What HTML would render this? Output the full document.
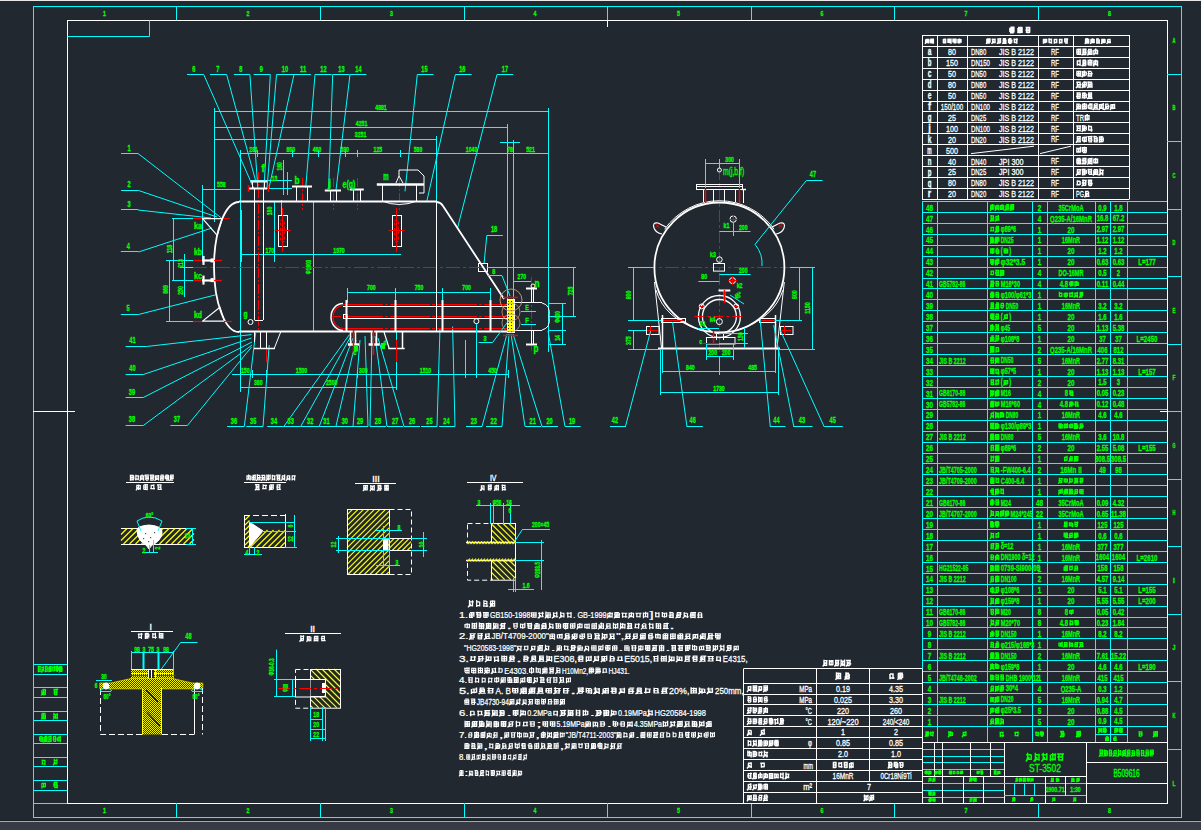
<!DOCTYPE html>
<html><head><meta charset="utf-8"><style>
html,body{margin:0;padding:0;background:#212830;overflow:hidden;width:1201px;height:830px}
svg{display:block;font-family:"Liberation Sans",sans-serif}
</style></head><body>
<svg width="1201" height="830" viewBox="0 0 1201 830">
<defs><pattern id="dz" width="2" height="2" patternUnits="userSpaceOnUse"><rect width="2" height="2" fill="#212830"/><rect width="1" height="1" fill="#ffff00"/><rect x="1" y="1" width="1" height="1" fill="#ffff00"/></pattern><pattern id="dt" width="3" height="3" patternUnits="userSpaceOnUse"><rect width="3" height="3" fill="#ffff00"/><rect x="1" y="1" width="1" height="1" fill="#303020"/></pattern></defs>
<rect width="1201" height="830" fill="#212830"/>
<rect x="0" y="0" width="1201" height="1" fill="#e8e8e8"/>
<rect x="0" y="820" width="1201" height="1" fill="#1a1e24"/>
<rect x="0" y="821" width="1201" height="1.2" fill="#a3a9b1"/>
<rect x="0" y="822.2" width="1201" height="8" fill="#363b45"/>
<rect x="33.5" y="6.5" width="1148" height="811" stroke="#00ffff" stroke-width="1" fill="none"/>
<rect x="67.5" y="20.5" width="1100" height="783" stroke="#ffffff" stroke-width="1" fill="none"/>
<line x1="176.5" y1="6" x2="176.5" y2="20" stroke="#00ffff" stroke-width="1"/>
<line x1="176.5" y1="803" x2="176.5" y2="817" stroke="#00ffff" stroke-width="1"/>
<line x1="320.5" y1="6" x2="320.5" y2="20" stroke="#00ffff" stroke-width="1"/>
<line x1="320.5" y1="803" x2="320.5" y2="817" stroke="#00ffff" stroke-width="1"/>
<line x1="464.5" y1="6" x2="464.5" y2="20" stroke="#00ffff" stroke-width="1"/>
<line x1="464.5" y1="803" x2="464.5" y2="817" stroke="#00ffff" stroke-width="1"/>
<line x1="607.5" y1="6" x2="607.5" y2="20" stroke="#00ffff" stroke-width="1"/>
<line x1="607.5" y1="803" x2="607.5" y2="817" stroke="#00ffff" stroke-width="1"/>
<line x1="751.5" y1="6" x2="751.5" y2="20" stroke="#00ffff" stroke-width="1"/>
<line x1="751.5" y1="803" x2="751.5" y2="817" stroke="#00ffff" stroke-width="1"/>
<line x1="894.5" y1="6" x2="894.5" y2="20" stroke="#00ffff" stroke-width="1"/>
<line x1="894.5" y1="803" x2="894.5" y2="817" stroke="#00ffff" stroke-width="1"/>
<line x1="1038.5" y1="6" x2="1038.5" y2="20" stroke="#00ffff" stroke-width="1"/>
<line x1="1038.5" y1="803" x2="1038.5" y2="817" stroke="#00ffff" stroke-width="1"/>
<text transform="translate(104.5,13.5)" y="2.88" font-size="8" fill="#00ff00" stroke="#00ff00" stroke-width="0.3" text-anchor="middle" textLength="2.96" lengthAdjust="spacingAndGlyphs" font-weight="bold">1</text>
<text transform="translate(104.5,810.5)" y="2.88" font-size="8" fill="#00ff00" stroke="#00ff00" stroke-width="0.3" text-anchor="middle" textLength="2.96" lengthAdjust="spacingAndGlyphs" font-weight="bold">1</text>
<text transform="translate(248,13.5)" y="2.88" font-size="8" fill="#00ff00" stroke="#00ff00" stroke-width="0.3" text-anchor="middle" textLength="2.96" lengthAdjust="spacingAndGlyphs" font-weight="bold">2</text>
<text transform="translate(248,810.5)" y="2.88" font-size="8" fill="#00ff00" stroke="#00ff00" stroke-width="0.3" text-anchor="middle" textLength="2.96" lengthAdjust="spacingAndGlyphs" font-weight="bold">2</text>
<text transform="translate(391.5,13.5)" y="2.88" font-size="8" fill="#00ff00" stroke="#00ff00" stroke-width="0.3" text-anchor="middle" textLength="2.96" lengthAdjust="spacingAndGlyphs" font-weight="bold">3</text>
<text transform="translate(391.5,810.5)" y="2.88" font-size="8" fill="#00ff00" stroke="#00ff00" stroke-width="0.3" text-anchor="middle" textLength="2.96" lengthAdjust="spacingAndGlyphs" font-weight="bold">3</text>
<text transform="translate(535,13.5)" y="2.88" font-size="8" fill="#00ff00" stroke="#00ff00" stroke-width="0.3" text-anchor="middle" textLength="2.96" lengthAdjust="spacingAndGlyphs" font-weight="bold">4</text>
<text transform="translate(535,810.5)" y="2.88" font-size="8" fill="#00ff00" stroke="#00ff00" stroke-width="0.3" text-anchor="middle" textLength="2.96" lengthAdjust="spacingAndGlyphs" font-weight="bold">4</text>
<text transform="translate(678.5,13.5)" y="2.88" font-size="8" fill="#00ff00" stroke="#00ff00" stroke-width="0.3" text-anchor="middle" textLength="2.96" lengthAdjust="spacingAndGlyphs" font-weight="bold">5</text>
<text transform="translate(678.5,810.5)" y="2.88" font-size="8" fill="#00ff00" stroke="#00ff00" stroke-width="0.3" text-anchor="middle" textLength="2.96" lengthAdjust="spacingAndGlyphs" font-weight="bold">5</text>
<text transform="translate(822,13.5)" y="2.88" font-size="8" fill="#00ff00" stroke="#00ff00" stroke-width="0.3" text-anchor="middle" textLength="2.96" lengthAdjust="spacingAndGlyphs" font-weight="bold">6</text>
<text transform="translate(822,810.5)" y="2.88" font-size="8" fill="#00ff00" stroke="#00ff00" stroke-width="0.3" text-anchor="middle" textLength="2.96" lengthAdjust="spacingAndGlyphs" font-weight="bold">6</text>
<text transform="translate(966,13.5)" y="2.88" font-size="8" fill="#00ff00" stroke="#00ff00" stroke-width="0.3" text-anchor="middle" textLength="2.96" lengthAdjust="spacingAndGlyphs" font-weight="bold">7</text>
<text transform="translate(966,810.5)" y="2.88" font-size="8" fill="#00ff00" stroke="#00ff00" stroke-width="0.3" text-anchor="middle" textLength="2.96" lengthAdjust="spacingAndGlyphs" font-weight="bold">7</text>
<text transform="translate(1109.5,13.5)" y="2.88" font-size="8" fill="#00ff00" stroke="#00ff00" stroke-width="0.3" text-anchor="middle" textLength="2.96" lengthAdjust="spacingAndGlyphs" font-weight="bold">8</text>
<text transform="translate(1109.5,810.5)" y="2.88" font-size="8" fill="#00ff00" stroke="#00ff00" stroke-width="0.3" text-anchor="middle" textLength="2.96" lengthAdjust="spacingAndGlyphs" font-weight="bold">8</text>
<line x1="1167" y1="74.5" x2="1181" y2="74.5" stroke="#00ffff" stroke-width="1"/>
<line x1="1167" y1="141.5" x2="1181" y2="141.5" stroke="#00ffff" stroke-width="1"/>
<line x1="1167" y1="209.5" x2="1181" y2="209.5" stroke="#00ffff" stroke-width="1"/>
<line x1="1167" y1="276.5" x2="1181" y2="276.5" stroke="#00ffff" stroke-width="1"/>
<line x1="1167" y1="344.5" x2="1181" y2="344.5" stroke="#00ffff" stroke-width="1"/>
<line x1="1167" y1="411.5" x2="1181" y2="411.5" stroke="#00ffff" stroke-width="1"/>
<line x1="1167" y1="479.5" x2="1181" y2="479.5" stroke="#00ffff" stroke-width="1"/>
<line x1="1167" y1="546.5" x2="1181" y2="546.5" stroke="#00ffff" stroke-width="1"/>
<line x1="1167" y1="614.5" x2="1181" y2="614.5" stroke="#00ffff" stroke-width="1"/>
<line x1="1167" y1="681.5" x2="1181" y2="681.5" stroke="#00ffff" stroke-width="1"/>
<line x1="1167" y1="749.5" x2="1181" y2="749.5" stroke="#00ffff" stroke-width="1"/>
<text transform="translate(1174,40)" y="2.88" font-size="8" fill="#00ff00" stroke="#00ff00" stroke-width="0.3" text-anchor="middle" textLength="2.96" lengthAdjust="spacingAndGlyphs" font-weight="bold">A</text>
<text transform="translate(1174,107.5)" y="2.88" font-size="8" fill="#00ff00" stroke="#00ff00" stroke-width="0.3" text-anchor="middle" textLength="2.96" lengthAdjust="spacingAndGlyphs" font-weight="bold">B</text>
<text transform="translate(1174,175)" y="2.88" font-size="8" fill="#00ff00" stroke="#00ff00" stroke-width="0.3" text-anchor="middle" textLength="2.96" lengthAdjust="spacingAndGlyphs" font-weight="bold">C</text>
<text transform="translate(1174,242.5)" y="2.88" font-size="8" fill="#00ff00" stroke="#00ff00" stroke-width="0.3" text-anchor="middle" textLength="2.96" lengthAdjust="spacingAndGlyphs" font-weight="bold">D</text>
<text transform="translate(1174,310)" y="2.88" font-size="8" fill="#00ff00" stroke="#00ff00" stroke-width="0.3" text-anchor="middle" textLength="2.96" lengthAdjust="spacingAndGlyphs" font-weight="bold">E</text>
<text transform="translate(1174,377.5)" y="2.88" font-size="8" fill="#00ff00" stroke="#00ff00" stroke-width="0.3" text-anchor="middle" textLength="2.96" lengthAdjust="spacingAndGlyphs" font-weight="bold">F</text>
<text transform="translate(1174,445)" y="2.88" font-size="8" fill="#00ff00" stroke="#00ff00" stroke-width="0.3" text-anchor="middle" textLength="2.96" lengthAdjust="spacingAndGlyphs" font-weight="bold">G</text>
<text transform="translate(1174,512.5)" y="2.88" font-size="8" fill="#00ff00" stroke="#00ff00" stroke-width="0.3" text-anchor="middle" textLength="2.96" lengthAdjust="spacingAndGlyphs" font-weight="bold">H</text>
<text transform="translate(1174,580)" y="2.88" font-size="8" fill="#00ff00" stroke="#00ff00" stroke-width="0.3" text-anchor="middle" textLength="1.78" lengthAdjust="spacingAndGlyphs" font-weight="bold">I</text>
<text transform="translate(1174,647.5)" y="2.88" font-size="8" fill="#00ff00" stroke="#00ff00" stroke-width="0.3" text-anchor="middle" textLength="2.96" lengthAdjust="spacingAndGlyphs" font-weight="bold">J</text>
<text transform="translate(1174,715)" y="2.88" font-size="8" fill="#00ff00" stroke="#00ff00" stroke-width="0.3" text-anchor="middle" textLength="2.96" lengthAdjust="spacingAndGlyphs" font-weight="bold">K</text>
<text transform="translate(1174,783)" y="2.88" font-size="8" fill="#00ff00" stroke="#00ff00" stroke-width="0.3" text-anchor="middle" textLength="2.96" lengthAdjust="spacingAndGlyphs" font-weight="bold">L</text>
<line x1="33" y1="411.5" x2="75" y2="411.5" stroke="#ffffff" stroke-width="1"/>
<line x1="1160" y1="411.5" x2="1167" y2="411.5" stroke="#ffffff" stroke-width="1"/>
<line x1="607.5" y1="20" x2="607.5" y2="27" stroke="#ffffff" stroke-width="1"/>
<polyline points="67.5,36.5 149.5,36.5 149.5,20.5" stroke="#00ffff" stroke-width="1" fill="none"/>
<line x1="33" y1="664.5" x2="67" y2="664.5" stroke="#00ffff" stroke-width="1"/>
<line x1="33" y1="674.5" x2="67" y2="674.5" stroke="#00ffff" stroke-width="1"/>
<line x1="33" y1="687.5" x2="67" y2="687.5" stroke="#00ffff" stroke-width="1"/>
<line x1="33" y1="697.5" x2="67" y2="697.5" stroke="#00ffff" stroke-width="1"/>
<line x1="33" y1="711.5" x2="67" y2="711.5" stroke="#00ffff" stroke-width="1"/>
<line x1="33" y1="720.5" x2="67" y2="720.5" stroke="#00ffff" stroke-width="1"/>
<line x1="33" y1="734.5" x2="67" y2="734.5" stroke="#00ffff" stroke-width="1"/>
<line x1="33" y1="743.5" x2="67" y2="743.5" stroke="#00ffff" stroke-width="1"/>
<line x1="33" y1="757.5" x2="67" y2="757.5" stroke="#00ffff" stroke-width="1"/>
<line x1="33" y1="766.5" x2="67" y2="766.5" stroke="#00ffff" stroke-width="1"/>
<line x1="33" y1="780.5" x2="67" y2="780.5" stroke="#00ffff" stroke-width="1"/>
<line x1="33" y1="790.5" x2="67" y2="790.5" stroke="#00ffff" stroke-width="1"/>
<line x1="33" y1="803.5" x2="67" y2="803.5" stroke="#00ffff" stroke-width="1"/>
<path d="M37.86 666.67H40.9M38.31 669H40.85M38.06 671.33H39.99M38.33 665.88V672.35M40.08 666.23V672.08M42.04 667.25H43.89M41.66 670.75H44.49M41.93 666.52V672.41M43.68 665.89V671.53M41.05 672.5L42.8 669M45.22 666.67H47.55M45.24 669H47.43M44.76 671.33H47.55M45.53 665.83V672.33M47.28 666.75V671.51M49.07 666.67H51.26M49.22 669H51.37M48.51 671.33H51.56M48.83 666.86V672.36M50 666.03V671.63M51.17 666.1V671.71M52.39 667.25H55.18M52.21 670.75H54.37M52.73 666.24V670.82M54.48 665.64V671.52M56.18 666.67H58.33M56.06 669H58.47M56.33 671.33H57.96M56.03 666.33V671.34M57.2 665.61V671.27M58.37 666.63V670.76M59.98 666.67H62.19M60.04 669H62.18M59.69 671.33H62.03M59.63 665.88V672M60.8 666.79V671.8M61.97 667.1V671.63M59.05 672.5L60.8 669" stroke="#00ff00" stroke-width="1.25" fill="none"/>
<path d="M42.39 689.67H44.96M42.36 692H45.81M41.65 694.33H45.68M41.88 690.05V693.82M43.62 688.76V695.19M45.38 688.91V695.09M41 695.5L43.62 692" stroke="#00ff00" stroke-width="1.25" fill="none"/>
<path d="M53.41 689.38H58.24M53.66 691.12H57.67M53.89 692.88H56.75M54.09 694.62H57.44M54.31 689.58V694.32M56.94 688.59V693.93" stroke="#00ff00" stroke-width="1.25" fill="none"/>
<path d="M41.63 713.38H45.63M41.76 715.12H45.62M41.3 716.88H44.7M41.69 718.62H46.08M41.88 713.55V719.32M43.62 713.49V718.56M45.38 714.16V718.43M41 719.5L43.62 716" stroke="#00ff00" stroke-width="1.25" fill="none"/>
<path d="M53.23 714.25H57.85M53.55 717.75H57.68M53.88 712.71V718.01M55.62 714.24V718.68M57.38 713.35V719.35M53 719.5L55.62 716" stroke="#00ff00" stroke-width="1.25" fill="none"/>
<path d="M39.57 736.67H42.39M39.62 739H43.02M40.19 741.33H42.82M39.67 736.71V740.9M41.12 736.83V741.98M42.57 736.63V742.34M44.57 736.38H47.27M43.68 738.12H47.02M44.04 739.88H46.9M44.19 741.62H46.7M44.11 736.83V742.16M45.56 735.92V741.8M47.01 736.91V742.15M43.39 742.5L45.56 739M49.12 736.38H51.14M48.44 738.12H51.92M48.62 739.88H51.72M48.88 741.62H51.23M48.91 736.11V740.79M51.09 735.64V742.32M47.83 742.5L50 739M52.9 736.67H55.33M53.06 739H56.61M53.45 741.33H56.16M53.36 736.63V741.04M55.53 735.71V741.82M57.87 737.25H60.49M57.54 740.75H60.94M57.43 737.16V741.24M58.88 736.31V741.2M60.33 735.65V742.22" stroke="#00ff00" stroke-width="1.25" fill="none"/>
<path d="M41.93 760.25H45.52M42.03 763.75H45.29M42.31 759.54V764.67M44.94 760.14V765.23" stroke="#00ff00" stroke-width="1.25" fill="none"/>
<path d="M54.26 760.25H57.11M53.16 763.75H57.07M54.31 758.74V763.77M56.94 758.84V763.97M53 765.5L55.62 762" stroke="#00ff00" stroke-width="1.25" fill="none"/>
<path d="M41.79 783.25H45.05M41.51 786.75H45.39M41.88 782.96V788.39M43.62 782.79V786.93M45.38 782.66V787.07" stroke="#00ff00" stroke-width="1.25" fill="none"/>
<path d="M53.84 782.38H57.43M53.03 784.12H57.56M53.29 785.88H58.24M54.26 787.62H57.98M54.31 782.33V787.23M56.94 782.47V787.93" stroke="#00ff00" stroke-width="1.25" fill="none"/>
<path d="M1010.42 27.38H1014.52M1010.04 29.12H1014.28M1009.57 30.88H1013.4M1009.95 32.62H1013.76M1010.03 27.83V31.9M1011.9 27.28V32.43M1013.77 27.38V32.6M1018.05 27.67H1022.38M1018.08 30H1021.33M1018.76 32.33H1021.25M1018.13 28.06V33.15M1020 27.28V32.77M1021.87 27.19V32.95M1025.66 27.67H1030.39M1025.51 30H1029.59M1026.88 32.33H1029.82M1026.7 27.14V33.06M1029.5 26.74V32.68" stroke="#ffffff" stroke-width="1.75" fill="none"/>
<line x1="922" y1="35.5" x2="1129" y2="35.5" stroke="#ffffff" stroke-width="1"/>
<line x1="922" y1="46.5" x2="1129" y2="46.5" stroke="#ffffff" stroke-width="1"/>
<line x1="922" y1="57.5" x2="1129" y2="57.5" stroke="#ffffff" stroke-width="1"/>
<line x1="922" y1="68.5" x2="1129" y2="68.5" stroke="#ffffff" stroke-width="1"/>
<line x1="922" y1="79.5" x2="1129" y2="79.5" stroke="#ffffff" stroke-width="1"/>
<line x1="922" y1="90.5" x2="1129" y2="90.5" stroke="#ffffff" stroke-width="1"/>
<line x1="922" y1="101.5" x2="1129" y2="101.5" stroke="#ffffff" stroke-width="1"/>
<line x1="922" y1="111.5" x2="1129" y2="111.5" stroke="#ffffff" stroke-width="1"/>
<line x1="922" y1="122.5" x2="1129" y2="122.5" stroke="#ffffff" stroke-width="1"/>
<line x1="922" y1="133.5" x2="1129" y2="133.5" stroke="#ffffff" stroke-width="1"/>
<line x1="922" y1="144.5" x2="1129" y2="144.5" stroke="#ffffff" stroke-width="1"/>
<line x1="922" y1="155.5" x2="1129" y2="155.5" stroke="#ffffff" stroke-width="1"/>
<line x1="922" y1="166.5" x2="1129" y2="166.5" stroke="#ffffff" stroke-width="1"/>
<line x1="922" y1="177.5" x2="1129" y2="177.5" stroke="#ffffff" stroke-width="1"/>
<line x1="922" y1="188.5" x2="1129" y2="188.5" stroke="#ffffff" stroke-width="1"/>
<line x1="922" y1="199.5" x2="1129" y2="199.5" stroke="#ffffff" stroke-width="1"/>
<line x1="922.5" y1="35" x2="922.5" y2="199.5" stroke="#ffffff" stroke-width="1"/>
<line x1="937.5" y1="35" x2="937.5" y2="199.5" stroke="#ffffff" stroke-width="1"/>
<line x1="967.5" y1="35" x2="967.5" y2="199.5" stroke="#ffffff" stroke-width="1"/>
<line x1="1038.5" y1="35" x2="1038.5" y2="199.5" stroke="#ffffff" stroke-width="1"/>
<line x1="1073.5" y1="35" x2="1073.5" y2="199.5" stroke="#ffffff" stroke-width="1"/>
<line x1="1129.5" y1="35" x2="1129.5" y2="199.5" stroke="#ffffff" stroke-width="1"/>
<path d="M926.12 39.59H929.14M925.83 42.34H929.05M925.68 39.18V42.34M927.15 38.77V43.13M928.62 38.7V43.58M924.95 43.71L927.15 40.96M930.23 39.13H934.03M930.09 40.96H933.23M930.33 42.79H933.97M930.38 39.56V42.63M931.85 39.55V43.57M933.32 38.58V43.66" stroke="#ffffff" stroke-width="1.5" fill="none"/>
<path d="M943.38 39.13H945.58M943.19 40.96H945.45M942.84 42.79H945.99M943.4 38.92V43.03M945.6 38.66V43.33M948.48 39.59H951.35M947.32 42.34H951.58M948.03 38.57V42.87M949.5 38.52V43.35M950.97 38.38V43.69M953.12 39.13H956.64M953.24 40.96H955.46M953.58 42.79H956.35M953.03 38.46V42.43M954.5 39.07V42.98M955.97 38.49V43.1M958.36 39.13H960.39M957.35 40.96H961.68M957.97 42.79H960.41M958.03 38.92V43.37M959.5 38.82V42.8M960.97 39.1V42.81" stroke="#ffffff" stroke-width="1.5" fill="none"/>
<path d="M987.04 39.03H989.35M986.56 40.96H989.56M987.06 42.89H989.83M986.85 38.65V43.36M988.4 38.14V43.67M989.95 38.16V42.79M986.08 43.86L988.4 40.96M991.64 39.51H994.99M992.73 42.41H995.23M992.68 38.47V43.51M995 38.48V43.19M991.52 43.86L993.84 40.96M997.33 39.03H1000.26M998.31 40.96H1000.84M997.3 42.89H1000.26M998.12 38.51V43.34M1000.44 38.06V43.31M996.96 43.86L999.28 40.96M1002.75 38.79H1005.96M1002.53 40.23H1005.9M1002.6 41.69H1006.22M1002.95 43.14H1006.62M1003.56 38.97V43.74M1005.88 39.45V42.62M1002.4 43.86L1004.72 40.96M1008.9 38.79H1011.48M1008.53 40.23H1012.08M1008.7 41.69H1012.28M1008.99 43.14H1011.48M1008.61 38.8V43.24M1010.16 39.08V43.13M1011.71 39.38V42.77M1013.4 39.51H1017.86M1014.17 42.41H1016.58M1014.44 38.61V43.21M1016.76 38.13V43.83" stroke="#ffffff" stroke-width="1.5" fill="none"/>
<path d="M1043.07 39.51H1046.7M1042.8 42.41H1046.04M1043.47 39.36V43.73M1045.02 38.82V42.78M1046.57 38.75V42.69M1048.26 39.51H1051.68M1048.58 42.41H1051.4M1049.1 38.17V42.54M1051.42 38.48V43.79M1054.01 39.51H1057.36M1054.09 42.41H1056.86M1054.34 38.96V43.67M1056.66 38.76V43.16M1059.36 39.51H1062.66M1059.14 42.41H1062.41M1059.58 38.74V43.69M1061.9 39.36V43.57M1064.06 39.03H1068.19M1064.37 40.96H1066.92M1065.04 42.89H1067.76M1064.82 39.39V42.51M1067.14 38.17V43.73" stroke="#ffffff" stroke-width="1.5" fill="none"/>
<path d="M1084.98 39.03H1088.3M1085.51 40.96H1088.21M1085.78 42.89H1089.12M1085.57 39.36V43.16M1087.12 38.1V43.85M1088.67 38.77V43.21M1084.8 43.86L1087.12 40.96M1090.72 39.51H1094.44M1091.41 42.41H1094.88M1091.01 39.15V42.64M1092.56 38.23V42.52M1094.11 39.09V42.55M1090.24 43.86L1092.56 40.96M1096.23 39.03H1098.93M1096.5 40.96H1099.82M1096.28 42.89H1099.94M1096.84 38.13V43.71M1099.16 39.27V43.45M1101.73 39.51H1105.32M1102.2 42.41H1104.67M1101.89 38.68V43.82M1103.44 39.16V43.28M1104.99 39.33V43.06M1101.12 43.86L1103.44 40.96M1107.86 39.51H1110.63M1107.42 42.41H1111.01M1107.72 39.32V43.16M1110.04 39.38V43.06M1106.56 43.86L1108.88 40.96" stroke="#ffffff" stroke-width="1.5" fill="none"/>
<text transform="translate(929.5,51.88)" y="3.6" font-size="10" fill="#ffffff" stroke="#ffffff" stroke-width="0.3" text-anchor="middle" textLength="3.7" lengthAdjust="spacingAndGlyphs" font-weight="bold">a</text>
<text transform="translate(952,51.88)" y="3.42" font-size="9.5" fill="#ffffff" stroke="#ffffff" stroke-width="0.3" text-anchor="middle" textLength="7.98" lengthAdjust="spacingAndGlyphs">80</text>
<text transform="translate(971,51.88)" y="3.42" font-size="9.5" fill="#ffffff" stroke="#ffffff" stroke-width="0.3" text-anchor="start" textLength="15.2" lengthAdjust="spacingAndGlyphs">DN80</text>
<text transform="translate(999,51.88)" y="3.42" font-size="9.5" fill="#ffffff" stroke="#ffffff" stroke-width="0.3" text-anchor="start" textLength="35.05" lengthAdjust="spacingAndGlyphs">JIS B 2122</text>
<text transform="translate(1055,51.88)" y="3.24" font-size="9" fill="#ffffff" stroke="#ffffff" stroke-width="0.3" text-anchor="middle" textLength="8.01" lengthAdjust="spacingAndGlyphs">RF</text>
<path d="M1076.46 49.55H1081.04M1077.21 51.88H1080.39M1076.67 54.21H1081.07M1076.91 49.23V54.21M1078.73 48.59V54.25M1080.55 48.51V54.5M1082.4 49.26H1086.57M1082.9 51.01H1086.42M1082.56 52.76H1086.72M1081.95 54.51H1086.21M1083.03 48.94V54.74M1085.76 49.8V55.03M1081.66 55.38L1084.39 51.88M1088 49.55H1091.92M1087.94 51.88H1092.23M1087.42 54.21H1092.33M1088.23 50.07V55.16M1090.05 49.26V54.28M1091.87 49.89V55M1087.32 55.38L1090.05 51.88M1093.63 50.13H1097.71M1094.54 53.63H1097.05M1093.89 49.91V55.34M1095.71 48.44V54.14M1097.53 49.95V54.55" stroke="#ffffff" stroke-width="1.44" fill="none"/>
<text transform="translate(929.5,62.8)" y="3.6" font-size="10" fill="#ffffff" stroke="#ffffff" stroke-width="0.3" text-anchor="middle" textLength="3.7" lengthAdjust="spacingAndGlyphs" font-weight="bold">b</text>
<text transform="translate(952,62.8)" y="3.42" font-size="9.5" fill="#ffffff" stroke="#ffffff" stroke-width="0.3" text-anchor="middle" textLength="11.97" lengthAdjust="spacingAndGlyphs">150</text>
<text transform="translate(971,62.8)" y="3.42" font-size="9.5" fill="#ffffff" stroke="#ffffff" stroke-width="0.3" text-anchor="start" textLength="19" lengthAdjust="spacingAndGlyphs">DN150</text>
<text transform="translate(999,62.8)" y="3.42" font-size="9.5" fill="#ffffff" stroke="#ffffff" stroke-width="0.3" text-anchor="start" textLength="35.05" lengthAdjust="spacingAndGlyphs">JIS B 2122</text>
<text transform="translate(1055,62.8)" y="3.24" font-size="9" fill="#ffffff" stroke="#ffffff" stroke-width="0.3" text-anchor="middle" textLength="8.01" lengthAdjust="spacingAndGlyphs">RF</text>
<path d="M1076.64 61.05H1079.94M1077.35 64.55H1080.06M1077.37 61V65.87M1080.1 59.49V66.03M1083.2 60.17H1085.94M1082.72 61.92H1085.87M1082.41 63.67H1086.22M1081.72 65.42H1085.84M1083.03 59.71V64.69M1085.76 60.43V65.77M1081.66 66.3L1084.39 62.8M1088.46 60.47H1092.6M1087.44 62.8H1091.92M1088.27 65.13H1092.14M1088.23 59.69V65.25M1090.05 59.32V65.77M1091.87 60.11V64.62M1093.84 61.05H1097.54M1093.03 64.55H1097.77M1093.89 60.44V66.2M1095.71 59.64V64.75M1097.53 60.43V66.16M1092.98 66.3L1095.71 62.8" stroke="#ffffff" stroke-width="1.44" fill="none"/>
<text transform="translate(929.5,73.72)" y="3.6" font-size="10" fill="#ffffff" stroke="#ffffff" stroke-width="0.3" text-anchor="middle" textLength="3.7" lengthAdjust="spacingAndGlyphs" font-weight="bold">c</text>
<text transform="translate(952,73.72)" y="3.42" font-size="9.5" fill="#ffffff" stroke="#ffffff" stroke-width="0.3" text-anchor="middle" textLength="7.98" lengthAdjust="spacingAndGlyphs">50</text>
<text transform="translate(971,73.72)" y="3.42" font-size="9.5" fill="#ffffff" stroke="#ffffff" stroke-width="0.3" text-anchor="start" textLength="15.2" lengthAdjust="spacingAndGlyphs">DN50</text>
<text transform="translate(999,73.72)" y="3.42" font-size="9.5" fill="#ffffff" stroke="#ffffff" stroke-width="0.3" text-anchor="start" textLength="35.05" lengthAdjust="spacingAndGlyphs">JIS B 2122</text>
<text transform="translate(1055,73.72)" y="3.24" font-size="9" fill="#ffffff" stroke="#ffffff" stroke-width="0.3" text-anchor="middle" textLength="8.01" lengthAdjust="spacingAndGlyphs">RF</text>
<path d="M1076.37 71.39H1081.4M1076.55 73.72H1080.77M1077.12 76.05H1081.14M1076.91 71.61V75.93M1078.73 71.1V76.86M1080.55 71.92V76.67M1082.02 71.97H1085.87M1082.14 75.47H1085.56M1082.57 71.09V76.89M1084.39 70.61V76.49M1086.21 71.38V75.56M1081.66 77.22L1084.39 73.72M1087.67 71.39H1091.18M1087.55 73.72H1092.7M1087.42 76.05H1092.14M1088.68 71.79V75.67M1091.41 71.5V75.47" stroke="#ffffff" stroke-width="1.44" fill="none"/>
<text transform="translate(929.5,84.64)" y="3.6" font-size="10" fill="#ffffff" stroke="#ffffff" stroke-width="0.3" text-anchor="middle" textLength="3.7" lengthAdjust="spacingAndGlyphs" font-weight="bold">d</text>
<text transform="translate(952,84.64)" y="3.42" font-size="9.5" fill="#ffffff" stroke="#ffffff" stroke-width="0.3" text-anchor="middle" textLength="7.98" lengthAdjust="spacingAndGlyphs">80</text>
<text transform="translate(971,84.64)" y="3.42" font-size="9.5" fill="#ffffff" stroke="#ffffff" stroke-width="0.3" text-anchor="start" textLength="15.2" lengthAdjust="spacingAndGlyphs">DN80</text>
<text transform="translate(999,84.64)" y="3.42" font-size="9.5" fill="#ffffff" stroke="#ffffff" stroke-width="0.3" text-anchor="start" textLength="35.05" lengthAdjust="spacingAndGlyphs">JIS B 2122</text>
<text transform="translate(1055,84.64)" y="3.24" font-size="9" fill="#ffffff" stroke="#ffffff" stroke-width="0.3" text-anchor="middle" textLength="8.01" lengthAdjust="spacingAndGlyphs">RF</text>
<path d="M1076.3 82.31H1079.93M1077.22 84.64H1081.41M1077.09 86.97H1080.84M1077.37 81.79V87.56M1080.1 81.44V88.13M1076 88.14L1078.73 84.64M1083.23 82.31H1086.92M1083.24 84.64H1086.78M1082.24 86.97H1085.77M1082.57 82.58V87.38M1084.39 81.23V87.31M1086.21 81.79V86.53M1081.66 88.14L1084.39 84.64M1087.37 82.31H1092.11M1088.65 84.64H1091.52M1087.39 86.97H1092.72M1088.23 81.25V86.53M1090.05 81.59V86.83M1091.87 82.71V87.55M1087.32 88.14L1090.05 84.64" stroke="#ffffff" stroke-width="1.44" fill="none"/>
<text transform="translate(929.5,95.56)" y="3.6" font-size="10" fill="#ffffff" stroke="#ffffff" stroke-width="0.3" text-anchor="middle" textLength="3.7" lengthAdjust="spacingAndGlyphs" font-weight="bold">e</text>
<text transform="translate(952,95.56)" y="3.42" font-size="9.5" fill="#ffffff" stroke="#ffffff" stroke-width="0.3" text-anchor="middle" textLength="7.98" lengthAdjust="spacingAndGlyphs">50</text>
<text transform="translate(971,95.56)" y="3.42" font-size="9.5" fill="#ffffff" stroke="#ffffff" stroke-width="0.3" text-anchor="start" textLength="15.2" lengthAdjust="spacingAndGlyphs">DN50</text>
<text transform="translate(999,95.56)" y="3.42" font-size="9.5" fill="#ffffff" stroke="#ffffff" stroke-width="0.3" text-anchor="start" textLength="35.05" lengthAdjust="spacingAndGlyphs">JIS B 2122</text>
<text transform="translate(1055,95.56)" y="3.24" font-size="9" fill="#ffffff" stroke="#ffffff" stroke-width="0.3" text-anchor="middle" textLength="8.01" lengthAdjust="spacingAndGlyphs">RF</text>
<path d="M1076.43 92.94H1080.29M1076.52 94.69H1081.01M1076.01 96.44H1080.22M1077.5 98.19H1080.42M1077.37 93.71V99.02M1080.1 92.47V98.23M1083.16 93.23H1085.79M1081.88 95.56H1086.31M1081.67 97.89H1085.59M1082.57 92.59V97.85M1084.39 92.32V98.65M1086.21 93.57V98.25M1088.16 92.94H1092.14M1087.58 94.69H1092.11M1088.38 96.44H1091.99M1088.21 98.19H1092.52M1088.68 92.81V98.88M1091.41 92.19V97.97M1087.32 99.06L1090.05 95.56" stroke="#ffffff" stroke-width="1.44" fill="none"/>
<text transform="translate(929.5,106.48)" y="3.6" font-size="10" fill="#ffffff" stroke="#ffffff" stroke-width="0.3" text-anchor="middle" textLength="2.96" lengthAdjust="spacingAndGlyphs" font-weight="bold">f</text>
<text transform="translate(952,106.48)" y="3.42" font-size="9.5" fill="#ffffff" stroke="#ffffff" stroke-width="0.3" text-anchor="middle" textLength="22.61" lengthAdjust="spacingAndGlyphs">150/100</text>
<text transform="translate(971,106.48)" y="3.42" font-size="9.5" fill="#ffffff" stroke="#ffffff" stroke-width="0.3" text-anchor="start" textLength="19" lengthAdjust="spacingAndGlyphs">DN100</text>
<text transform="translate(999,106.48)" y="3.42" font-size="9.5" fill="#ffffff" stroke="#ffffff" stroke-width="0.3" text-anchor="start" textLength="35.05" lengthAdjust="spacingAndGlyphs">JIS B 2122</text>
<text transform="translate(1055,106.48)" y="3.24" font-size="9" fill="#ffffff" stroke="#ffffff" stroke-width="0.3" text-anchor="middle" textLength="8.01" lengthAdjust="spacingAndGlyphs">RF</text>
<path d="M1077.62 104.15H1079.87M1076.28 106.48H1081.24M1076.75 108.81H1080M1076.91 103.39V109.04M1078.73 104.33V108.65M1080.55 104.34V109.47M1076 109.98L1078.73 106.48M1082.08 104.15H1086.69M1082.38 106.48H1086.82M1082.05 108.81H1086.66M1082.57 104.57V109.65M1084.39 103.09V109.54M1086.21 103.41V109.06M1088.94 104.73H1092.61M1088.1 108.23H1091.44M1088.23 104.45V108.38M1090.05 103.05V109.47M1091.87 103.19V109.65M1094.5 103.85H1097.83M1094.4 105.6H1097.7M1093.41 107.35H1097.17M1094.53 109.1H1098.27M1094.35 104.02V108.9M1097.08 103.36V109.33M1092.98 109.98L1095.71 106.48M1098.7 104.73H1102.9M1100.14 108.23H1102.77M1099.55 104.41V109.26M1101.37 103.63V108.89M1103.19 103.12V109.92M1098.64 109.98L1101.37 106.48M1104.97 104.15H1108.46M1105.39 106.48H1109.51M1105.17 108.81H1108.69M1105.66 103.68V109.51M1108.39 104.71V108.81M1104.3 109.98L1107.03 106.48M1111.18 104.73H1113.97M1110.64 108.23H1115.39M1110.87 104.32V108.58M1112.69 104.11V109.3M1114.51 103.69V108.33M1109.96 109.98L1112.69 106.48" stroke="#ffffff" stroke-width="1.44" fill="none"/>
<text transform="translate(929.5,117.4)" y="3.6" font-size="10" fill="#ffffff" stroke="#ffffff" stroke-width="0.3" text-anchor="middle" textLength="3.7" lengthAdjust="spacingAndGlyphs" font-weight="bold">g</text>
<text transform="translate(952,117.4)" y="3.42" font-size="9.5" fill="#ffffff" stroke="#ffffff" stroke-width="0.3" text-anchor="middle" textLength="7.98" lengthAdjust="spacingAndGlyphs">25</text>
<text transform="translate(971,117.4)" y="3.42" font-size="9.5" fill="#ffffff" stroke="#ffffff" stroke-width="0.3" text-anchor="start" textLength="15.2" lengthAdjust="spacingAndGlyphs">DN25</text>
<text transform="translate(999,117.4)" y="3.42" font-size="9.5" fill="#ffffff" stroke="#ffffff" stroke-width="0.3" text-anchor="start" textLength="35.05" lengthAdjust="spacingAndGlyphs">JIS B 2122</text>
<text transform="translate(1055,117.4)" y="3.24" font-size="9" fill="#ffffff" stroke="#ffffff" stroke-width="0.3" text-anchor="middle" textLength="8.01" lengthAdjust="spacingAndGlyphs">RF</text>
<text transform="translate(1076,117.4)" y="3.42" font-size="9.5" fill="#ffffff" stroke="#ffffff" stroke-width="0.3" text-anchor="start" textLength="7.98" lengthAdjust="spacingAndGlyphs">TR</text>
<path d="M1084.59 115.65H1089.71M1085.35 119.15H1089.26M1085.31 115.25V120.67M1087.13 113.99V120.65M1088.95 115.31V120.21" stroke="#ffffff" stroke-width="1.44" fill="none"/>
<text transform="translate(929.5,128.32)" y="3.6" font-size="10" fill="#ffffff" stroke="#ffffff" stroke-width="0.3" text-anchor="middle" textLength="2.59" lengthAdjust="spacingAndGlyphs" font-weight="bold">j</text>
<text transform="translate(952,128.32)" y="3.42" font-size="9.5" fill="#ffffff" stroke="#ffffff" stroke-width="0.3" text-anchor="middle" textLength="11.97" lengthAdjust="spacingAndGlyphs">100</text>
<text transform="translate(971,128.32)" y="3.42" font-size="9.5" fill="#ffffff" stroke="#ffffff" stroke-width="0.3" text-anchor="start" textLength="19" lengthAdjust="spacingAndGlyphs">DN100</text>
<text transform="translate(999,128.32)" y="3.42" font-size="9.5" fill="#ffffff" stroke="#ffffff" stroke-width="0.3" text-anchor="start" textLength="35.05" lengthAdjust="spacingAndGlyphs">JIS B 2122</text>
<text transform="translate(1055,128.32)" y="3.24" font-size="9" fill="#ffffff" stroke="#ffffff" stroke-width="0.3" text-anchor="middle" textLength="8.01" lengthAdjust="spacingAndGlyphs">RF</text>
<path d="M1076.24 125.99H1081M1076.85 128.32H1079.94M1076.18 130.65H1080.66M1077.37 126.23V130.13M1080.1 125.17V131.6M1081.75 125.99H1085.6M1082.3 128.32H1085.64M1082.68 130.65H1085.77M1082.57 125.1V130.44M1084.39 125.21V131.11M1086.21 126.3V130.37M1081.66 131.82L1084.39 128.32M1087.97 126.57H1091.93M1087.95 130.07H1092.58M1088.68 125.25V130.55M1091.41 126.39V131.75" stroke="#ffffff" stroke-width="1.44" fill="none"/>
<text transform="translate(929.5,139.24)" y="3.6" font-size="10" fill="#ffffff" stroke="#ffffff" stroke-width="0.3" text-anchor="middle" textLength="3.7" lengthAdjust="spacingAndGlyphs" font-weight="bold">k</text>
<text transform="translate(952,139.24)" y="3.42" font-size="9.5" fill="#ffffff" stroke="#ffffff" stroke-width="0.3" text-anchor="middle" textLength="7.98" lengthAdjust="spacingAndGlyphs">20</text>
<text transform="translate(971,139.24)" y="3.42" font-size="9.5" fill="#ffffff" stroke="#ffffff" stroke-width="0.3" text-anchor="start" textLength="15.2" lengthAdjust="spacingAndGlyphs">DN20</text>
<text transform="translate(999,139.24)" y="3.42" font-size="9.5" fill="#ffffff" stroke="#ffffff" stroke-width="0.3" text-anchor="start" textLength="35.05" lengthAdjust="spacingAndGlyphs">JIS B 2122</text>
<text transform="translate(1055,139.24)" y="3.24" font-size="9" fill="#ffffff" stroke="#ffffff" stroke-width="0.3" text-anchor="middle" textLength="8.01" lengthAdjust="spacingAndGlyphs">RF</text>
<path d="M1077.09 136.62H1080.93M1076.64 138.37H1080.71M1077.39 140.12H1080.19M1077.06 141.87H1080.96M1077.37 136.18V142.06M1080.1 136.38V141.86M1076 142.74L1078.73 139.24M1082.42 137.49H1086.39M1082.67 140.99H1085.78M1082.57 137.2V141.32M1084.39 136.44V142.62M1086.21 136.37V142.1M1087.39 136.62H1092.57M1088.83 138.37H1092.27M1088.5 140.12H1092.65M1088.55 141.87H1091.31M1088.68 136.88V141.37M1091.41 135.79V142.62M1093.3 136.62H1096.83M1093.79 138.37H1096.87M1094.48 140.12H1098.17M1094.27 141.87H1096.92M1094.35 135.85V142.13M1097.08 137.06V142.46M1098.88 136.91H1103.28M1100.15 139.24H1103.76M1099.07 141.57H1103.27M1099.55 136.3V142.68M1101.37 136.06V142.46M1103.19 137.38V141.55" stroke="#ffffff" stroke-width="1.44" fill="none"/>
<text transform="translate(929.5,150.16)" y="3.6" font-size="10" fill="#ffffff" stroke="#ffffff" stroke-width="0.3" text-anchor="middle" textLength="4.44" lengthAdjust="spacingAndGlyphs" font-weight="bold">m</text>
<text transform="translate(952,150.16)" y="3.42" font-size="9.5" fill="#ffffff" stroke="#ffffff" stroke-width="0.3" text-anchor="middle" textLength="11.97" lengthAdjust="spacingAndGlyphs">500</text>
<line x1="971" y1="153.62" x2="1034" y2="146.2" stroke="#ffffff" stroke-width="1"/>
<line x1="1040" y1="153.62" x2="1071" y2="146.2" stroke="#ffffff" stroke-width="1"/>
<path d="M1076.19 148.41H1080.59M1077.04 151.91H1080.87M1076.91 148.19V152.69M1078.73 147.68V152.12M1080.55 146.84V151.92M1082.09 147.83H1085.5M1082.61 150.16H1086.53M1082.91 152.49H1086.4M1082.57 146.97V152.36M1084.39 146.74V152.23M1086.21 147.1V152.54" stroke="#ffffff" stroke-width="1.44" fill="none"/>
<text transform="translate(929.5,161.08)" y="3.6" font-size="10" fill="#ffffff" stroke="#ffffff" stroke-width="0.3" text-anchor="middle" textLength="3.7" lengthAdjust="spacingAndGlyphs" font-weight="bold">n</text>
<text transform="translate(952,161.08)" y="3.42" font-size="9.5" fill="#ffffff" stroke="#ffffff" stroke-width="0.3" text-anchor="middle" textLength="7.98" lengthAdjust="spacingAndGlyphs">40</text>
<text transform="translate(971,161.08)" y="3.42" font-size="9.5" fill="#ffffff" stroke="#ffffff" stroke-width="0.3" text-anchor="start" textLength="15.2" lengthAdjust="spacingAndGlyphs">DN40</text>
<text transform="translate(999,161.08)" y="3.42" font-size="9.5" fill="#ffffff" stroke="#ffffff" stroke-width="0.3" text-anchor="start" textLength="24.54" lengthAdjust="spacingAndGlyphs">JPI 300</text>
<text transform="translate(1055,161.08)" y="3.24" font-size="9" fill="#ffffff" stroke="#ffffff" stroke-width="0.3" text-anchor="middle" textLength="8.01" lengthAdjust="spacingAndGlyphs">RF</text>
<path d="M1077.2 158.45H1080.24M1076.36 160.2H1080.98M1077.02 161.95H1080.78M1076.6 163.7H1081.38M1076.91 158.43V163.51M1078.73 157.66V164.48M1080.55 158.57V164.05M1082.34 158.45H1086.63M1081.88 160.2H1086.52M1083.02 161.95H1086.86M1081.68 163.7H1085.81M1083.03 158.82V163.79M1085.76 157.69V164.33M1088.65 158.75H1091.2M1087.41 161.08H1091.44M1088.78 163.41H1091.81M1088.23 158.59V163.53M1090.05 158.49V163.72M1091.87 157.87V164.58M1087.32 164.58L1090.05 161.08M1093.28 159.33H1098.18M1094.47 162.83H1098.27M1093.89 158.65V163.43M1095.71 157.93V163.86M1097.53 158.49V163.46" stroke="#ffffff" stroke-width="1.44" fill="none"/>
<text transform="translate(929.5,172)" y="3.6" font-size="10" fill="#ffffff" stroke="#ffffff" stroke-width="0.3" text-anchor="middle" textLength="3.7" lengthAdjust="spacingAndGlyphs" font-weight="bold">p</text>
<text transform="translate(952,172)" y="3.42" font-size="9.5" fill="#ffffff" stroke="#ffffff" stroke-width="0.3" text-anchor="middle" textLength="7.98" lengthAdjust="spacingAndGlyphs">25</text>
<text transform="translate(971,172)" y="3.42" font-size="9.5" fill="#ffffff" stroke="#ffffff" stroke-width="0.3" text-anchor="start" textLength="15.2" lengthAdjust="spacingAndGlyphs">DN25</text>
<text transform="translate(999,172)" y="3.42" font-size="9.5" fill="#ffffff" stroke="#ffffff" stroke-width="0.3" text-anchor="start" textLength="24.54" lengthAdjust="spacingAndGlyphs">JPI 300</text>
<text transform="translate(1055,172)" y="3.24" font-size="9" fill="#ffffff" stroke="#ffffff" stroke-width="0.3" text-anchor="middle" textLength="8.01" lengthAdjust="spacingAndGlyphs">RF</text>
<path d="M1076.83 169.67H1081.36M1077.03 172H1079.83M1077.19 174.33H1080.68M1077.37 169.44V174.84M1080.1 169.26V173.9M1076 175.5L1078.73 172M1081.95 169.38H1085.49M1082.09 171.12H1086.07M1081.86 172.88H1085.66M1083.18 174.62H1085.58M1082.57 168.96V175.41M1084.39 169.61V174.31M1086.21 169.7V173.89M1087.46 169.67H1091.95M1087.6 172H1091.3M1088.7 174.33H1092.45M1088.68 168.78V173.9M1091.41 168.84V174.82M1093.75 169.67H1097.57M1092.99 172H1098.4M1094.55 174.33H1098.06M1093.89 170.05V174.12M1095.71 169.19V174.48M1097.53 169.49V175.2M1092.98 175.5L1095.71 172M1099.66 170.25H1103.83M1100.24 173.75H1102.95M1100.01 168.55V175.26M1102.74 169.63V175.43M1098.64 175.5L1101.37 172" stroke="#ffffff" stroke-width="1.44" fill="none"/>
<text transform="translate(929.5,182.92)" y="3.6" font-size="10" fill="#ffffff" stroke="#ffffff" stroke-width="0.3" text-anchor="middle" textLength="3.7" lengthAdjust="spacingAndGlyphs" font-weight="bold">q</text>
<text transform="translate(952,182.92)" y="3.42" font-size="9.5" fill="#ffffff" stroke="#ffffff" stroke-width="0.3" text-anchor="middle" textLength="7.98" lengthAdjust="spacingAndGlyphs">80</text>
<text transform="translate(971,182.92)" y="3.42" font-size="9.5" fill="#ffffff" stroke="#ffffff" stroke-width="0.3" text-anchor="start" textLength="15.2" lengthAdjust="spacingAndGlyphs">DN80</text>
<text transform="translate(999,182.92)" y="3.42" font-size="9.5" fill="#ffffff" stroke="#ffffff" stroke-width="0.3" text-anchor="start" textLength="35.05" lengthAdjust="spacingAndGlyphs">JIS B 2122</text>
<text transform="translate(1055,182.92)" y="3.24" font-size="9" fill="#ffffff" stroke="#ffffff" stroke-width="0.3" text-anchor="middle" textLength="8.01" lengthAdjust="spacingAndGlyphs">RF</text>
<path d="M1077.4 181.17H1080.21M1076.33 184.67H1079.9M1077.37 180.35V185.26M1080.1 180.96V185.1M1082.06 180.59H1086.79M1081.72 182.92H1085.57M1083.15 185.25H1085.89M1083.03 179.57V185.11M1085.76 180.53V185.59M1081.66 186.42L1084.39 182.92M1087.8 180.3H1092.23M1087.75 182.05H1092.21M1088.84 183.8H1092.7M1088.56 185.55H1091.29M1088.68 180.77V185.37M1091.41 180.25V185.92" stroke="#ffffff" stroke-width="1.44" fill="none"/>
<text transform="translate(929.5,193.84)" y="3.6" font-size="10" fill="#ffffff" stroke="#ffffff" stroke-width="0.3" text-anchor="middle" textLength="3.33" lengthAdjust="spacingAndGlyphs" font-weight="bold">r</text>
<text transform="translate(952,193.84)" y="3.42" font-size="9.5" fill="#ffffff" stroke="#ffffff" stroke-width="0.3" text-anchor="middle" textLength="7.98" lengthAdjust="spacingAndGlyphs">20</text>
<text transform="translate(971,193.84)" y="3.42" font-size="9.5" fill="#ffffff" stroke="#ffffff" stroke-width="0.3" text-anchor="start" textLength="15.2" lengthAdjust="spacingAndGlyphs">DN20</text>
<text transform="translate(999,193.84)" y="3.42" font-size="9.5" fill="#ffffff" stroke="#ffffff" stroke-width="0.3" text-anchor="start" textLength="35.05" lengthAdjust="spacingAndGlyphs">JIS B 2122</text>
<text transform="translate(1055,193.84)" y="3.24" font-size="9" fill="#ffffff" stroke="#ffffff" stroke-width="0.3" text-anchor="middle" textLength="8.01" lengthAdjust="spacingAndGlyphs">RF</text>
<text transform="translate(1076,193.84)" y="3.42" font-size="9.5" fill="#ffffff" stroke="#ffffff" stroke-width="0.3" text-anchor="start" textLength="7.98" lengthAdjust="spacingAndGlyphs">PG</text>
<path d="M1085.11 191.51H1088.59M1084.97 193.84H1088.71M1085.28 196.17H1089.51M1085.77 191.85V197.18M1088.5 191.77V197.04M1084.4 197.34L1087.13 193.84" stroke="#ffffff" stroke-width="1.44" fill="none"/>
<line x1="922" y1="201.5" x2="1167" y2="201.5" stroke="#00ffff" stroke-width="1"/>
<line x1="922" y1="212.5" x2="1167" y2="212.5" stroke="#00ffff" stroke-width="1"/>
<line x1="922" y1="223.5" x2="1167" y2="223.5" stroke="#00ffff" stroke-width="1"/>
<line x1="922" y1="234.5" x2="1167" y2="234.5" stroke="#00ffff" stroke-width="1"/>
<line x1="922" y1="245.5" x2="1167" y2="245.5" stroke="#00ffff" stroke-width="1"/>
<line x1="922" y1="256.5" x2="1167" y2="256.5" stroke="#00ffff" stroke-width="1"/>
<line x1="922" y1="267.5" x2="1167" y2="267.5" stroke="#00ffff" stroke-width="1"/>
<line x1="922" y1="278.5" x2="1167" y2="278.5" stroke="#00ffff" stroke-width="1"/>
<line x1="922" y1="288.5" x2="1167" y2="288.5" stroke="#00ffff" stroke-width="1"/>
<line x1="922" y1="299.5" x2="1167" y2="299.5" stroke="#00ffff" stroke-width="1"/>
<line x1="922" y1="310.5" x2="1167" y2="310.5" stroke="#00ffff" stroke-width="1"/>
<line x1="922" y1="321.5" x2="1167" y2="321.5" stroke="#00ffff" stroke-width="1"/>
<line x1="922" y1="332.5" x2="1167" y2="332.5" stroke="#00ffff" stroke-width="1"/>
<line x1="922" y1="343.5" x2="1167" y2="343.5" stroke="#00ffff" stroke-width="1"/>
<line x1="922" y1="354.5" x2="1167" y2="354.5" stroke="#00ffff" stroke-width="1"/>
<line x1="922" y1="365.5" x2="1167" y2="365.5" stroke="#00ffff" stroke-width="1"/>
<line x1="922" y1="376.5" x2="1167" y2="376.5" stroke="#00ffff" stroke-width="1"/>
<line x1="922" y1="387.5" x2="1167" y2="387.5" stroke="#00ffff" stroke-width="1"/>
<line x1="922" y1="398.5" x2="1167" y2="398.5" stroke="#00ffff" stroke-width="1"/>
<line x1="922" y1="409.5" x2="1167" y2="409.5" stroke="#00ffff" stroke-width="1"/>
<line x1="922" y1="420.5" x2="1167" y2="420.5" stroke="#00ffff" stroke-width="1"/>
<line x1="922" y1="431.5" x2="1167" y2="431.5" stroke="#00ffff" stroke-width="1"/>
<line x1="922" y1="442.5" x2="1167" y2="442.5" stroke="#00ffff" stroke-width="1"/>
<line x1="922" y1="453.5" x2="1167" y2="453.5" stroke="#00ffff" stroke-width="1"/>
<line x1="922" y1="463.5" x2="1167" y2="463.5" stroke="#00ffff" stroke-width="1"/>
<line x1="922" y1="474.5" x2="1167" y2="474.5" stroke="#00ffff" stroke-width="1"/>
<line x1="922" y1="485.5" x2="1167" y2="485.5" stroke="#00ffff" stroke-width="1"/>
<line x1="922" y1="496.5" x2="1167" y2="496.5" stroke="#00ffff" stroke-width="1"/>
<line x1="922" y1="507.5" x2="1167" y2="507.5" stroke="#00ffff" stroke-width="1"/>
<line x1="922" y1="518.5" x2="1167" y2="518.5" stroke="#00ffff" stroke-width="1"/>
<line x1="922" y1="529.5" x2="1167" y2="529.5" stroke="#00ffff" stroke-width="1"/>
<line x1="922" y1="540.5" x2="1167" y2="540.5" stroke="#00ffff" stroke-width="1"/>
<line x1="922" y1="551.5" x2="1167" y2="551.5" stroke="#00ffff" stroke-width="1"/>
<line x1="922" y1="562.5" x2="1167" y2="562.5" stroke="#00ffff" stroke-width="1"/>
<line x1="922" y1="573.5" x2="1167" y2="573.5" stroke="#00ffff" stroke-width="1"/>
<line x1="922" y1="584.5" x2="1167" y2="584.5" stroke="#00ffff" stroke-width="1"/>
<line x1="922" y1="595.5" x2="1167" y2="595.5" stroke="#00ffff" stroke-width="1"/>
<line x1="922" y1="606.5" x2="1167" y2="606.5" stroke="#00ffff" stroke-width="1"/>
<line x1="922" y1="617.5" x2="1167" y2="617.5" stroke="#00ffff" stroke-width="1"/>
<line x1="922" y1="627.5" x2="1167" y2="627.5" stroke="#00ffff" stroke-width="1"/>
<line x1="922" y1="638.5" x2="1167" y2="638.5" stroke="#00ffff" stroke-width="1"/>
<line x1="922" y1="649.5" x2="1167" y2="649.5" stroke="#00ffff" stroke-width="1"/>
<line x1="922" y1="660.5" x2="1167" y2="660.5" stroke="#00ffff" stroke-width="1"/>
<line x1="922" y1="671.5" x2="1167" y2="671.5" stroke="#00ffff" stroke-width="1"/>
<line x1="922" y1="682.5" x2="1167" y2="682.5" stroke="#00ffff" stroke-width="1"/>
<line x1="922" y1="693.5" x2="1167" y2="693.5" stroke="#00ffff" stroke-width="1"/>
<line x1="922" y1="704.5" x2="1167" y2="704.5" stroke="#00ffff" stroke-width="1"/>
<line x1="922" y1="715.5" x2="1167" y2="715.5" stroke="#00ffff" stroke-width="1"/>
<line x1="922" y1="726.5" x2="1167" y2="726.5" stroke="#00ffff" stroke-width="1"/>
<line x1="937.5" y1="201.5" x2="937.5" y2="742.5" stroke="#00ffff" stroke-width="1"/>
<line x1="987.5" y1="201.5" x2="987.5" y2="742.5" stroke="#00ffff" stroke-width="1"/>
<line x1="1032.5" y1="201.5" x2="1032.5" y2="742.5" stroke="#00ffff" stroke-width="1"/>
<line x1="1047.5" y1="201.5" x2="1047.5" y2="742.5" stroke="#00ffff" stroke-width="1"/>
<line x1="1095.5" y1="201.5" x2="1095.5" y2="742.5" stroke="#00ffff" stroke-width="1"/>
<line x1="1110.5" y1="201.5" x2="1110.5" y2="742.5" stroke="#00ffff" stroke-width="1"/>
<line x1="1127.5" y1="201.5" x2="1127.5" y2="742.5" stroke="#00ffff" stroke-width="1"/>
<line x1="922.5" y1="201.5" x2="922.5" y2="742.5" stroke="#00ffff" stroke-width="1"/>
<line x1="1167.5" y1="201.5" x2="1167.5" y2="803" stroke="#ffffff" stroke-width="1"/>
<text transform="translate(929.5,207.27)" y="3.42" font-size="9.5" fill="#00ff00" stroke="#00ff00" stroke-width="0.3" text-anchor="middle" textLength="7.03" lengthAdjust="spacingAndGlyphs" font-weight="bold">48</text>
<path d="M991.06 205.52H993.26M990.01 209.02H993.94M990.77 204.63V209.37M992.31 204.09V209.9M993.85 204.38V209.31M990 210.77L992.31 207.27M996.05 205.52H998.24M995.24 209.02H999.31M995.69 205.41V209.43M997.23 204.63V209.03M998.77 204.75V210.58M994.92 210.77L997.23 207.27M1001.13 205.52H1003.22M1000.87 209.02H1003.87M1000.61 204.9V210.12M1002.15 204.3V210.02M1003.69 204.72V210.47M1006.07 204.64H1009.2M1005.58 206.39H1008.42M1005.6 208.14H1009.33M1005.57 209.89H1008.66M1005.91 205.29V209.98M1008.23 204.74V210.2M1004.76 210.77L1007.07 207.27M1010.48 204.64H1014.13M1010.32 206.39H1013.07M1010.01 208.14H1014.03M1010.1 209.89H1013.33M1010.45 205.24V210.5M1011.99 204.04V210.33M1013.53 204.34V209.85M1009.68 210.77L1011.99 207.27" stroke="#00ff00" stroke-width="1.38" fill="none"/>
<text transform="translate(1039.5,207.27)" y="3.42" font-size="9.5" fill="#00ff00" stroke="#00ff00" stroke-width="0.3" text-anchor="middle" textLength="3.52" lengthAdjust="spacingAndGlyphs" font-weight="bold">2</text>
<text transform="translate(1071,207.27)" y="3.42" font-size="9.5" fill="#00ff00" stroke="#00ff00" stroke-width="0.3" text-anchor="middle" textLength="24.96" lengthAdjust="spacingAndGlyphs" font-weight="bold">35CrMoA</text>
<text transform="translate(1102.5,207.27)" y="3.24" font-size="9" fill="#00ff00" stroke="#00ff00" stroke-width="0.3" text-anchor="middle" textLength="8.32" lengthAdjust="spacingAndGlyphs" font-weight="bold">0.9</text>
<text transform="translate(1118.5,207.27)" y="3.24" font-size="9" fill="#00ff00" stroke="#00ff00" stroke-width="0.3" text-anchor="middle" textLength="8.32" lengthAdjust="spacingAndGlyphs" font-weight="bold">1.8</text>
<text transform="translate(929.5,218.2)" y="3.42" font-size="9.5" fill="#00ff00" stroke="#00ff00" stroke-width="0.3" text-anchor="middle" textLength="7.03" lengthAdjust="spacingAndGlyphs" font-weight="bold">47</text>
<path d="M990.36 215.87H993.3M991.38 218.2H994.39M990.91 220.54H994.35M991.15 214.97V221.44M993.47 215.23V221.18M990 221.7L992.31 218.2M995.31 216.45H998.31M995.56 219.95H999.52M996.07 216.2V220.94M998.38 215.09V219.99M994.92 221.7L997.23 218.2" stroke="#00ff00" stroke-width="1.38" fill="none"/>
<text transform="translate(1039.5,218.2)" y="3.42" font-size="9.5" fill="#00ff00" stroke="#00ff00" stroke-width="0.3" text-anchor="middle" textLength="3.52" lengthAdjust="spacingAndGlyphs" font-weight="bold">4</text>
<text transform="translate(1071,218.2)" y="3.42" font-size="9.5" fill="#00ff00" stroke="#00ff00" stroke-width="0.3" text-anchor="middle" textLength="41.83" lengthAdjust="spacingAndGlyphs" font-weight="bold">Q235-A/16MnR</text>
<text transform="translate(1102.5,218.2)" y="3.24" font-size="9" fill="#00ff00" stroke="#00ff00" stroke-width="0.3" text-anchor="middle" textLength="11.65" lengthAdjust="spacingAndGlyphs" font-weight="bold">16.8</text>
<text transform="translate(1118.5,218.2)" y="3.24" font-size="9" fill="#00ff00" stroke="#00ff00" stroke-width="0.3" text-anchor="middle" textLength="11.65" lengthAdjust="spacingAndGlyphs" font-weight="bold">67.2</text>
<text transform="translate(929.5,229.14)" y="3.42" font-size="9.5" fill="#00ff00" stroke="#00ff00" stroke-width="0.3" text-anchor="middle" textLength="7.03" lengthAdjust="spacingAndGlyphs" font-weight="bold">46</text>
<path d="M990.36 227.39H993.6M990.01 230.89H994.28M991.15 227.13V231.41M993.47 226.67V231.5M995.86 226.51H998.65M995.55 228.26H999.11M995.79 230.01H999.4M995.5 231.76H998.46M996.07 226.89V231.54M998.38 226.08V231.9M994.92 232.64L997.23 229.14" stroke="#00ff00" stroke-width="1.38" fill="none"/>
<text transform="translate(1000.8,229.14)" y="3.06" font-size="8.5" fill="#00ff00" stroke="#00ff00" stroke-width="0.3" text-anchor="start" textLength="15.41" lengthAdjust="spacingAndGlyphs" font-weight="bold">φ89*6</text>
<text transform="translate(1039.5,229.14)" y="3.42" font-size="9.5" fill="#00ff00" stroke="#00ff00" stroke-width="0.3" text-anchor="middle" textLength="3.52" lengthAdjust="spacingAndGlyphs" font-weight="bold">1</text>
<text transform="translate(1071,229.14)" y="3.42" font-size="9.5" fill="#00ff00" stroke="#00ff00" stroke-width="0.3" text-anchor="middle" textLength="7.03" lengthAdjust="spacingAndGlyphs" font-weight="bold">20</text>
<text transform="translate(1102.5,229.14)" y="3.24" font-size="9" fill="#00ff00" stroke="#00ff00" stroke-width="0.3" text-anchor="middle" textLength="11.65" lengthAdjust="spacingAndGlyphs" font-weight="bold">2.97</text>
<text transform="translate(1118.5,229.14)" y="3.24" font-size="9" fill="#00ff00" stroke="#00ff00" stroke-width="0.3" text-anchor="middle" textLength="11.65" lengthAdjust="spacingAndGlyphs" font-weight="bold">2.97</text>
<text transform="translate(929.5,240.07)" y="3.42" font-size="9.5" fill="#00ff00" stroke="#00ff00" stroke-width="0.3" text-anchor="middle" textLength="7.03" lengthAdjust="spacingAndGlyphs" font-weight="bold">45</text>
<path d="M990.72 237.45H993.7M991.21 239.2H993.38M990.45 240.95H994.61M991.15 242.7H993.36M990.77 236.76V243.13M992.31 236.95V242.32M993.85 238.24V243.22M990 243.57L992.31 240.07M995.67 237.45H998.55M995.63 239.2H998.65M996.07 240.95H998.82M995.49 242.7H998.23M995.69 236.94V242.37M997.23 237.26V242.24M998.77 236.79V241.85M994.92 243.57L997.23 240.07" stroke="#00ff00" stroke-width="1.38" fill="none"/>
<text transform="translate(1000.8,240.07)" y="3.06" font-size="8.5" fill="#00ff00" stroke="#00ff00" stroke-width="0.3" text-anchor="start" textLength="12.58" lengthAdjust="spacingAndGlyphs" font-weight="bold">DN25</text>
<text transform="translate(1039.5,240.07)" y="3.42" font-size="9.5" fill="#00ff00" stroke="#00ff00" stroke-width="0.3" text-anchor="middle" textLength="3.52" lengthAdjust="spacingAndGlyphs" font-weight="bold">1</text>
<text transform="translate(1071,240.07)" y="3.42" font-size="9.5" fill="#00ff00" stroke="#00ff00" stroke-width="0.3" text-anchor="middle" textLength="18.28" lengthAdjust="spacingAndGlyphs" font-weight="bold">16MnR</text>
<text transform="translate(1102.5,240.07)" y="3.24" font-size="9" fill="#00ff00" stroke="#00ff00" stroke-width="0.3" text-anchor="middle" textLength="11.65" lengthAdjust="spacingAndGlyphs" font-weight="bold">1.12</text>
<text transform="translate(1118.5,240.07)" y="3.24" font-size="9" fill="#00ff00" stroke="#00ff00" stroke-width="0.3" text-anchor="middle" textLength="11.65" lengthAdjust="spacingAndGlyphs" font-weight="bold">1.12</text>
<text transform="translate(929.5,251.01)" y="3.42" font-size="9.5" fill="#00ff00" stroke="#00ff00" stroke-width="0.3" text-anchor="middle" textLength="7.03" lengthAdjust="spacingAndGlyphs" font-weight="bold">44</text>
<path d="M990.38 249.26H994.07M990.02 252.76H994.04M990.77 248.24V253.29M992.31 248.12V254.04M993.85 247.9V253.21M996.3 248.38H998.21M995.56 250.13H999.31M996.21 251.88H999.44M996.03 253.63H999.27M996.07 248.63V253.25M998.38 248.93V254.25" stroke="#00ff00" stroke-width="1.38" fill="none"/>
<text transform="translate(1000.8,251.01)" y="3.06" font-size="8.5" fill="#00ff00" stroke="#00ff00" stroke-width="0.3" text-anchor="start" textLength="1.89" lengthAdjust="spacingAndGlyphs" font-weight="bold">(</text>
<path d="M1004.85 248.84H1007.31M1004.31 251.01H1007.28M1004.03 253.17H1007.28M1004.17 248.13V253.11M1005.9 248.87V252.66M1007.63 248.86V253.47" stroke="#00ff00" stroke-width="1.38" fill="none"/>
<text transform="translate(1009.3,251.01)" y="3.06" font-size="8.5" fill="#00ff00" stroke="#00ff00" stroke-width="0.3" text-anchor="start" textLength="1.89" lengthAdjust="spacingAndGlyphs" font-weight="bold">)</text>
<text transform="translate(1039.5,251.01)" y="3.42" font-size="9.5" fill="#00ff00" stroke="#00ff00" stroke-width="0.3" text-anchor="middle" textLength="3.52" lengthAdjust="spacingAndGlyphs" font-weight="bold">1</text>
<text transform="translate(1071,251.01)" y="3.42" font-size="9.5" fill="#00ff00" stroke="#00ff00" stroke-width="0.3" text-anchor="middle" textLength="7.03" lengthAdjust="spacingAndGlyphs" font-weight="bold">20</text>
<text transform="translate(1102.5,251.01)" y="3.24" font-size="9" fill="#00ff00" stroke="#00ff00" stroke-width="0.3" text-anchor="middle" textLength="8.32" lengthAdjust="spacingAndGlyphs" font-weight="bold">1.2</text>
<text transform="translate(1118.5,251.01)" y="3.24" font-size="9" fill="#00ff00" stroke="#00ff00" stroke-width="0.3" text-anchor="middle" textLength="8.32" lengthAdjust="spacingAndGlyphs" font-weight="bold">1.2</text>
<text transform="translate(929.5,261.94)" y="3.42" font-size="9.5" fill="#00ff00" stroke="#00ff00" stroke-width="0.3" text-anchor="middle" textLength="7.03" lengthAdjust="spacingAndGlyphs" font-weight="bold">43</text>
<path d="M990.34 259.61H994.2M990.66 261.94H994.03M990.88 264.28H993.71M990.77 259.08V263.82M992.31 259.94V265.34M993.85 259.89V263.86M995.8 260.19H999.52M994.94 263.69H998.22M995.69 259.59V265M997.23 258.62V265.19M998.77 258.85V264.08M994.92 265.44L997.23 261.94" stroke="#00ff00" stroke-width="1.38" fill="none"/>
<text transform="translate(1000.8,261.94)" y="3.06" font-size="8.5" fill="#00ff00" stroke="#00ff00" stroke-width="0.3" text-anchor="start" textLength="24.53" lengthAdjust="spacingAndGlyphs" font-weight="bold">  φ32*3.5</text>
<text transform="translate(1039.5,261.94)" y="3.42" font-size="9.5" fill="#00ff00" stroke="#00ff00" stroke-width="0.3" text-anchor="middle" textLength="3.52" lengthAdjust="spacingAndGlyphs" font-weight="bold">1</text>
<text transform="translate(1071,261.94)" y="3.42" font-size="9.5" fill="#00ff00" stroke="#00ff00" stroke-width="0.3" text-anchor="middle" textLength="7.03" lengthAdjust="spacingAndGlyphs" font-weight="bold">20</text>
<text transform="translate(1102.5,261.94)" y="3.24" font-size="9" fill="#00ff00" stroke="#00ff00" stroke-width="0.3" text-anchor="middle" textLength="11.65" lengthAdjust="spacingAndGlyphs" font-weight="bold">0.63</text>
<text transform="translate(1118.5,261.94)" y="3.24" font-size="9" fill="#00ff00" stroke="#00ff00" stroke-width="0.3" text-anchor="middle" textLength="11.65" lengthAdjust="spacingAndGlyphs" font-weight="bold">0.63</text>
<text transform="translate(1147,261.94)" y="3.42" font-size="9.5" fill="#00ff00" stroke="#00ff00" stroke-width="0.3" text-anchor="middle" textLength="17.57" lengthAdjust="spacingAndGlyphs" font-weight="bold">L=177</text>
<text transform="translate(929.5,272.88)" y="3.42" font-size="9.5" fill="#00ff00" stroke="#00ff00" stroke-width="0.3" text-anchor="middle" textLength="7.03" lengthAdjust="spacingAndGlyphs" font-weight="bold">42</text>
<path d="M991.25 271.13H993.52M990.23 274.63H993.38M991.15 270.44V275.01M993.47 270.55V274.81M995.61 270.54H999.24M995.03 272.88H998.38M995.85 275.21H999.38M996.07 269.58V275.64M998.38 270.82V275.55M1001.09 270.54H1003.49M1000.18 272.88H1004.23M1000.67 275.21H1003.44M1000.61 269.66V275.82M1002.15 270.6V275.51M1003.69 269.9V275.56M999.84 276.38L1002.15 272.88" stroke="#00ff00" stroke-width="1.38" fill="none"/>
<text transform="translate(1039.5,272.88)" y="3.42" font-size="9.5" fill="#00ff00" stroke="#00ff00" stroke-width="0.3" text-anchor="middle" textLength="3.52" lengthAdjust="spacingAndGlyphs" font-weight="bold">4</text>
<text transform="translate(1071,272.88)" y="3.42" font-size="9.5" fill="#00ff00" stroke="#00ff00" stroke-width="0.3" text-anchor="middle" textLength="24.96" lengthAdjust="spacingAndGlyphs" font-weight="bold">DO-16MR</text>
<text transform="translate(1102.5,272.88)" y="3.24" font-size="9" fill="#00ff00" stroke="#00ff00" stroke-width="0.3" text-anchor="middle" textLength="8.32" lengthAdjust="spacingAndGlyphs" font-weight="bold">0.5</text>
<text transform="translate(1118.5,272.88)" y="3.24" font-size="9" fill="#00ff00" stroke="#00ff00" stroke-width="0.3" text-anchor="middle" textLength="3.33" lengthAdjust="spacingAndGlyphs" font-weight="bold">2</text>
<text transform="translate(929.5,283.81)" y="3.42" font-size="9.5" fill="#00ff00" stroke="#00ff00" stroke-width="0.3" text-anchor="middle" textLength="7.03" lengthAdjust="spacingAndGlyphs" font-weight="bold">41</text>
<text transform="translate(939,283.81)" y="3.24" font-size="9" fill="#00ff00" stroke="#00ff00" stroke-width="0.3" text-anchor="start" textLength="26.43" lengthAdjust="spacingAndGlyphs" font-weight="bold">GB5782-86</text>
<path d="M990.25 281.19H994.12M990.9 282.94H994.59M990.06 284.69H993.6M991.38 286.44H993.5M991.15 280.48V286.47M993.47 281.64V287.06M990 287.31L992.31 283.81M995.39 281.48H998.35M995.43 283.81H998.88M995.65 286.15H998.47M996.07 280.68V286.55M998.38 281.05V286.34" stroke="#00ff00" stroke-width="1.38" fill="none"/>
<text transform="translate(1000.8,283.81)" y="3.06" font-size="8.5" fill="#00ff00" stroke="#00ff00" stroke-width="0.3" text-anchor="start" textLength="19.18" lengthAdjust="spacingAndGlyphs" font-weight="bold">M16*30</text>
<text transform="translate(1039.5,283.81)" y="3.42" font-size="9.5" fill="#00ff00" stroke="#00ff00" stroke-width="0.3" text-anchor="middle" textLength="3.52" lengthAdjust="spacingAndGlyphs" font-weight="bold">4</text>
<text transform="translate(1068,283.81)" y="3.24" font-size="9" fill="#00ff00" stroke="#00ff00" stroke-width="0.3" text-anchor="end" textLength="8.32" lengthAdjust="spacingAndGlyphs" font-weight="bold">4.8</text>
<path d="M1070.19 281.81H1073.22M1069.73 283.81H1073.41M1069.73 285.81H1072.4M1069.8 281.79V285.62M1071.4 281.31V286.34M1073 281.26V285.93M1075.24 282.31H1077.72M1074.99 285.31H1078.93M1075 281.26V286.8M1076.6 281.1V285.43M1078.2 281.73V285.83" stroke="#00ff00" stroke-width="1.38" fill="none"/>
<text transform="translate(1102.5,283.81)" y="3.24" font-size="9" fill="#00ff00" stroke="#00ff00" stroke-width="0.3" text-anchor="middle" textLength="11.65" lengthAdjust="spacingAndGlyphs" font-weight="bold">0.11</text>
<text transform="translate(1118.5,283.81)" y="3.24" font-size="9" fill="#00ff00" stroke="#00ff00" stroke-width="0.3" text-anchor="middle" textLength="11.65" lengthAdjust="spacingAndGlyphs" font-weight="bold">0.44</text>
<text transform="translate(929.5,294.75)" y="3.42" font-size="9.5" fill="#00ff00" stroke="#00ff00" stroke-width="0.3" text-anchor="middle" textLength="7.03" lengthAdjust="spacingAndGlyphs" font-weight="bold">40</text>
<path d="M990.85 292.12H993.75M990.97 293.87H993.79M990.94 295.62H994.33M990.92 297.37H993.99M990.77 292.58V298.07M992.31 291.56V298.18M993.85 292.6V296.65M996.01 292.41H998.76M995.28 294.75H999.12M995.5 297.08H999.1M996.07 292V297.12M998.38 292.88V298.15" stroke="#00ff00" stroke-width="1.38" fill="none"/>
<text transform="translate(1000.8,294.75)" y="3.06" font-size="8.5" fill="#00ff00" stroke="#00ff00" stroke-width="0.3" text-anchor="start" textLength="30.51" lengthAdjust="spacingAndGlyphs" font-weight="bold">φ100/φ61*3</text>
<text transform="translate(1039.5,294.75)" y="3.42" font-size="9.5" fill="#00ff00" stroke="#00ff00" stroke-width="0.3" text-anchor="middle" textLength="3.52" lengthAdjust="spacingAndGlyphs" font-weight="bold">1</text>
<path d="M1059.31 293.25H1062.39M1059.2 296.25H1062.42M1059.4 291.85V296.73M1061.8 292.64V296.26M1064.51 293.25H1067.41M1063.52 296.25H1067.52M1064.2 293.09V296.81M1065.8 292.39V297.73M1067.4 292.75V296.27M1068.79 293.25H1073.37M1069.64 296.25H1073.05M1069.8 292.85V297.47M1072.2 291.82V296.59M1074.22 293.25H1077.8M1074.52 296.25H1077.64M1075 293.08V296.38M1077.4 291.83V297.7M1073.8 297.75L1076.2 294.75M1079.56 292.5H1083.35M1079.86 294H1082.42M1080.2 295.5H1082.92M1079.46 297H1082.43M1080.2 292.84V297.04M1082.6 292V296.3M1079 297.75L1081.4 294.75" stroke="#00ff00" stroke-width="1.38" fill="none"/>
<text transform="translate(929.5,305.68)" y="3.42" font-size="9.5" fill="#00ff00" stroke="#00ff00" stroke-width="0.3" text-anchor="middle" textLength="7.03" lengthAdjust="spacingAndGlyphs" font-weight="bold">39</text>
<path d="M990.87 303.06H994.04M990.53 304.81H993.53M991.31 306.56H993.53M990.79 308.31H994.21M991.15 302.29V307.48M993.47 303.41V307.73M990 309.18L992.31 305.68M996.07 303.06H998.71M995.35 304.81H998.95M996.15 306.56H999.02M995.87 308.31H998.71M996.07 303.75V307.77M998.38 302.68V309.18M994.92 309.18L997.23 305.68M1000.65 303.35H1003.33M1001.07 305.68H1004.4M1000.99 308.02H1003.33M1001 303.7V308.18M1003.31 302.66V307.69" stroke="#00ff00" stroke-width="1.38" fill="none"/>
<text transform="translate(1005.7,305.68)" y="3.06" font-size="8.5" fill="#00ff00" stroke="#00ff00" stroke-width="0.3" text-anchor="start" textLength="12.58" lengthAdjust="spacingAndGlyphs" font-weight="bold">DN50</text>
<text transform="translate(1039.5,305.68)" y="3.42" font-size="9.5" fill="#00ff00" stroke="#00ff00" stroke-width="0.3" text-anchor="middle" textLength="3.52" lengthAdjust="spacingAndGlyphs" font-weight="bold">1</text>
<text transform="translate(1071,305.68)" y="3.42" font-size="9.5" fill="#00ff00" stroke="#00ff00" stroke-width="0.3" text-anchor="middle" textLength="18.28" lengthAdjust="spacingAndGlyphs" font-weight="bold">16MnR</text>
<text transform="translate(1102.5,305.68)" y="3.24" font-size="9" fill="#00ff00" stroke="#00ff00" stroke-width="0.3" text-anchor="middle" textLength="8.32" lengthAdjust="spacingAndGlyphs" font-weight="bold">3.2</text>
<text transform="translate(1118.5,305.68)" y="3.24" font-size="9" fill="#00ff00" stroke="#00ff00" stroke-width="0.3" text-anchor="middle" textLength="8.32" lengthAdjust="spacingAndGlyphs" font-weight="bold">3.2</text>
<text transform="translate(929.5,316.62)" y="3.42" font-size="9.5" fill="#00ff00" stroke="#00ff00" stroke-width="0.3" text-anchor="middle" textLength="7.03" lengthAdjust="spacingAndGlyphs" font-weight="bold">38</text>
<path d="M990.48 313.99H994.5M990.77 315.74H993.51M990.28 317.49H993.58M991.29 319.24H994.3M990.77 314.18V318.93M992.31 313.93V319.76M993.85 313.56V318.8M995.66 314.28H999.05M995.01 316.62H998.99M995.64 318.95H999.18M996.07 314.58V319.56M998.38 314V319.76M994.92 320.12L997.23 316.62" stroke="#00ff00" stroke-width="1.38" fill="none"/>
<text transform="translate(1000.8,316.62)" y="3.06" font-size="8.5" fill="#00ff00" stroke="#00ff00" stroke-width="0.3" text-anchor="start" textLength="1.89" lengthAdjust="spacingAndGlyphs" font-weight="bold">(</text>
<path d="M1004.56 314.99H1008.05M1004.2 318.24H1007.94M1004.6 314.63V318.47M1007.2 313.77V318.37M1003.3 319.87L1005.9 316.62" stroke="#00ff00" stroke-width="1.38" fill="none"/>
<text transform="translate(1009.3,316.62)" y="3.06" font-size="8.5" fill="#00ff00" stroke="#00ff00" stroke-width="0.3" text-anchor="start" textLength="1.89" lengthAdjust="spacingAndGlyphs" font-weight="bold">)</text>
<text transform="translate(1039.5,316.62)" y="3.42" font-size="9.5" fill="#00ff00" stroke="#00ff00" stroke-width="0.3" text-anchor="middle" textLength="3.52" lengthAdjust="spacingAndGlyphs" font-weight="bold">1</text>
<text transform="translate(1071,316.62)" y="3.42" font-size="9.5" fill="#00ff00" stroke="#00ff00" stroke-width="0.3" text-anchor="middle" textLength="7.03" lengthAdjust="spacingAndGlyphs" font-weight="bold">20</text>
<text transform="translate(1102.5,316.62)" y="3.24" font-size="9" fill="#00ff00" stroke="#00ff00" stroke-width="0.3" text-anchor="middle" textLength="8.32" lengthAdjust="spacingAndGlyphs" font-weight="bold">1.6</text>
<text transform="translate(1118.5,316.62)" y="3.24" font-size="9" fill="#00ff00" stroke="#00ff00" stroke-width="0.3" text-anchor="middle" textLength="8.32" lengthAdjust="spacingAndGlyphs" font-weight="bold">1.6</text>
<text transform="translate(929.5,327.55)" y="3.42" font-size="9.5" fill="#00ff00" stroke="#00ff00" stroke-width="0.3" text-anchor="middle" textLength="7.03" lengthAdjust="spacingAndGlyphs" font-weight="bold">37</text>
<path d="M990.88 325.8H993.53M990.22 329.3H993.79M990.77 324.66V330.14M992.31 324.09V330.99M993.85 325.79V329.54M990 331.05L992.31 327.55M995.28 324.93H998.46M995.51 326.68H998.23M995.98 328.43H998.41M996.26 330.18H999.19M996.07 324.12V330.7M998.38 324.37V330.91M994.92 331.05L997.23 327.55" stroke="#00ff00" stroke-width="1.38" fill="none"/>
<text transform="translate(1000.8,327.55)" y="3.06" font-size="8.5" fill="#00ff00" stroke="#00ff00" stroke-width="0.3" text-anchor="start" textLength="9.44" lengthAdjust="spacingAndGlyphs" font-weight="bold">φ45</text>
<text transform="translate(1039.5,327.55)" y="3.42" font-size="9.5" fill="#00ff00" stroke="#00ff00" stroke-width="0.3" text-anchor="middle" textLength="3.52" lengthAdjust="spacingAndGlyphs" font-weight="bold">5</text>
<text transform="translate(1071,327.55)" y="3.42" font-size="9.5" fill="#00ff00" stroke="#00ff00" stroke-width="0.3" text-anchor="middle" textLength="7.03" lengthAdjust="spacingAndGlyphs" font-weight="bold">20</text>
<text transform="translate(1102.5,327.55)" y="3.24" font-size="9" fill="#00ff00" stroke="#00ff00" stroke-width="0.3" text-anchor="middle" textLength="11.65" lengthAdjust="spacingAndGlyphs" font-weight="bold">1.13</text>
<text transform="translate(1118.5,327.55)" y="3.24" font-size="9" fill="#00ff00" stroke="#00ff00" stroke-width="0.3" text-anchor="middle" textLength="11.65" lengthAdjust="spacingAndGlyphs" font-weight="bold">5.38</text>
<text transform="translate(929.5,338.49)" y="3.42" font-size="9.5" fill="#00ff00" stroke="#00ff00" stroke-width="0.3" text-anchor="middle" textLength="7.03" lengthAdjust="spacingAndGlyphs" font-weight="bold">36</text>
<path d="M991.21 335.86H993.98M991.31 337.61H993.36M990.09 339.36H993.79M990.55 341.11H994.45M990.77 336.67V341.54M992.31 335.98V340.87M993.85 336.66V340.82M990 341.99L992.31 338.49M995.43 336.15H999.21M995.92 338.49H999.3M996.23 340.82H998.24M996.07 335.09V341.02M998.38 335.04V340.38M994.92 341.99L997.23 338.49" stroke="#00ff00" stroke-width="1.38" fill="none"/>
<text transform="translate(1000.8,338.49)" y="3.06" font-size="8.5" fill="#00ff00" stroke="#00ff00" stroke-width="0.3" text-anchor="start" textLength="18.56" lengthAdjust="spacingAndGlyphs" font-weight="bold">φ108*8</text>
<text transform="translate(1039.5,338.49)" y="3.42" font-size="9.5" fill="#00ff00" stroke="#00ff00" stroke-width="0.3" text-anchor="middle" textLength="3.52" lengthAdjust="spacingAndGlyphs" font-weight="bold">1</text>
<text transform="translate(1071,338.49)" y="3.42" font-size="9.5" fill="#00ff00" stroke="#00ff00" stroke-width="0.3" text-anchor="middle" textLength="7.03" lengthAdjust="spacingAndGlyphs" font-weight="bold">20</text>
<text transform="translate(1102.5,338.49)" y="3.24" font-size="9" fill="#00ff00" stroke="#00ff00" stroke-width="0.3" text-anchor="middle" textLength="6.66" lengthAdjust="spacingAndGlyphs" font-weight="bold">37</text>
<text transform="translate(1118.5,338.49)" y="3.24" font-size="9" fill="#00ff00" stroke="#00ff00" stroke-width="0.3" text-anchor="middle" textLength="6.66" lengthAdjust="spacingAndGlyphs" font-weight="bold">37</text>
<text transform="translate(1147,338.49)" y="3.42" font-size="9.5" fill="#00ff00" stroke="#00ff00" stroke-width="0.3" text-anchor="middle" textLength="21.09" lengthAdjust="spacingAndGlyphs" font-weight="bold">L=2450</text>
<text transform="translate(929.5,349.42)" y="3.42" font-size="9.5" fill="#00ff00" stroke="#00ff00" stroke-width="0.3" text-anchor="middle" textLength="7.03" lengthAdjust="spacingAndGlyphs" font-weight="bold">35</text>
<path d="M990.08 346.8H994.42M991.05 348.55H993.32M990.94 350.3H994.21M990.82 352.05H993.57M990.77 346.11V352.36M992.31 346.37V352.71M993.85 346.76V352.63M990 352.92L992.31 349.42M995.57 347.67H998.28M996.03 351.17H999.32M996.07 347.38V352.79M998.38 347.01V352.27" stroke="#00ff00" stroke-width="1.38" fill="none"/>
<text transform="translate(1039.5,349.42)" y="3.42" font-size="9.5" fill="#00ff00" stroke="#00ff00" stroke-width="0.3" text-anchor="middle" textLength="3.52" lengthAdjust="spacingAndGlyphs" font-weight="bold">2</text>
<text transform="translate(1071,349.42)" y="3.42" font-size="9.5" fill="#00ff00" stroke="#00ff00" stroke-width="0.3" text-anchor="middle" textLength="41.83" lengthAdjust="spacingAndGlyphs" font-weight="bold">Q235-A/16MnR</text>
<text transform="translate(1102.5,349.42)" y="3.24" font-size="9" fill="#00ff00" stroke="#00ff00" stroke-width="0.3" text-anchor="middle" textLength="9.99" lengthAdjust="spacingAndGlyphs" font-weight="bold">406</text>
<text transform="translate(1118.5,349.42)" y="3.24" font-size="9" fill="#00ff00" stroke="#00ff00" stroke-width="0.3" text-anchor="middle" textLength="9.99" lengthAdjust="spacingAndGlyphs" font-weight="bold">812</text>
<text transform="translate(929.5,360.36)" y="3.42" font-size="9.5" fill="#00ff00" stroke="#00ff00" stroke-width="0.3" text-anchor="middle" textLength="7.03" lengthAdjust="spacingAndGlyphs" font-weight="bold">34</text>
<text transform="translate(939,360.36)" y="3.24" font-size="9" fill="#00ff00" stroke="#00ff00" stroke-width="0.3" text-anchor="start" textLength="26.73" lengthAdjust="spacingAndGlyphs" font-weight="bold">JIS B 2212</text>
<path d="M991.28 358.02H994.09M990.03 360.36H994.52M991.35 362.69H994.17M991.15 357.27V363.66M993.47 357.5V363.28M995.69 358.61H999.34M996.13 362.11H999.17M995.69 357.58V363.59M997.23 357.33V362.39M998.77 357.44V363.56M994.92 363.86L997.23 360.36" stroke="#00ff00" stroke-width="1.38" fill="none"/>
<text transform="translate(1000.8,360.36)" y="3.06" font-size="8.5" fill="#00ff00" stroke="#00ff00" stroke-width="0.3" text-anchor="start" textLength="12.58" lengthAdjust="spacingAndGlyphs" font-weight="bold">DN50</text>
<text transform="translate(1039.5,360.36)" y="3.42" font-size="9.5" fill="#00ff00" stroke="#00ff00" stroke-width="0.3" text-anchor="middle" textLength="3.52" lengthAdjust="spacingAndGlyphs" font-weight="bold">5</text>
<text transform="translate(1071,360.36)" y="3.42" font-size="9.5" fill="#00ff00" stroke="#00ff00" stroke-width="0.3" text-anchor="middle" textLength="18.28" lengthAdjust="spacingAndGlyphs" font-weight="bold">16MnR</text>
<text transform="translate(1102.5,360.36)" y="3.24" font-size="9" fill="#00ff00" stroke="#00ff00" stroke-width="0.3" text-anchor="middle" textLength="11.65" lengthAdjust="spacingAndGlyphs" font-weight="bold">2.77</text>
<text transform="translate(1118.5,360.36)" y="3.24" font-size="9" fill="#00ff00" stroke="#00ff00" stroke-width="0.3" text-anchor="middle" textLength="11.65" lengthAdjust="spacingAndGlyphs" font-weight="bold">8.31</text>
<text transform="translate(929.5,371.29)" y="3.42" font-size="9.5" fill="#00ff00" stroke="#00ff00" stroke-width="0.3" text-anchor="middle" textLength="7.03" lengthAdjust="spacingAndGlyphs" font-weight="bold">33</text>
<path d="M991.25 368.96H994.46M991.36 371.29H994.54M991.24 373.63H993.69M990.77 368.16V373.96M992.31 368.29V374.34M993.85 368.15V374.16M995.06 369.54H999.14M996.16 373.04H999.46M996.07 369.06V374.28M998.38 369.51V374.76" stroke="#00ff00" stroke-width="1.38" fill="none"/>
<text transform="translate(1000.8,371.29)" y="3.06" font-size="8.5" fill="#00ff00" stroke="#00ff00" stroke-width="0.3" text-anchor="start" textLength="15.41" lengthAdjust="spacingAndGlyphs" font-weight="bold">φ57*5</text>
<text transform="translate(1039.5,371.29)" y="3.42" font-size="9.5" fill="#00ff00" stroke="#00ff00" stroke-width="0.3" text-anchor="middle" textLength="3.52" lengthAdjust="spacingAndGlyphs" font-weight="bold">1</text>
<text transform="translate(1071,371.29)" y="3.42" font-size="9.5" fill="#00ff00" stroke="#00ff00" stroke-width="0.3" text-anchor="middle" textLength="7.03" lengthAdjust="spacingAndGlyphs" font-weight="bold">20</text>
<text transform="translate(1102.5,371.29)" y="3.24" font-size="9" fill="#00ff00" stroke="#00ff00" stroke-width="0.3" text-anchor="middle" textLength="11.65" lengthAdjust="spacingAndGlyphs" font-weight="bold">1.13</text>
<text transform="translate(1118.5,371.29)" y="3.24" font-size="9" fill="#00ff00" stroke="#00ff00" stroke-width="0.3" text-anchor="middle" textLength="11.65" lengthAdjust="spacingAndGlyphs" font-weight="bold">1.13</text>
<text transform="translate(1147,371.29)" y="3.42" font-size="9.5" fill="#00ff00" stroke="#00ff00" stroke-width="0.3" text-anchor="middle" textLength="17.57" lengthAdjust="spacingAndGlyphs" font-weight="bold">L=157</text>
<text transform="translate(929.5,382.23)" y="3.42" font-size="9.5" fill="#00ff00" stroke="#00ff00" stroke-width="0.3" text-anchor="middle" textLength="7.03" lengthAdjust="spacingAndGlyphs" font-weight="bold">32</text>
<path d="M990.61 379.89H993.53M991.31 382.23H994.22M990.5 384.56H994.56M991.15 379.44V385.24M993.47 379.04V384.25M995.19 380.48H999.43M995.04 383.98H998.7M996.07 379.59V385.25M998.38 379.09V384.66" stroke="#00ff00" stroke-width="1.38" fill="none"/>
<text transform="translate(1000.8,382.23)" y="3.06" font-size="8.5" fill="#00ff00" stroke="#00ff00" stroke-width="0.3" text-anchor="start" textLength="1.89" lengthAdjust="spacingAndGlyphs" font-weight="bold">(</text>
<path d="M1003.62 380.6H1008.4M1004.44 383.85H1007.86M1004.17 380.15V385.39M1005.9 380.29V384.93M1007.63 380.35V384.07M1003.3 385.48L1005.9 382.23" stroke="#00ff00" stroke-width="1.38" fill="none"/>
<text transform="translate(1009.3,382.23)" y="3.06" font-size="8.5" fill="#00ff00" stroke="#00ff00" stroke-width="0.3" text-anchor="start" textLength="1.89" lengthAdjust="spacingAndGlyphs" font-weight="bold">)</text>
<text transform="translate(1039.5,382.23)" y="3.42" font-size="9.5" fill="#00ff00" stroke="#00ff00" stroke-width="0.3" text-anchor="middle" textLength="3.52" lengthAdjust="spacingAndGlyphs" font-weight="bold">2</text>
<text transform="translate(1071,382.23)" y="3.42" font-size="9.5" fill="#00ff00" stroke="#00ff00" stroke-width="0.3" text-anchor="middle" textLength="7.03" lengthAdjust="spacingAndGlyphs" font-weight="bold">20</text>
<text transform="translate(1102.5,382.23)" y="3.24" font-size="9" fill="#00ff00" stroke="#00ff00" stroke-width="0.3" text-anchor="middle" textLength="8.32" lengthAdjust="spacingAndGlyphs" font-weight="bold">1.5</text>
<text transform="translate(1118.5,382.23)" y="3.24" font-size="9" fill="#00ff00" stroke="#00ff00" stroke-width="0.3" text-anchor="middle" textLength="3.33" lengthAdjust="spacingAndGlyphs" font-weight="bold">3</text>
<text transform="translate(929.5,393.16)" y="3.42" font-size="9.5" fill="#00ff00" stroke="#00ff00" stroke-width="0.3" text-anchor="middle" textLength="7.03" lengthAdjust="spacingAndGlyphs" font-weight="bold">31</text>
<text transform="translate(939,393.16)" y="3.24" font-size="9" fill="#00ff00" stroke="#00ff00" stroke-width="0.3" text-anchor="start" textLength="26.43" lengthAdjust="spacingAndGlyphs" font-weight="bold">GB6170-86</text>
<path d="M991.26 391.41H993.96M991.21 394.91H994.25M990.77 389.99V395.21M992.31 390.3V396.38M993.85 390.31V395.62M990 396.66L992.31 393.16M996.26 390.54H999.44M995.41 392.29H999.2M996.07 394.04H998.28M996 395.79H998.34M995.69 390.67V395.09M997.23 390.17V396.47M998.77 390.94V395.88M994.92 396.66L997.23 393.16" stroke="#00ff00" stroke-width="1.38" fill="none"/>
<text transform="translate(1000.8,393.16)" y="3.06" font-size="8.5" fill="#00ff00" stroke="#00ff00" stroke-width="0.3" text-anchor="start" textLength="10.06" lengthAdjust="spacingAndGlyphs" font-weight="bold">M16</text>
<text transform="translate(1039.5,393.16)" y="3.42" font-size="9.5" fill="#00ff00" stroke="#00ff00" stroke-width="0.3" text-anchor="middle" textLength="3.52" lengthAdjust="spacingAndGlyphs" font-weight="bold">4</text>
<text transform="translate(1068,393.16)" y="3.24" font-size="9" fill="#00ff00" stroke="#00ff00" stroke-width="0.3" text-anchor="end" textLength="3.33" lengthAdjust="spacingAndGlyphs" font-weight="bold">8</text>
<path d="M1069.03 390.91H1072.41M1069.32 392.41H1073.54M1069.15 393.91H1073.44M1070.18 395.41H1073.76M1070.2 390.31V395.11M1072.6 390.46V396.14" stroke="#00ff00" stroke-width="1.38" fill="none"/>
<text transform="translate(1102.5,393.16)" y="3.24" font-size="9" fill="#00ff00" stroke="#00ff00" stroke-width="0.3" text-anchor="middle" textLength="11.65" lengthAdjust="spacingAndGlyphs" font-weight="bold">0.05</text>
<text transform="translate(1118.5,393.16)" y="3.24" font-size="9" fill="#00ff00" stroke="#00ff00" stroke-width="0.3" text-anchor="middle" textLength="11.65" lengthAdjust="spacingAndGlyphs" font-weight="bold">0.23</text>
<text transform="translate(929.5,404.1)" y="3.42" font-size="9.5" fill="#00ff00" stroke="#00ff00" stroke-width="0.3" text-anchor="middle" textLength="7.03" lengthAdjust="spacingAndGlyphs" font-weight="bold">30</text>
<text transform="translate(939,404.1)" y="3.24" font-size="9" fill="#00ff00" stroke="#00ff00" stroke-width="0.3" text-anchor="start" textLength="26.43" lengthAdjust="spacingAndGlyphs" font-weight="bold">GB5782-86</text>
<path d="M990.72 401.47H993.65M990.14 403.22H993.41M990.99 404.97H994.56M990.17 406.72H993.94M990.77 401.47V407.11M992.31 400.81V406.89M993.85 400.84V406.56M995.95 402.35H999.31M996.06 405.85H998.24M995.69 401.28V406.86M997.23 402.07V406.68M998.77 401.29V405.95" stroke="#00ff00" stroke-width="1.38" fill="none"/>
<text transform="translate(1000.8,404.1)" y="3.06" font-size="8.5" fill="#00ff00" stroke="#00ff00" stroke-width="0.3" text-anchor="start" textLength="19.18" lengthAdjust="spacingAndGlyphs" font-weight="bold">M16*60</text>
<text transform="translate(1039.5,404.1)" y="3.42" font-size="9.5" fill="#00ff00" stroke="#00ff00" stroke-width="0.3" text-anchor="middle" textLength="3.52" lengthAdjust="spacingAndGlyphs" font-weight="bold">4</text>
<text transform="translate(1068,404.1)" y="3.24" font-size="9" fill="#00ff00" stroke="#00ff00" stroke-width="0.3" text-anchor="end" textLength="8.32" lengthAdjust="spacingAndGlyphs" font-weight="bold">4.8</text>
<path d="M1069.35 402.1H1073.32M1069.63 404.1H1072.39M1070.16 406.1H1072.49M1069.8 402.32V405.83M1071.4 401.18V406.32M1073 402.53V405.7M1069 407.1L1071.4 404.1M1074.72 402.1H1078.24M1074.3 404.1H1078.38M1074.93 406.1H1078.97M1075.4 401.31V405.64M1077.8 402.26V405.69" stroke="#00ff00" stroke-width="1.38" fill="none"/>
<text transform="translate(1102.5,404.1)" y="3.24" font-size="9" fill="#00ff00" stroke="#00ff00" stroke-width="0.3" text-anchor="middle" textLength="11.65" lengthAdjust="spacingAndGlyphs" font-weight="bold">0.12</text>
<text transform="translate(1118.5,404.1)" y="3.24" font-size="9" fill="#00ff00" stroke="#00ff00" stroke-width="0.3" text-anchor="middle" textLength="11.65" lengthAdjust="spacingAndGlyphs" font-weight="bold">0.48</text>
<text transform="translate(929.5,415.03)" y="3.42" font-size="9.5" fill="#00ff00" stroke="#00ff00" stroke-width="0.3" text-anchor="middle" textLength="7.03" lengthAdjust="spacingAndGlyphs" font-weight="bold">29</text>
<path d="M991.2 413.28H993.76M991.27 416.78H993.76M991.15 412.63V417.12M993.47 411.6V418.36M990 418.53L992.31 415.03M995.25 413.28H999.49M995.08 416.78H999.06M995.69 411.82V418.43M997.23 413.21V416.92M998.77 413.11V418.38M1000.01 413.28H1004.28M1000.25 416.78H1003.9M1000.61 412.04V418.11M1002.15 411.69V417.58M1003.69 413V417.47" stroke="#00ff00" stroke-width="1.38" fill="none"/>
<text transform="translate(1005.7,415.03)" y="3.06" font-size="8.5" fill="#00ff00" stroke="#00ff00" stroke-width="0.3" text-anchor="start" textLength="12.58" lengthAdjust="spacingAndGlyphs" font-weight="bold">DN80</text>
<text transform="translate(1039.5,415.03)" y="3.42" font-size="9.5" fill="#00ff00" stroke="#00ff00" stroke-width="0.3" text-anchor="middle" textLength="3.52" lengthAdjust="spacingAndGlyphs" font-weight="bold">1</text>
<text transform="translate(1071,415.03)" y="3.42" font-size="9.5" fill="#00ff00" stroke="#00ff00" stroke-width="0.3" text-anchor="middle" textLength="18.28" lengthAdjust="spacingAndGlyphs" font-weight="bold">16MnR</text>
<text transform="translate(1102.5,415.03)" y="3.24" font-size="9" fill="#00ff00" stroke="#00ff00" stroke-width="0.3" text-anchor="middle" textLength="8.32" lengthAdjust="spacingAndGlyphs" font-weight="bold">4.6</text>
<text transform="translate(1118.5,415.03)" y="3.24" font-size="9" fill="#00ff00" stroke="#00ff00" stroke-width="0.3" text-anchor="middle" textLength="8.32" lengthAdjust="spacingAndGlyphs" font-weight="bold">4.6</text>
<text transform="translate(929.5,425.97)" y="3.42" font-size="9.5" fill="#00ff00" stroke="#00ff00" stroke-width="0.3" text-anchor="middle" textLength="7.03" lengthAdjust="spacingAndGlyphs" font-weight="bold">28</text>
<path d="M990.28 423.34H993.64M990.64 425.09H993.86M990.85 426.84H993.97M990.43 428.59H994.28M990.77 422.86V428.57M992.31 423.14V428.44M993.85 422.49V428.85M995.69 424.22H998.86M995.31 427.72H998.17M995.69 422.98V428.12M997.23 422.74V429.35M998.77 423.99V428.7M994.92 429.47L997.23 425.97" stroke="#00ff00" stroke-width="1.38" fill="none"/>
<text transform="translate(1000.8,425.97)" y="3.06" font-size="8.5" fill="#00ff00" stroke="#00ff00" stroke-width="0.3" text-anchor="start" textLength="30.51" lengthAdjust="spacingAndGlyphs" font-weight="bold">φ130/φ89*3</text>
<text transform="translate(1039.5,425.97)" y="3.42" font-size="9.5" fill="#00ff00" stroke="#00ff00" stroke-width="0.3" text-anchor="middle" textLength="3.52" lengthAdjust="spacingAndGlyphs" font-weight="bold">1</text>
<path d="M1058.71 423.97H1061.9M1058.95 425.97H1061.58M1059.18 427.97H1061.66M1059 423.59V427.97M1060.6 423.18V428.66M1062.2 423.88V428.55M1063.79 424.47H1067.29M1064.31 427.47H1067.19M1064.2 423.59V428.81M1065.8 423.58V428.14M1067.4 423.14V428.37M1069.82 424.47H1073M1069.49 427.47H1073.24M1069.4 424.25V427.93M1071 423.4V428.44M1072.6 423.5V428.18M1073.81 423.72H1077.53M1075.23 425.22H1078.05M1074.23 426.72H1077.83M1074.96 428.22H1077.97M1074.6 423.53V428.62M1076.2 424.2V428.47M1077.8 424.42V428.06M1073.8 428.97L1076.2 425.97M1080.4 423.97H1082.52M1080.38 425.97H1083.76M1079.37 427.97H1082.51M1080.2 423.42V428.16M1082.6 423.44V428.04M1079 428.97L1081.4 425.97" stroke="#00ff00" stroke-width="1.38" fill="none"/>
<text transform="translate(929.5,436.9)" y="3.42" font-size="9.5" fill="#00ff00" stroke="#00ff00" stroke-width="0.3" text-anchor="middle" textLength="7.03" lengthAdjust="spacingAndGlyphs" font-weight="bold">27</text>
<text transform="translate(939,436.9)" y="3.24" font-size="9" fill="#00ff00" stroke="#00ff00" stroke-width="0.3" text-anchor="start" textLength="26.73" lengthAdjust="spacingAndGlyphs" font-weight="bold">JIS B 2212</text>
<path d="M990.54 434.28H994.12M990.82 436.03H994.13M991.31 437.78H993.68M990.73 439.53H994.48M990.77 434.06V439.7M992.31 434.38V439.4M993.85 434.94V438.71M990 440.4L992.31 436.9M995.88 434.57H998.51M995.05 436.9H999.04M995.43 439.24H999.44M995.69 433.95V440.1M997.23 434.55V439.89M998.77 434V438.77" stroke="#00ff00" stroke-width="1.38" fill="none"/>
<text transform="translate(1000.8,436.9)" y="3.06" font-size="8.5" fill="#00ff00" stroke="#00ff00" stroke-width="0.3" text-anchor="start" textLength="12.58" lengthAdjust="spacingAndGlyphs" font-weight="bold">DN80</text>
<text transform="translate(1039.5,436.9)" y="3.42" font-size="9.5" fill="#00ff00" stroke="#00ff00" stroke-width="0.3" text-anchor="middle" textLength="3.52" lengthAdjust="spacingAndGlyphs" font-weight="bold">5</text>
<text transform="translate(1071,436.9)" y="3.42" font-size="9.5" fill="#00ff00" stroke="#00ff00" stroke-width="0.3" text-anchor="middle" textLength="18.28" lengthAdjust="spacingAndGlyphs" font-weight="bold">16MnR</text>
<text transform="translate(1102.5,436.9)" y="3.24" font-size="9" fill="#00ff00" stroke="#00ff00" stroke-width="0.3" text-anchor="middle" textLength="8.32" lengthAdjust="spacingAndGlyphs" font-weight="bold">3.6</text>
<text transform="translate(1118.5,436.9)" y="3.24" font-size="9" fill="#00ff00" stroke="#00ff00" stroke-width="0.3" text-anchor="middle" textLength="11.65" lengthAdjust="spacingAndGlyphs" font-weight="bold">10.8</text>
<text transform="translate(929.5,447.84)" y="3.42" font-size="9.5" fill="#00ff00" stroke="#00ff00" stroke-width="0.3" text-anchor="middle" textLength="7.03" lengthAdjust="spacingAndGlyphs" font-weight="bold">26</text>
<path d="M990.73 445.5H993.49M990.29 447.84H993.38M990.57 450.17H994.54M991.15 445.33V451.15M993.47 445.33V450.23M994.93 445.21H999.54M995.9 446.96H998.77M996.19 448.71H998.99M995.06 450.46H999.52M995.69 444.39V451.03M997.23 445.68V450.35M998.77 445.86V449.77" stroke="#00ff00" stroke-width="1.38" fill="none"/>
<text transform="translate(1000.8,447.84)" y="3.06" font-size="8.5" fill="#00ff00" stroke="#00ff00" stroke-width="0.3" text-anchor="start" textLength="15.41" lengthAdjust="spacingAndGlyphs" font-weight="bold">φ89*6</text>
<text transform="translate(1039.5,447.84)" y="3.42" font-size="9.5" fill="#00ff00" stroke="#00ff00" stroke-width="0.3" text-anchor="middle" textLength="3.52" lengthAdjust="spacingAndGlyphs" font-weight="bold">2</text>
<text transform="translate(1071,447.84)" y="3.42" font-size="9.5" fill="#00ff00" stroke="#00ff00" stroke-width="0.3" text-anchor="middle" textLength="7.03" lengthAdjust="spacingAndGlyphs" font-weight="bold">20</text>
<text transform="translate(1102.5,447.84)" y="3.24" font-size="9" fill="#00ff00" stroke="#00ff00" stroke-width="0.3" text-anchor="middle" textLength="11.65" lengthAdjust="spacingAndGlyphs" font-weight="bold">2.55</text>
<text transform="translate(1118.5,447.84)" y="3.24" font-size="9" fill="#00ff00" stroke="#00ff00" stroke-width="0.3" text-anchor="middle" textLength="11.65" lengthAdjust="spacingAndGlyphs" font-weight="bold">5.08</text>
<text transform="translate(1147,447.84)" y="3.42" font-size="9.5" fill="#00ff00" stroke="#00ff00" stroke-width="0.3" text-anchor="middle" textLength="17.57" lengthAdjust="spacingAndGlyphs" font-weight="bold">L=155</text>
<text transform="translate(929.5,458.77)" y="3.42" font-size="9.5" fill="#00ff00" stroke="#00ff00" stroke-width="0.3" text-anchor="middle" textLength="7.03" lengthAdjust="spacingAndGlyphs" font-weight="bold">25</text>
<path d="M990.57 457.02H994.45M990.22 460.52H993.57M991.15 455.46V462.1M993.47 455.57V461.36M996.04 456.15H999.45M994.94 457.9H998.47M995.37 459.65H998.55M995.41 461.4H999.31M995.69 455.74V462.1M997.23 456.85V461.25M998.77 455.88V461.49M994.92 462.27L997.23 458.77" stroke="#00ff00" stroke-width="1.38" fill="none"/>
<text transform="translate(1039.5,458.77)" y="3.42" font-size="9.5" fill="#00ff00" stroke="#00ff00" stroke-width="0.3" text-anchor="middle" textLength="3.52" lengthAdjust="spacingAndGlyphs" font-weight="bold">1</text>
<path d="M1064.68 457.27H1067.36M1064.78 460.27H1067.57M1064.6 456.7V461.4M1067 455.84V460.38M1069.89 456.77H1072.23M1069.04 458.77H1072.53M1069.98 460.77H1072.69M1069.8 457.2V461.41M1072.2 456.36V460.69M1068.6 461.77L1071 458.77M1075.06 456.77H1077.9M1074.94 458.77H1078.25M1074.05 460.77H1078.08M1074.6 456.05V460.32M1076.2 456.21V460.93M1077.8 455.94V460.97M1073.8 461.77L1076.2 458.77" stroke="#00ff00" stroke-width="1.38" fill="none"/>
<text transform="translate(1102.5,458.77)" y="3.24" font-size="9" fill="#00ff00" stroke="#00ff00" stroke-width="0.3" text-anchor="middle" textLength="14.98" lengthAdjust="spacingAndGlyphs" font-weight="bold">308.5</text>
<text transform="translate(1118.5,458.77)" y="3.24" font-size="9" fill="#00ff00" stroke="#00ff00" stroke-width="0.3" text-anchor="middle" textLength="14.98" lengthAdjust="spacingAndGlyphs" font-weight="bold">308.5</text>
<text transform="translate(929.5,469.71)" y="3.42" font-size="9.5" fill="#00ff00" stroke="#00ff00" stroke-width="0.3" text-anchor="middle" textLength="7.03" lengthAdjust="spacingAndGlyphs" font-weight="bold">24</text>
<text transform="translate(939,469.71)" y="3.24" font-size="9" fill="#00ff00" stroke="#00ff00" stroke-width="0.3" text-anchor="start" textLength="37.72" lengthAdjust="spacingAndGlyphs" font-weight="bold">JB/T4705-2000</text>
<path d="M991.33 467.37H994.03M991.27 469.71H993.85M990.54 472.04H993.97M991.15 466.81V472.45M993.47 466.7V473.16M995.05 467.96H999.17M996.08 471.46H999.36M996.07 466.98V471.74M998.38 467.62V472.93M994.92 473.21L997.23 469.71" stroke="#00ff00" stroke-width="1.38" fill="none"/>
<text transform="translate(1000.8,469.71)" y="3.06" font-size="8.5" fill="#00ff00" stroke="#00ff00" stroke-width="0.3" text-anchor="start" textLength="29.88" lengthAdjust="spacingAndGlyphs" font-weight="bold">-FW400-6.4</text>
<text transform="translate(1039.5,469.71)" y="3.42" font-size="9.5" fill="#00ff00" stroke="#00ff00" stroke-width="0.3" text-anchor="middle" textLength="3.52" lengthAdjust="spacingAndGlyphs" font-weight="bold">2</text>
<text transform="translate(1071,469.71)" y="3.42" font-size="9.5" fill="#00ff00" stroke="#00ff00" stroke-width="0.3" text-anchor="middle" textLength="21.44" lengthAdjust="spacingAndGlyphs" font-weight="bold">16Mn II</text>
<text transform="translate(1102.5,469.71)" y="3.24" font-size="9" fill="#00ff00" stroke="#00ff00" stroke-width="0.3" text-anchor="middle" textLength="6.66" lengthAdjust="spacingAndGlyphs" font-weight="bold">49</text>
<text transform="translate(1118.5,469.71)" y="3.24" font-size="9" fill="#00ff00" stroke="#00ff00" stroke-width="0.3" text-anchor="middle" textLength="6.66" lengthAdjust="spacingAndGlyphs" font-weight="bold">98</text>
<text transform="translate(929.5,480.64)" y="3.42" font-size="9.5" fill="#00ff00" stroke="#00ff00" stroke-width="0.3" text-anchor="middle" textLength="7.03" lengthAdjust="spacingAndGlyphs" font-weight="bold">23</text>
<text transform="translate(939,480.64)" y="3.24" font-size="9" fill="#00ff00" stroke="#00ff00" stroke-width="0.3" text-anchor="start" textLength="37.72" lengthAdjust="spacingAndGlyphs" font-weight="bold">JB/T4709-2000</text>
<path d="M990.52 478.02H993.29M990.29 479.77H993.3M990.7 481.52H994.3M990.63 483.27H994.44M990.77 478.38V483.69M992.31 478.72V483.11M993.85 477.79V483.71M996.13 478.89H999.37M995.63 482.39H998.79M996.07 477.62V482.79M998.38 477.82V482.99" stroke="#00ff00" stroke-width="1.38" fill="none"/>
<text transform="translate(1000.8,480.64)" y="3.06" font-size="8.5" fill="#00ff00" stroke="#00ff00" stroke-width="0.3" text-anchor="start" textLength="23.27" lengthAdjust="spacingAndGlyphs" font-weight="bold">C400-6.4</text>
<text transform="translate(1039.5,480.64)" y="3.42" font-size="9.5" fill="#00ff00" stroke="#00ff00" stroke-width="0.3" text-anchor="middle" textLength="3.52" lengthAdjust="spacingAndGlyphs" font-weight="bold">1</text>
<path d="M1058.76 478.64H1062.88M1058.45 480.64H1061.77M1058.66 482.64H1062.05M1059.4 477.81V482.8M1061.8 478.18V482.89M1058.2 483.64L1060.6 480.64M1063.53 479.14H1067.78M1064.58 482.14H1067.63M1064.2 478.18V482.38M1065.8 478.34V482.7M1067.4 478.59V482.35M1069.13 479.14H1072.25M1069.59 482.14H1072.11M1069.8 477.68V482.59M1072.2 478.34V482.14M1068.6 483.64L1071 480.64M1074.06 478.39H1078.43M1075.11 479.89H1077.54M1074.83 481.39H1078.54M1073.86 482.89H1078.37M1075 477.94V483.19M1077.4 478.21V483.58M1073.8 483.64L1076.2 480.64M1079.81 478.39H1083.47M1079.72 479.89H1083.05M1080.33 481.39H1082.84M1079.83 482.89H1082.45M1080.2 477.81V482.5M1082.6 478.63V482.29" stroke="#00ff00" stroke-width="1.38" fill="none"/>
<text transform="translate(929.5,491.58)" y="3.42" font-size="9.5" fill="#00ff00" stroke="#00ff00" stroke-width="0.3" text-anchor="middle" textLength="7.03" lengthAdjust="spacingAndGlyphs" font-weight="bold">22</text>
<path d="M991.35 488.95H993.68M990.05 490.7H994.18M991.08 492.45H994.14M991.27 494.2H994.04M991.15 489.38V493.33M993.47 489.15V494.69M995.53 489.24H999.07M995.62 491.58H998.59M996.08 493.91H998.67M995.69 488.97V493.89M997.23 488.44V493.9M998.77 489.56V493.72M994.92 495.08L997.23 491.58M1001.16 489.83H1003.32M1000.61 493.33H1004.22M1001 488.36V493.71M1003.31 488.49V494.62" stroke="#00ff00" stroke-width="1.38" fill="none"/>
<text transform="translate(1039.5,491.58)" y="3.42" font-size="9.5" fill="#00ff00" stroke="#00ff00" stroke-width="0.3" text-anchor="middle" textLength="3.52" lengthAdjust="spacingAndGlyphs" font-weight="bold">1</text>
<path d="M1058.7 490.08H1062.87M1059.12 493.08H1062.8M1059 489.61V493.85M1060.6 489.3V493.52M1062.2 488.59V493.54M1058.2 494.58L1060.6 491.58M1064.41 489.33H1068.01M1064.42 490.83H1067.35M1063.75 492.33H1067.29M1063.57 493.83H1067.59M1064.2 489.99V493.56M1065.8 488.81V493.11M1067.4 489.84V493.97M1063.4 494.58L1065.8 491.58M1068.62 489.33H1072.7M1068.66 490.83H1072.11M1069.04 492.33H1073.24M1069.04 493.83H1072.01M1069.4 488.82V493.91M1071 489.43V494.14M1072.6 489.41V494.51M1068.6 494.58L1071 491.58M1074.88 489.58H1078.12M1074.86 491.58H1078.22M1074.73 493.58H1077.22M1075 489.31V493.4M1077.4 489.06V494.04M1073.8 494.58L1076.2 491.58M1079.94 489.58H1083.69M1080.08 491.58H1083.76M1079.57 493.58H1083.59M1079.8 489.13V493.13M1081.4 489.37V493.23M1083 489.6V494.42" stroke="#00ff00" stroke-width="1.38" fill="none"/>
<text transform="translate(929.5,502.51)" y="3.42" font-size="9.5" fill="#00ff00" stroke="#00ff00" stroke-width="0.3" text-anchor="middle" textLength="7.03" lengthAdjust="spacingAndGlyphs" font-weight="bold">21</text>
<text transform="translate(939,502.51)" y="3.24" font-size="9" fill="#00ff00" stroke="#00ff00" stroke-width="0.3" text-anchor="start" textLength="26.43" lengthAdjust="spacingAndGlyphs" font-weight="bold">GB6170-86</text>
<path d="M990.53 500.18H993.72M990.49 502.51H994.3M990.19 504.85H993.35M990.77 500.48V505.57M992.31 499.11V505.82M993.85 500.42V504.4M996.23 500.18H998.85M995.61 502.51H999.32M995.34 504.85H998.73M996.07 499.15V504.81M998.38 499.3V505.24" stroke="#00ff00" stroke-width="1.38" fill="none"/>
<text transform="translate(1000.8,502.51)" y="3.06" font-size="8.5" fill="#00ff00" stroke="#00ff00" stroke-width="0.3" text-anchor="start" textLength="10.06" lengthAdjust="spacingAndGlyphs" font-weight="bold">M24</text>
<text transform="translate(1039.5,502.51)" y="3.42" font-size="9.5" fill="#00ff00" stroke="#00ff00" stroke-width="0.3" text-anchor="middle" textLength="7.03" lengthAdjust="spacingAndGlyphs" font-weight="bold">48</text>
<text transform="translate(1071,502.51)" y="3.42" font-size="9.5" fill="#00ff00" stroke="#00ff00" stroke-width="0.3" text-anchor="middle" textLength="24.96" lengthAdjust="spacingAndGlyphs" font-weight="bold">35CrMoA</text>
<text transform="translate(1102.5,502.51)" y="3.24" font-size="9" fill="#00ff00" stroke="#00ff00" stroke-width="0.3" text-anchor="middle" textLength="11.65" lengthAdjust="spacingAndGlyphs" font-weight="bold">0.09</text>
<text transform="translate(1118.5,502.51)" y="3.24" font-size="9" fill="#00ff00" stroke="#00ff00" stroke-width="0.3" text-anchor="middle" textLength="11.65" lengthAdjust="spacingAndGlyphs" font-weight="bold">4.32</text>
<text transform="translate(929.5,513.45)" y="3.42" font-size="9.5" fill="#00ff00" stroke="#00ff00" stroke-width="0.3" text-anchor="middle" textLength="7.03" lengthAdjust="spacingAndGlyphs" font-weight="bold">20</text>
<text transform="translate(939,513.45)" y="3.24" font-size="9" fill="#00ff00" stroke="#00ff00" stroke-width="0.3" text-anchor="start" textLength="37.72" lengthAdjust="spacingAndGlyphs" font-weight="bold">JB/T4707-2000</text>
<path d="M991.18 511.7H993.96M990.3 515.2H994.1M991.15 510V515.88M993.47 511.41V516.05M990 516.95L992.31 513.45M995.63 511.7H998.96M995.39 515.2H998.93M996.07 511.11V515.5M998.38 511.53V516.66M994.92 516.95L997.23 513.45M1000.63 511.11H1003.81M1000.59 513.45H1003.74M1000.43 515.78H1003.72M1000.61 511.04V516.68M1002.15 510.65V515.88M1003.69 510.09V515.53M1005.54 511.11H1008.8M1005.27 513.45H1008.47M1004.95 515.78H1008.18M1005.53 510.88V515.84M1007.07 511.43V516.56M1008.61 511.24V515.74M1004.76 516.95L1007.07 513.45" stroke="#00ff00" stroke-width="1.38" fill="none"/>
<text transform="translate(1010.6,513.45)" y="3.06" font-size="8.5" fill="#00ff00" stroke="#00ff00" stroke-width="0.3" text-anchor="start" textLength="22.33" lengthAdjust="spacingAndGlyphs" font-weight="bold">M24*245</text>
<text transform="translate(1039.5,513.45)" y="3.42" font-size="9.5" fill="#00ff00" stroke="#00ff00" stroke-width="0.3" text-anchor="middle" textLength="7.03" lengthAdjust="spacingAndGlyphs" font-weight="bold">22</text>
<text transform="translate(1071,513.45)" y="3.42" font-size="9.5" fill="#00ff00" stroke="#00ff00" stroke-width="0.3" text-anchor="middle" textLength="24.96" lengthAdjust="spacingAndGlyphs" font-weight="bold">35CrMoA</text>
<text transform="translate(1102.5,513.45)" y="3.24" font-size="9" fill="#00ff00" stroke="#00ff00" stroke-width="0.3" text-anchor="middle" textLength="11.65" lengthAdjust="spacingAndGlyphs" font-weight="bold">0.65</text>
<text transform="translate(1118.5,513.45)" y="3.24" font-size="9" fill="#00ff00" stroke="#00ff00" stroke-width="0.3" text-anchor="middle" textLength="14.98" lengthAdjust="spacingAndGlyphs" font-weight="bold">11.38</text>
<text transform="translate(929.5,524.38)" y="3.42" font-size="9.5" fill="#00ff00" stroke="#00ff00" stroke-width="0.3" text-anchor="middle" textLength="7.03" lengthAdjust="spacingAndGlyphs" font-weight="bold">19</text>
<path d="M990.77 521.76H993.31M990.5 523.51H994.29M990.61 525.26H994.26M990.31 527.01H993.28M990.77 521.24V526.57M992.31 521.27V526.42M993.85 522.02V527.55M995.23 521.76H998.9M995.67 523.51H998.57M995.94 525.26H998.28M995.71 527.01H998.36M995.69 522.07V526.48M997.23 521.12V527M998.77 521.77V526.42" stroke="#00ff00" stroke-width="1.38" fill="none"/>
<text transform="translate(1039.5,524.38)" y="3.42" font-size="9.5" fill="#00ff00" stroke="#00ff00" stroke-width="0.3" text-anchor="middle" textLength="3.52" lengthAdjust="spacingAndGlyphs" font-weight="bold">1</text>
<path d="M1064.06 522.13H1067.21M1064.18 523.63H1066.81M1063.68 525.13H1067.52M1063.53 526.63H1067.66M1064.6 522.31V526.78M1067 521.45V527.32M1069.03 522.88H1072.38M1069.21 525.88H1072.12M1069.4 522.31V526.07M1071 522.23V526.01M1072.6 522.69V527.13M1074.99 522.38H1078.42M1074.34 524.38H1077.54M1075.17 526.38H1077.56M1075 521.45V526.48M1077.4 521.53V526.56" stroke="#00ff00" stroke-width="1.38" fill="none"/>
<text transform="translate(1102.5,524.38)" y="3.24" font-size="9" fill="#00ff00" stroke="#00ff00" stroke-width="0.3" text-anchor="middle" textLength="9.99" lengthAdjust="spacingAndGlyphs" font-weight="bold">125</text>
<text transform="translate(1118.5,524.38)" y="3.24" font-size="9" fill="#00ff00" stroke="#00ff00" stroke-width="0.3" text-anchor="middle" textLength="9.99" lengthAdjust="spacingAndGlyphs" font-weight="bold">125</text>
<text transform="translate(929.5,535.32)" y="3.42" font-size="9.5" fill="#00ff00" stroke="#00ff00" stroke-width="0.3" text-anchor="middle" textLength="7.03" lengthAdjust="spacingAndGlyphs" font-weight="bold">18</text>
<path d="M991.28 533.57H993.68M990.35 537.07H994.35M991.15 532.6V537.35M993.47 532.83V538.62M990 538.82L992.31 535.32M996.03 533.57H999.28M995.69 537.07H999.14M996.07 533.02V538.15M998.38 532.07V537.29" stroke="#00ff00" stroke-width="1.38" fill="none"/>
<text transform="translate(1039.5,535.32)" y="3.42" font-size="9.5" fill="#00ff00" stroke="#00ff00" stroke-width="0.3" text-anchor="middle" textLength="3.52" lengthAdjust="spacingAndGlyphs" font-weight="bold">1</text>
<path d="M1064.77 533.07H1068.18M1063.89 534.57H1067.98M1064.12 536.07H1066.94M1064.55 537.57H1068.15M1064.2 532.59V537.09M1065.8 533.34V537.73M1067.4 533.03V538.08M1069.86 533.32H1072.52M1068.71 535.32H1072.93M1068.91 537.32H1072.11M1069.8 533.2V538.25M1072.2 532.57V537.78M1068.6 538.32L1071 535.32M1074.36 533.07H1078.09M1073.81 534.57H1077.77M1074.28 536.07H1078.57M1074.46 537.57H1077.18M1074.6 532.39V538.1M1076.2 533.32V537.91M1077.8 532.73V537.57M1073.8 538.32L1076.2 535.32" stroke="#00ff00" stroke-width="1.38" fill="none"/>
<text transform="translate(1102.5,535.32)" y="3.24" font-size="9" fill="#00ff00" stroke="#00ff00" stroke-width="0.3" text-anchor="middle" textLength="8.32" lengthAdjust="spacingAndGlyphs" font-weight="bold">0.6</text>
<text transform="translate(1118.5,535.32)" y="3.24" font-size="9" fill="#00ff00" stroke="#00ff00" stroke-width="0.3" text-anchor="middle" textLength="8.32" lengthAdjust="spacingAndGlyphs" font-weight="bold">0.6</text>
<text transform="translate(929.5,546.25)" y="3.42" font-size="9.5" fill="#00ff00" stroke="#00ff00" stroke-width="0.3" text-anchor="middle" textLength="7.03" lengthAdjust="spacingAndGlyphs" font-weight="bold">17</text>
<path d="M991.38 543.63H994.57M990.78 545.38H993.55M991.21 547.13H993.55M990.88 548.88H993.74M991.15 543.39V549.26M993.47 544.14V548.23M995.34 543.63H998.48M995.94 545.38H998.83M995.8 547.13H999.05M995.68 548.88H998.98M996.07 542.86V549.16M998.38 543.32V548.02M994.92 549.75L997.23 546.25" stroke="#00ff00" stroke-width="1.38" fill="none"/>
<text transform="translate(1000.8,546.25)" y="3.06" font-size="8.5" fill="#00ff00" stroke="#00ff00" stroke-width="0.3" text-anchor="start" textLength="12.58" lengthAdjust="spacingAndGlyphs" font-weight="bold">δ=12</text>
<text transform="translate(1039.5,546.25)" y="3.42" font-size="9.5" fill="#00ff00" stroke="#00ff00" stroke-width="0.3" text-anchor="middle" textLength="3.52" lengthAdjust="spacingAndGlyphs" font-weight="bold">1</text>
<text transform="translate(1071,546.25)" y="3.42" font-size="9.5" fill="#00ff00" stroke="#00ff00" stroke-width="0.3" text-anchor="middle" textLength="18.28" lengthAdjust="spacingAndGlyphs" font-weight="bold">16MnR</text>
<text transform="translate(1102.5,546.25)" y="3.24" font-size="9" fill="#00ff00" stroke="#00ff00" stroke-width="0.3" text-anchor="middle" textLength="9.99" lengthAdjust="spacingAndGlyphs" font-weight="bold">377</text>
<text transform="translate(1118.5,546.25)" y="3.24" font-size="9" fill="#00ff00" stroke="#00ff00" stroke-width="0.3" text-anchor="middle" textLength="9.99" lengthAdjust="spacingAndGlyphs" font-weight="bold">377</text>
<text transform="translate(929.5,557.19)" y="3.42" font-size="9.5" fill="#00ff00" stroke="#00ff00" stroke-width="0.3" text-anchor="middle" textLength="7.03" lengthAdjust="spacingAndGlyphs" font-weight="bold">16</text>
<path d="M991.12 554.85H993.24M990.21 557.19H994.34M991.23 559.52H993.69M991.15 554.4V559.99M993.47 555.04V559.06M995.92 555.44H999.19M995.71 558.94H998.63M995.69 555.38V560.56M997.23 554.02V559.07M998.77 554.71V560.16M994.92 560.69L997.23 557.19" stroke="#00ff00" stroke-width="1.38" fill="none"/>
<text transform="translate(1000.8,557.19)" y="3.06" font-size="8.5" fill="#00ff00" stroke="#00ff00" stroke-width="0.3" text-anchor="start" textLength="33.65" lengthAdjust="spacingAndGlyphs" font-weight="bold">DN1900 δ=12</text>
<text transform="translate(1039.5,557.19)" y="3.42" font-size="9.5" fill="#00ff00" stroke="#00ff00" stroke-width="0.3" text-anchor="middle" textLength="3.52" lengthAdjust="spacingAndGlyphs" font-weight="bold">1</text>
<text transform="translate(1071,557.19)" y="3.42" font-size="9.5" fill="#00ff00" stroke="#00ff00" stroke-width="0.3" text-anchor="middle" textLength="18.28" lengthAdjust="spacingAndGlyphs" font-weight="bold">16MnR</text>
<text transform="translate(1102.5,557.19)" y="3.24" font-size="9" fill="#00ff00" stroke="#00ff00" stroke-width="0.3" text-anchor="middle" textLength="13.32" lengthAdjust="spacingAndGlyphs" font-weight="bold">1604</text>
<text transform="translate(1118.5,557.19)" y="3.24" font-size="9" fill="#00ff00" stroke="#00ff00" stroke-width="0.3" text-anchor="middle" textLength="13.32" lengthAdjust="spacingAndGlyphs" font-weight="bold">1604</text>
<text transform="translate(1147,557.19)" y="3.42" font-size="9.5" fill="#00ff00" stroke="#00ff00" stroke-width="0.3" text-anchor="middle" textLength="21.09" lengthAdjust="spacingAndGlyphs" font-weight="bold">L=2610</text>
<text transform="translate(929.5,568.12)" y="3.42" font-size="9.5" fill="#00ff00" stroke="#00ff00" stroke-width="0.3" text-anchor="middle" textLength="7.03" lengthAdjust="spacingAndGlyphs" font-weight="bold">15</text>
<text transform="translate(939,568.12)" y="3.24" font-size="9" fill="#00ff00" stroke="#00ff00" stroke-width="0.3" text-anchor="start" textLength="29.4" lengthAdjust="spacingAndGlyphs" font-weight="bold">HG21522-95</text>
<path d="M991.35 565.79H993.66M991 568.12H993.34M991.16 570.46H994.18M990.77 564.93V570.05M992.31 565.58V570.3M993.85 565.72V571.21M990 571.62L992.31 568.12M995.54 566.37H998.3M995.31 569.87H998.84M995.69 564.8V571.2M997.23 564.72V571.4M998.77 564.71V571.49" stroke="#00ff00" stroke-width="1.38" fill="none"/>
<text transform="translate(1000.8,568.12)" y="3.06" font-size="8.5" fill="#00ff00" stroke="#00ff00" stroke-width="0.3" text-anchor="start" textLength="39" lengthAdjust="spacingAndGlyphs" font-weight="bold">0739-SI900-05</text>
<text transform="translate(1039.5,568.12)" y="3.42" font-size="9.5" fill="#00ff00" stroke="#00ff00" stroke-width="0.3" text-anchor="middle" textLength="3.52" lengthAdjust="spacingAndGlyphs" font-weight="bold">1</text>
<path d="M1064.44 565.87H1068.19M1063.79 567.37H1067.27M1063.42 568.87H1067.74M1063.44 570.37H1067.74M1064.2 566.42V571.08M1065.8 565.85V570.21M1067.4 566.32V570.86M1069.5 566.62H1072.92M1069.31 569.62H1072.54M1069.8 565.51V570.43M1072.2 565.14V569.73M1074.4 566.12H1077.58M1075 568.12H1078.37M1073.83 570.12H1078.3M1075 565.92V569.86M1077.4 565.66V570.58M1073.8 571.12L1076.2 568.12" stroke="#00ff00" stroke-width="1.38" fill="none"/>
<text transform="translate(1102.5,568.12)" y="3.24" font-size="9" fill="#00ff00" stroke="#00ff00" stroke-width="0.3" text-anchor="middle" textLength="9.99" lengthAdjust="spacingAndGlyphs" font-weight="bold">158</text>
<text transform="translate(1118.5,568.12)" y="3.24" font-size="9" fill="#00ff00" stroke="#00ff00" stroke-width="0.3" text-anchor="middle" textLength="9.99" lengthAdjust="spacingAndGlyphs" font-weight="bold">158</text>
<text transform="translate(929.5,579.06)" y="3.42" font-size="9.5" fill="#00ff00" stroke="#00ff00" stroke-width="0.3" text-anchor="middle" textLength="7.03" lengthAdjust="spacingAndGlyphs" font-weight="bold">14</text>
<text transform="translate(939,579.06)" y="3.24" font-size="9" fill="#00ff00" stroke="#00ff00" stroke-width="0.3" text-anchor="start" textLength="26.73" lengthAdjust="spacingAndGlyphs" font-weight="bold">JIS B 2212</text>
<path d="M990.91 576.43H993.79M990.46 578.18H993.59M990.36 579.93H993.63M991.06 581.68H993.54M991.15 576.1V581.21M993.47 577.27V581.76M990 582.56L992.31 579.06M995.1 576.43H999.53M995.58 578.18H998.63M995.99 579.93H999.04M996.29 581.68H999.22M995.69 576.88V582.4M997.23 575.61V582.32M998.77 575.66V581.68" stroke="#00ff00" stroke-width="1.38" fill="none"/>
<text transform="translate(1000.8,579.06)" y="3.06" font-size="8.5" fill="#00ff00" stroke="#00ff00" stroke-width="0.3" text-anchor="start" textLength="15.72" lengthAdjust="spacingAndGlyphs" font-weight="bold">DN100</text>
<text transform="translate(1039.5,579.06)" y="3.42" font-size="9.5" fill="#00ff00" stroke="#00ff00" stroke-width="0.3" text-anchor="middle" textLength="3.52" lengthAdjust="spacingAndGlyphs" font-weight="bold">2</text>
<text transform="translate(1071,579.06)" y="3.42" font-size="9.5" fill="#00ff00" stroke="#00ff00" stroke-width="0.3" text-anchor="middle" textLength="18.28" lengthAdjust="spacingAndGlyphs" font-weight="bold">16MnR</text>
<text transform="translate(1102.5,579.06)" y="3.24" font-size="9" fill="#00ff00" stroke="#00ff00" stroke-width="0.3" text-anchor="middle" textLength="11.65" lengthAdjust="spacingAndGlyphs" font-weight="bold">4.57</text>
<text transform="translate(1118.5,579.06)" y="3.24" font-size="9" fill="#00ff00" stroke="#00ff00" stroke-width="0.3" text-anchor="middle" textLength="11.65" lengthAdjust="spacingAndGlyphs" font-weight="bold">9.14</text>
<text transform="translate(929.5,589.99)" y="3.42" font-size="9.5" fill="#00ff00" stroke="#00ff00" stroke-width="0.3" text-anchor="middle" textLength="7.03" lengthAdjust="spacingAndGlyphs" font-weight="bold">13</text>
<path d="M991.3 588.24H994.11M990.21 591.74H994.37M990.77 587.78V591.88M992.31 586.78V593.44M993.85 587.85V593.07M995.8 587.66H999.06M996.03 589.99H998.9M995.37 592.33H998.29M996.07 586.68V592.21M998.38 586.61V592.36M994.92 593.49L997.23 589.99" stroke="#00ff00" stroke-width="1.38" fill="none"/>
<text transform="translate(1000.8,589.99)" y="3.06" font-size="8.5" fill="#00ff00" stroke="#00ff00" stroke-width="0.3" text-anchor="start" textLength="18.56" lengthAdjust="spacingAndGlyphs" font-weight="bold">φ108*6</text>
<text transform="translate(1039.5,589.99)" y="3.42" font-size="9.5" fill="#00ff00" stroke="#00ff00" stroke-width="0.3" text-anchor="middle" textLength="3.52" lengthAdjust="spacingAndGlyphs" font-weight="bold">1</text>
<text transform="translate(1071,589.99)" y="3.42" font-size="9.5" fill="#00ff00" stroke="#00ff00" stroke-width="0.3" text-anchor="middle" textLength="7.03" lengthAdjust="spacingAndGlyphs" font-weight="bold">20</text>
<text transform="translate(1102.5,589.99)" y="3.24" font-size="9" fill="#00ff00" stroke="#00ff00" stroke-width="0.3" text-anchor="middle" textLength="8.32" lengthAdjust="spacingAndGlyphs" font-weight="bold">5.1</text>
<text transform="translate(1118.5,589.99)" y="3.24" font-size="9" fill="#00ff00" stroke="#00ff00" stroke-width="0.3" text-anchor="middle" textLength="8.32" lengthAdjust="spacingAndGlyphs" font-weight="bold">5.1</text>
<text transform="translate(1147,589.99)" y="3.42" font-size="9.5" fill="#00ff00" stroke="#00ff00" stroke-width="0.3" text-anchor="middle" textLength="17.57" lengthAdjust="spacingAndGlyphs" font-weight="bold">L=155</text>
<text transform="translate(929.5,600.93)" y="3.42" font-size="9.5" fill="#00ff00" stroke="#00ff00" stroke-width="0.3" text-anchor="middle" textLength="7.03" lengthAdjust="spacingAndGlyphs" font-weight="bold">12</text>
<path d="M990.32 598.59H994.1M991.26 600.93H994.1M990.91 603.26H993.43M991.15 597.48V604.39M993.47 598.67V604M990 604.43L992.31 600.93M995.81 598.59H999.13M996.3 600.93H999.24M995.71 603.26H999.32M995.69 598.94V602.91M997.23 597.9V603.11M998.77 598.87V603.93M994.92 604.43L997.23 600.93" stroke="#00ff00" stroke-width="1.38" fill="none"/>
<text transform="translate(1000.8,600.93)" y="3.06" font-size="8.5" fill="#00ff00" stroke="#00ff00" stroke-width="0.3" text-anchor="start" textLength="18.56" lengthAdjust="spacingAndGlyphs" font-weight="bold">φ159*8</text>
<text transform="translate(1039.5,600.93)" y="3.42" font-size="9.5" fill="#00ff00" stroke="#00ff00" stroke-width="0.3" text-anchor="middle" textLength="3.52" lengthAdjust="spacingAndGlyphs" font-weight="bold">1</text>
<text transform="translate(1071,600.93)" y="3.42" font-size="9.5" fill="#00ff00" stroke="#00ff00" stroke-width="0.3" text-anchor="middle" textLength="7.03" lengthAdjust="spacingAndGlyphs" font-weight="bold">20</text>
<text transform="translate(1102.5,600.93)" y="3.24" font-size="9" fill="#00ff00" stroke="#00ff00" stroke-width="0.3" text-anchor="middle" textLength="11.65" lengthAdjust="spacingAndGlyphs" font-weight="bold">5.55</text>
<text transform="translate(1118.5,600.93)" y="3.24" font-size="9" fill="#00ff00" stroke="#00ff00" stroke-width="0.3" text-anchor="middle" textLength="11.65" lengthAdjust="spacingAndGlyphs" font-weight="bold">5.55</text>
<text transform="translate(1147,600.93)" y="3.42" font-size="9.5" fill="#00ff00" stroke="#00ff00" stroke-width="0.3" text-anchor="middle" textLength="17.57" lengthAdjust="spacingAndGlyphs" font-weight="bold">L=200</text>
<text transform="translate(929.5,611.86)" y="3.42" font-size="9.5" fill="#00ff00" stroke="#00ff00" stroke-width="0.3" text-anchor="middle" textLength="7.03" lengthAdjust="spacingAndGlyphs" font-weight="bold">11</text>
<text transform="translate(939,611.86)" y="3.24" font-size="9" fill="#00ff00" stroke="#00ff00" stroke-width="0.3" text-anchor="start" textLength="26.43" lengthAdjust="spacingAndGlyphs" font-weight="bold">GB6170-86</text>
<path d="M990.22 609.53H993.67M990.83 611.86H993.99M990.8 614.2H993.4M991.15 608.73V613.82M993.47 608.99V614M996.12 610.11H998.16M995.33 613.61H999.51M995.69 608.56V613.66M997.23 608.38V613.77M998.77 608.63V614.07M994.92 615.36L997.23 611.86" stroke="#00ff00" stroke-width="1.38" fill="none"/>
<text transform="translate(1000.8,611.86)" y="3.06" font-size="8.5" fill="#00ff00" stroke="#00ff00" stroke-width="0.3" text-anchor="start" textLength="10.06" lengthAdjust="spacingAndGlyphs" font-weight="bold">M20</text>
<text transform="translate(1039.5,611.86)" y="3.42" font-size="9.5" fill="#00ff00" stroke="#00ff00" stroke-width="0.3" text-anchor="middle" textLength="3.52" lengthAdjust="spacingAndGlyphs" font-weight="bold">8</text>
<text transform="translate(1068,611.86)" y="3.24" font-size="9" fill="#00ff00" stroke="#00ff00" stroke-width="0.3" text-anchor="end" textLength="3.33" lengthAdjust="spacingAndGlyphs" font-weight="bold">8</text>
<path d="M1069.98 610.36H1073.67M1069.49 613.36H1072.48M1069.8 609.94V613.54M1071.4 610.33V614.81M1073 609.21V613.67" stroke="#00ff00" stroke-width="1.38" fill="none"/>
<text transform="translate(1102.5,611.86)" y="3.24" font-size="9" fill="#00ff00" stroke="#00ff00" stroke-width="0.3" text-anchor="middle" textLength="11.65" lengthAdjust="spacingAndGlyphs" font-weight="bold">0.05</text>
<text transform="translate(1118.5,611.86)" y="3.24" font-size="9" fill="#00ff00" stroke="#00ff00" stroke-width="0.3" text-anchor="middle" textLength="11.65" lengthAdjust="spacingAndGlyphs" font-weight="bold">0.42</text>
<text transform="translate(929.5,622.8)" y="3.42" font-size="9.5" fill="#00ff00" stroke="#00ff00" stroke-width="0.3" text-anchor="middle" textLength="7.03" lengthAdjust="spacingAndGlyphs" font-weight="bold">10</text>
<text transform="translate(939,622.8)" y="3.24" font-size="9" fill="#00ff00" stroke="#00ff00" stroke-width="0.3" text-anchor="start" textLength="26.43" lengthAdjust="spacingAndGlyphs" font-weight="bold">GB5782-86</text>
<path d="M990.7 621.05H994.3M990.6 624.55H994.47M991.15 619.33V624.56M993.47 619.85V624.76M990 626.3L992.31 622.8M995.65 620.46H999.54M995.23 622.8H998.79M995.8 625.13H998.78M996.07 621.04V625.37M998.38 620.77V624.62M994.92 626.3L997.23 622.8" stroke="#00ff00" stroke-width="1.38" fill="none"/>
<text transform="translate(1000.8,622.8)" y="3.06" font-size="8.5" fill="#00ff00" stroke="#00ff00" stroke-width="0.3" text-anchor="start" textLength="19.18" lengthAdjust="spacingAndGlyphs" font-weight="bold">M20*70</text>
<text transform="translate(1039.5,622.8)" y="3.42" font-size="9.5" fill="#00ff00" stroke="#00ff00" stroke-width="0.3" text-anchor="middle" textLength="3.52" lengthAdjust="spacingAndGlyphs" font-weight="bold">8</text>
<text transform="translate(1068,622.8)" y="3.24" font-size="9" fill="#00ff00" stroke="#00ff00" stroke-width="0.3" text-anchor="end" textLength="8.32" lengthAdjust="spacingAndGlyphs" font-weight="bold">4.8</text>
<path d="M1070.05 621.3H1073.41M1069.26 624.3H1073.42M1070.2 619.9V625.73M1072.6 620.56V625.19M1074.22 620.8H1078.01M1075.14 622.8H1078.22M1074.99 624.8H1078.01M1075 621.27V624.49M1076.6 620.87V625.2M1078.2 620.27V625.17" stroke="#00ff00" stroke-width="1.38" fill="none"/>
<text transform="translate(1102.5,622.8)" y="3.24" font-size="9" fill="#00ff00" stroke="#00ff00" stroke-width="0.3" text-anchor="middle" textLength="11.65" lengthAdjust="spacingAndGlyphs" font-weight="bold">0.23</text>
<text transform="translate(1118.5,622.8)" y="3.24" font-size="9" fill="#00ff00" stroke="#00ff00" stroke-width="0.3" text-anchor="middle" textLength="11.65" lengthAdjust="spacingAndGlyphs" font-weight="bold">1.84</text>
<text transform="translate(929.5,633.73)" y="3.42" font-size="9.5" fill="#00ff00" stroke="#00ff00" stroke-width="0.3" text-anchor="middle" textLength="3.52" lengthAdjust="spacingAndGlyphs" font-weight="bold">9</text>
<text transform="translate(939,633.73)" y="3.24" font-size="9" fill="#00ff00" stroke="#00ff00" stroke-width="0.3" text-anchor="start" textLength="26.73" lengthAdjust="spacingAndGlyphs" font-weight="bold">JIS B 2212</text>
<path d="M991.22 631.4H993.51M991.24 633.73H993.74M990.33 636.07H993.93M990.77 631.96V636.02M992.31 631.51V635.5M993.85 631.68V636.07M990 637.23L992.31 633.73M996.18 631.11H999.47M995.88 632.86H999.09M995.82 634.61H998.78M995.36 636.36H998.19M996.07 630.23V635.93M998.38 631.73V636.34" stroke="#00ff00" stroke-width="1.38" fill="none"/>
<text transform="translate(1000.8,633.73)" y="3.06" font-size="8.5" fill="#00ff00" stroke="#00ff00" stroke-width="0.3" text-anchor="start" textLength="15.72" lengthAdjust="spacingAndGlyphs" font-weight="bold">DN150</text>
<text transform="translate(1039.5,633.73)" y="3.42" font-size="9.5" fill="#00ff00" stroke="#00ff00" stroke-width="0.3" text-anchor="middle" textLength="3.52" lengthAdjust="spacingAndGlyphs" font-weight="bold">1</text>
<text transform="translate(1071,633.73)" y="3.42" font-size="9.5" fill="#00ff00" stroke="#00ff00" stroke-width="0.3" text-anchor="middle" textLength="18.28" lengthAdjust="spacingAndGlyphs" font-weight="bold">16MnR</text>
<text transform="translate(1102.5,633.73)" y="3.24" font-size="9" fill="#00ff00" stroke="#00ff00" stroke-width="0.3" text-anchor="middle" textLength="8.32" lengthAdjust="spacingAndGlyphs" font-weight="bold">8.2</text>
<text transform="translate(1118.5,633.73)" y="3.24" font-size="9" fill="#00ff00" stroke="#00ff00" stroke-width="0.3" text-anchor="middle" textLength="8.32" lengthAdjust="spacingAndGlyphs" font-weight="bold">8.2</text>
<text transform="translate(929.5,644.67)" y="3.42" font-size="9.5" fill="#00ff00" stroke="#00ff00" stroke-width="0.3" text-anchor="middle" textLength="3.52" lengthAdjust="spacingAndGlyphs" font-weight="bold">8</text>
<path d="M991.14 642.33H993.52M991.21 644.67H994.13M990.09 647H993.27M991.15 641.63V647.01M993.47 642.61V648.04M996.2 642.04H998.48M995.28 643.79H998.37M996.11 645.54H999.06M995.74 647.29H998.75M996.07 642.92V648.05M998.38 642.49V647.53M994.92 648.17L997.23 644.67" stroke="#00ff00" stroke-width="1.38" fill="none"/>
<text transform="translate(1000.8,644.67)" y="3.06" font-size="8.5" fill="#00ff00" stroke="#00ff00" stroke-width="0.3" text-anchor="start" textLength="33.65" lengthAdjust="spacingAndGlyphs" font-weight="bold">φ215/φ168*3</text>
<text transform="translate(1039.5,644.67)" y="3.42" font-size="9.5" fill="#00ff00" stroke="#00ff00" stroke-width="0.3" text-anchor="middle" textLength="3.52" lengthAdjust="spacingAndGlyphs" font-weight="bold">1</text>
<path d="M1058.54 643.17H1062.75M1059.38 646.17H1062.34M1059 642.63V646.43M1060.6 643.01V646.37M1062.2 641.73V647.1M1063.99 642.67H1067.19M1063.94 644.67H1067.67M1064.35 646.67H1067.45M1064.6 642.12V646.67M1067 642.08V647.23M1063.4 647.67L1065.8 644.67M1069.51 643.17H1072.35M1068.85 646.17H1072.66M1069.4 641.68V647.47M1071 642.4V646.68M1072.6 642.6V646.88M1074.6 642.67H1078.6M1074.17 644.67H1077.75M1074.24 646.67H1077.82M1075 643.04V647.28M1077.4 642.07V647.01M1079.29 642.67H1083.19M1080.14 644.67H1082.91M1079.54 646.67H1083.74M1080.2 642.33V647.12M1082.6 642.74V647.22M1079 647.67L1081.4 644.67" stroke="#00ff00" stroke-width="1.38" fill="none"/>
<text transform="translate(929.5,655.6)" y="3.42" font-size="9.5" fill="#00ff00" stroke="#00ff00" stroke-width="0.3" text-anchor="middle" textLength="3.52" lengthAdjust="spacingAndGlyphs" font-weight="bold">7</text>
<text transform="translate(939,655.6)" y="3.24" font-size="9" fill="#00ff00" stroke="#00ff00" stroke-width="0.3" text-anchor="start" textLength="26.73" lengthAdjust="spacingAndGlyphs" font-weight="bold">JIS B 2212</text>
<path d="M990.49 652.98H994.09M990.8 654.73H993.34M990.27 656.48H993.27M990.99 658.23H994.1M990.77 653.27V658.53M992.31 652.23V657.78M993.85 652.77V658.18M990 659.1L992.31 655.6M995.07 652.98H998.76M996.22 654.73H998.57M995.52 656.48H998.16M995.16 658.23H999.45M996.07 652.8V658.87M998.38 653.42V659.09M994.92 659.1L997.23 655.6" stroke="#00ff00" stroke-width="1.38" fill="none"/>
<text transform="translate(1000.8,655.6)" y="3.06" font-size="8.5" fill="#00ff00" stroke="#00ff00" stroke-width="0.3" text-anchor="start" textLength="15.72" lengthAdjust="spacingAndGlyphs" font-weight="bold">DN150</text>
<text transform="translate(1039.5,655.6)" y="3.42" font-size="9.5" fill="#00ff00" stroke="#00ff00" stroke-width="0.3" text-anchor="middle" textLength="3.52" lengthAdjust="spacingAndGlyphs" font-weight="bold">2</text>
<text transform="translate(1071,655.6)" y="3.42" font-size="9.5" fill="#00ff00" stroke="#00ff00" stroke-width="0.3" text-anchor="middle" textLength="18.28" lengthAdjust="spacingAndGlyphs" font-weight="bold">16MnR</text>
<text transform="translate(1102.5,655.6)" y="3.24" font-size="9" fill="#00ff00" stroke="#00ff00" stroke-width="0.3" text-anchor="middle" textLength="11.65" lengthAdjust="spacingAndGlyphs" font-weight="bold">7.61</text>
<text transform="translate(1118.5,655.6)" y="3.24" font-size="9" fill="#00ff00" stroke="#00ff00" stroke-width="0.3" text-anchor="middle" textLength="14.98" lengthAdjust="spacingAndGlyphs" font-weight="bold">15.22</text>
<text transform="translate(929.5,666.54)" y="3.42" font-size="9.5" fill="#00ff00" stroke="#00ff00" stroke-width="0.3" text-anchor="middle" textLength="3.52" lengthAdjust="spacingAndGlyphs" font-weight="bold">6</text>
<path d="M990.75 664.79H993.34M990.41 668.29H994.16M990.77 663.72V669.23M992.31 663.2V668.55M993.85 664.04V670.01M990 670.04L992.31 666.54M995 664.79H998.6M995.91 668.29H998.87M995.69 663.13V668.83M997.23 663.77V669.02M998.77 664.78V668.61" stroke="#00ff00" stroke-width="1.38" fill="none"/>
<text transform="translate(1000.8,666.54)" y="3.06" font-size="8.5" fill="#00ff00" stroke="#00ff00" stroke-width="0.3" text-anchor="start" textLength="18.56" lengthAdjust="spacingAndGlyphs" font-weight="bold">φ159*8</text>
<text transform="translate(1039.5,666.54)" y="3.42" font-size="9.5" fill="#00ff00" stroke="#00ff00" stroke-width="0.3" text-anchor="middle" textLength="3.52" lengthAdjust="spacingAndGlyphs" font-weight="bold">1</text>
<text transform="translate(1071,666.54)" y="3.42" font-size="9.5" fill="#00ff00" stroke="#00ff00" stroke-width="0.3" text-anchor="middle" textLength="7.03" lengthAdjust="spacingAndGlyphs" font-weight="bold">20</text>
<text transform="translate(1102.5,666.54)" y="3.24" font-size="9" fill="#00ff00" stroke="#00ff00" stroke-width="0.3" text-anchor="middle" textLength="8.32" lengthAdjust="spacingAndGlyphs" font-weight="bold">4.6</text>
<text transform="translate(1118.5,666.54)" y="3.24" font-size="9" fill="#00ff00" stroke="#00ff00" stroke-width="0.3" text-anchor="middle" textLength="8.32" lengthAdjust="spacingAndGlyphs" font-weight="bold">4.6</text>
<text transform="translate(1147,666.54)" y="3.42" font-size="9.5" fill="#00ff00" stroke="#00ff00" stroke-width="0.3" text-anchor="middle" textLength="17.57" lengthAdjust="spacingAndGlyphs" font-weight="bold">L=190</text>
<text transform="translate(929.5,677.47)" y="3.42" font-size="9.5" fill="#00ff00" stroke="#00ff00" stroke-width="0.3" text-anchor="middle" textLength="3.52" lengthAdjust="spacingAndGlyphs" font-weight="bold">5</text>
<text transform="translate(939,677.47)" y="3.24" font-size="9" fill="#00ff00" stroke="#00ff00" stroke-width="0.3" text-anchor="start" textLength="37.72" lengthAdjust="spacingAndGlyphs" font-weight="bold">JB/T4746-2002</text>
<path d="M990.46 675.72H993.9M990.01 679.22H993.25M990.77 674.45V680.51M992.31 674.52V680.53M993.85 675.48V680M995.35 675.14H999.2M995.45 677.47H998.94M995.67 679.81H999.12M996.07 674.2V680.61M998.38 675.11V679.34M1000.35 674.85H1003.35M1000.12 676.6H1003.19M1000.61 678.35H1004.39M1000.28 680.1H1003.72M1001 674.69V679.98M1003.31 674.54V680.49" stroke="#00ff00" stroke-width="1.38" fill="none"/>
<text transform="translate(1005.7,677.47)" y="3.06" font-size="8.5" fill="#00ff00" stroke="#00ff00" stroke-width="0.3" text-anchor="start" textLength="33.34" lengthAdjust="spacingAndGlyphs" font-weight="bold">DHB 1900*12</text>
<text transform="translate(1039.5,677.47)" y="3.42" font-size="9.5" fill="#00ff00" stroke="#00ff00" stroke-width="0.3" text-anchor="middle" textLength="3.52" lengthAdjust="spacingAndGlyphs" font-weight="bold">1</text>
<text transform="translate(1071,677.47)" y="3.42" font-size="9.5" fill="#00ff00" stroke="#00ff00" stroke-width="0.3" text-anchor="middle" textLength="18.28" lengthAdjust="spacingAndGlyphs" font-weight="bold">16MnR</text>
<text transform="translate(1102.5,677.47)" y="3.24" font-size="9" fill="#00ff00" stroke="#00ff00" stroke-width="0.3" text-anchor="middle" textLength="9.99" lengthAdjust="spacingAndGlyphs" font-weight="bold">415</text>
<text transform="translate(1118.5,677.47)" y="3.24" font-size="9" fill="#00ff00" stroke="#00ff00" stroke-width="0.3" text-anchor="middle" textLength="9.99" lengthAdjust="spacingAndGlyphs" font-weight="bold">415</text>
<text transform="translate(929.5,688.41)" y="3.42" font-size="9.5" fill="#00ff00" stroke="#00ff00" stroke-width="0.3" text-anchor="middle" textLength="3.52" lengthAdjust="spacingAndGlyphs" font-weight="bold">4</text>
<path d="M990.98 686.07H993.51M990.82 688.41H993.99M991.3 690.74H994M991.15 686.44V691.81M993.47 685.67V690.79M990 691.91L992.31 688.41M995.17 686.66H998.26M995.7 690.16H998.43M995.69 685.78V690.73M997.23 686.09V691.39M998.77 685.28V690.44M994.92 691.91L997.23 688.41M1000.56 685.78H1003.81M1000.12 687.53H1004.33M999.91 689.28H1004.15M1001 691.03H1003.48M1001 685.68V691.16M1003.31 686.43V690.29M999.84 691.91L1002.15 688.41" stroke="#00ff00" stroke-width="1.38" fill="none"/>
<text transform="translate(1005.7,688.41)" y="3.06" font-size="8.5" fill="#00ff00" stroke="#00ff00" stroke-width="0.3" text-anchor="start" textLength="12.27" lengthAdjust="spacingAndGlyphs" font-weight="bold">30*4</text>
<text transform="translate(1039.5,688.41)" y="3.42" font-size="9.5" fill="#00ff00" stroke="#00ff00" stroke-width="0.3" text-anchor="middle" textLength="3.52" lengthAdjust="spacingAndGlyphs" font-weight="bold">4</text>
<text transform="translate(1071,688.41)" y="3.42" font-size="9.5" fill="#00ff00" stroke="#00ff00" stroke-width="0.3" text-anchor="middle" textLength="20.74" lengthAdjust="spacingAndGlyphs" font-weight="bold">Q235-A</text>
<text transform="translate(1102.5,688.41)" y="3.24" font-size="9" fill="#00ff00" stroke="#00ff00" stroke-width="0.3" text-anchor="middle" textLength="8.32" lengthAdjust="spacingAndGlyphs" font-weight="bold">0.3</text>
<text transform="translate(1118.5,688.41)" y="3.24" font-size="9" fill="#00ff00" stroke="#00ff00" stroke-width="0.3" text-anchor="middle" textLength="8.32" lengthAdjust="spacingAndGlyphs" font-weight="bold">1.2</text>
<text transform="translate(929.5,699.34)" y="3.42" font-size="9.5" fill="#00ff00" stroke="#00ff00" stroke-width="0.3" text-anchor="middle" textLength="3.52" lengthAdjust="spacingAndGlyphs" font-weight="bold">3</text>
<text transform="translate(939,699.34)" y="3.24" font-size="9" fill="#00ff00" stroke="#00ff00" stroke-width="0.3" text-anchor="start" textLength="26.73" lengthAdjust="spacingAndGlyphs" font-weight="bold">JIS B 2212</text>
<path d="M990.41 697.59H994.3M990.81 701.09H994.18M990.77 696.82V702.57M992.31 697.44V702.27M993.85 697.31V702.58M996.27 697.59H999.09M995.14 701.09H999.14M995.69 696.99V701.63M997.23 696.19V702.58M998.77 696.16V702.26M994.92 702.84L997.23 699.34" stroke="#00ff00" stroke-width="1.38" fill="none"/>
<text transform="translate(1000.8,699.34)" y="3.06" font-size="8.5" fill="#00ff00" stroke="#00ff00" stroke-width="0.3" text-anchor="start" textLength="12.58" lengthAdjust="spacingAndGlyphs" font-weight="bold">DN20</text>
<text transform="translate(1039.5,699.34)" y="3.42" font-size="9.5" fill="#00ff00" stroke="#00ff00" stroke-width="0.3" text-anchor="middle" textLength="3.52" lengthAdjust="spacingAndGlyphs" font-weight="bold">5</text>
<text transform="translate(1071,699.34)" y="3.42" font-size="9.5" fill="#00ff00" stroke="#00ff00" stroke-width="0.3" text-anchor="middle" textLength="18.28" lengthAdjust="spacingAndGlyphs" font-weight="bold">16MnR</text>
<text transform="translate(1102.5,699.34)" y="3.24" font-size="9" fill="#00ff00" stroke="#00ff00" stroke-width="0.3" text-anchor="middle" textLength="11.65" lengthAdjust="spacingAndGlyphs" font-weight="bold">0.94</text>
<text transform="translate(1118.5,699.34)" y="3.24" font-size="9" fill="#00ff00" stroke="#00ff00" stroke-width="0.3" text-anchor="middle" textLength="8.32" lengthAdjust="spacingAndGlyphs" font-weight="bold">4.7</text>
<text transform="translate(929.5,710.28)" y="3.42" font-size="9.5" fill="#00ff00" stroke="#00ff00" stroke-width="0.3" text-anchor="middle" textLength="3.52" lengthAdjust="spacingAndGlyphs" font-weight="bold">2</text>
<path d="M990.17 708.53H993.34M991.38 712.03H993.32M990.77 707.7V713.27M992.31 707.39V712.46M993.85 707.65V712.15M990 713.78L992.31 710.28M996.12 707.94H998.71M995.67 710.28H999.42M995.11 712.61H999.16M995.69 708.34V712.3M997.23 707.18V712.16M998.77 706.83V712.73" stroke="#00ff00" stroke-width="1.38" fill="none"/>
<text transform="translate(1000.8,710.28)" y="3.06" font-size="8.5" fill="#00ff00" stroke="#00ff00" stroke-width="0.3" text-anchor="start" textLength="20.13" lengthAdjust="spacingAndGlyphs" font-weight="bold">φ25*3.5</text>
<text transform="translate(1039.5,710.28)" y="3.42" font-size="9.5" fill="#00ff00" stroke="#00ff00" stroke-width="0.3" text-anchor="middle" textLength="3.52" lengthAdjust="spacingAndGlyphs" font-weight="bold">5</text>
<text transform="translate(1071,710.28)" y="3.42" font-size="9.5" fill="#00ff00" stroke="#00ff00" stroke-width="0.3" text-anchor="middle" textLength="7.03" lengthAdjust="spacingAndGlyphs" font-weight="bold">20</text>
<text transform="translate(1102.5,710.28)" y="3.24" font-size="9" fill="#00ff00" stroke="#00ff00" stroke-width="0.3" text-anchor="middle" textLength="11.65" lengthAdjust="spacingAndGlyphs" font-weight="bold">0.88</text>
<text transform="translate(1118.5,710.28)" y="3.24" font-size="9" fill="#00ff00" stroke="#00ff00" stroke-width="0.3" text-anchor="middle" textLength="8.32" lengthAdjust="spacingAndGlyphs" font-weight="bold">4.5</text>
<text transform="translate(929.5,721.21)" y="3.42" font-size="9.5" fill="#00ff00" stroke="#00ff00" stroke-width="0.3" text-anchor="middle" textLength="3.52" lengthAdjust="spacingAndGlyphs" font-weight="bold">1</text>
<path d="M991.31 718.88H993.71M990.07 721.21H994.16M990.62 723.55H994.28M991.15 719.01V724.4M993.47 719.09V724.19M990 724.71L992.31 721.21M995.05 718.59H998.78M996.01 720.34H998.71M995.56 722.09H999.49M995.63 723.84H999.41M995.69 718.84V724.48M997.23 718.72V724.09M998.77 718.37V723.55M994.92 724.71L997.23 721.21M1000.3 719.46H1003.29M1001.05 722.96H1003.79M1001 717.97V724.55M1003.31 719.25V724.51M999.84 724.71L1002.15 721.21" stroke="#00ff00" stroke-width="1.38" fill="none"/>
<text transform="translate(1039.5,721.21)" y="3.42" font-size="9.5" fill="#00ff00" stroke="#00ff00" stroke-width="0.3" text-anchor="middle" textLength="3.52" lengthAdjust="spacingAndGlyphs" font-weight="bold">5</text>
<text transform="translate(1071,721.21)" y="3.42" font-size="9.5" fill="#00ff00" stroke="#00ff00" stroke-width="0.3" text-anchor="middle" textLength="7.03" lengthAdjust="spacingAndGlyphs" font-weight="bold">20</text>
<text transform="translate(1102.5,721.21)" y="3.24" font-size="9" fill="#00ff00" stroke="#00ff00" stroke-width="0.3" text-anchor="middle" textLength="8.32" lengthAdjust="spacingAndGlyphs" font-weight="bold">0.9</text>
<text transform="translate(1118.5,721.21)" y="3.24" font-size="9" fill="#00ff00" stroke="#00ff00" stroke-width="0.3" text-anchor="middle" textLength="8.32" lengthAdjust="spacingAndGlyphs" font-weight="bold">4.5</text>
<line x1="1095.5" y1="726.1" x2="1095.5" y2="742.5" stroke="#00ffff" stroke-width="1"/>
<line x1="1110.5" y1="726.1" x2="1110.5" y2="734.6" stroke="#00ffff" stroke-width="1"/>
<line x1="1127.5" y1="726.1" x2="1127.5" y2="742.5" stroke="#00ffff" stroke-width="1"/>
<line x1="1095" y1="734.5" x2="1127" y2="734.5" stroke="#00ffff" stroke-width="1"/>
<path d="M925.38 731.94H929.03M925.7 733.31H929.29M925.29 734.69H928.1M925.32 736.06H928.62M926.05 732.61V735.5M928.25 732.25V736.01M924.95 736.75L927.15 734M929.79 732.62H933.98M930.7 735.38H933.12M930.75 731.54V735.73M932.95 731.37V736.51" stroke="#00ff00" stroke-width="1.38" fill="none"/>
<path d="M948.61 732.38H952.39M948.46 735.62H951.81M948.87 730.89V736.31M950.6 731.13V736.28M952.33 732.02V736.09M948 737.25L950.6 734" stroke="#00ff00" stroke-width="1.38" fill="none"/>
<path d="M962.93 732.38H965.67M962.06 735.62H966.24M963.3 731.87V735.93M965.9 731.31V735.93M962 737.25L964.6 734" stroke="#00ff00" stroke-width="1.38" fill="none"/>
<path d="M999.5 732.38H1002.75M1000.23 735.62H1004.15M1000.3 732.03V737.01M1002.9 731.58V736.98" stroke="#00ff00" stroke-width="1.38" fill="none"/>
<path d="M1014.31 732.38H1018.86M1014.52 735.62H1017.68M1015.3 732.37V735.96M1017.9 731.53V736.44" stroke="#00ff00" stroke-width="1.38" fill="none"/>
<path d="M1035.21 732.62H1038.52M1036.07 735.38H1038.31M1036.05 731.38V735.76M1038.25 731.73V736.53M1039.83 731.94H1042.96M1040.89 733.31H1042.86M1040.63 734.69H1042.95M1040.71 736.06H1043.27M1040.38 731.85V735.62M1041.85 732.33V735.55M1043.32 731.66V735.43" stroke="#00ff00" stroke-width="1.38" fill="none"/>
<path d="M1060.11 731.56H1063.98M1061.25 733.19H1064.03M1061.32 734.81H1064.83M1060.92 736.44H1064.32M1061.3 732.18V736.32M1063.9 732.27V735.8M1060 737.25L1062.6 734" stroke="#00ff00" stroke-width="1.38" fill="none"/>
<path d="M1077.24 731.56H1080.13M1077.47 733.19H1079.91M1076.63 734.81H1081.06M1077.02 736.44H1079.9M1076.87 731.3V736.28M1078.6 732.11V735.96M1080.33 730.76V736.46M1076 737.25L1078.6 734" stroke="#00ff00" stroke-width="1.38" fill="none"/>
<path d="M1098.64 728.98H1101.58M1098.69 731.62H1101.92M1098.82 727.93V732.48M1100.23 728.77V732.13M1101.64 728.04V732.83M1098.11 732.95L1100.23 730.3M1103.17 728.31H1106.21M1102.96 729.64H1106.61M1103.45 730.96H1106.41M1103.79 732.29H1106.39M1103.36 728.09V732.75M1104.77 727.87V732.48M1106.18 728.73V731.78" stroke="#00ff00" stroke-width="1.38" fill="none"/>
<path d="M1114.52 728.53H1117.24M1115.12 730.3H1117.58M1115.2 732.07H1117.12M1114.82 728.17V732.94M1116.23 728.78V732.81M1117.64 727.98V732.2M1119.51 728.31H1121.64M1119.58 729.64H1121.93M1119.5 730.96H1122.72M1119.61 732.29H1122.57M1119.36 728.2V732.27M1120.77 728.09V732.6M1122.18 728.04V732.55" stroke="#00ff00" stroke-width="1.38" fill="none"/>
<path d="M1106.13 736.73H1108.03M1105.07 737.98H1108.21M1105.59 739.23H1108.17M1105.02 740.48H1107.95M1105.67 737.21V740.95M1107 736.57V740.71M1108.33 736.74V740.91M1114.14 736.93H1116.42M1113.01 738.6H1115.88M1113.33 740.27H1116.77M1114 737.25V740.47M1116 737.35V740.88" stroke="#00ff00" stroke-width="1.38" fill="none"/>
<path d="M1138.45 731.83H1142.35M1138.66 734H1141.67M1139.01 736.17H1141.94M1139.3 731.85V736.63M1141.9 732.31V736.1" stroke="#00ff00" stroke-width="1.38" fill="none"/>
<path d="M1153.25 731.83H1157.3M1154.29 734H1156.96M1153.54 736.17H1157.98M1153.87 731.59V735.82M1155.6 731.01V736.05M1157.33 731.03V736.74M1153 737.25L1155.6 734" stroke="#00ff00" stroke-width="1.38" fill="none"/>
<line x1="922" y1="742.5" x2="1167" y2="742.5" stroke="#ffffff" stroke-width="1"/>
<line x1="922.5" y1="742.5" x2="922.5" y2="803" stroke="#ffffff" stroke-width="1"/>
<line x1="1004.5" y1="742.5" x2="1004.5" y2="803" stroke="#ffffff" stroke-width="1"/>
<line x1="1086.5" y1="742.5" x2="1086.5" y2="803" stroke="#ffffff" stroke-width="1"/>
<line x1="922" y1="749.5" x2="1004" y2="749.5" stroke="#00ffff" stroke-width="1"/>
<line x1="922" y1="756.5" x2="1004" y2="756.5" stroke="#00ffff" stroke-width="1"/>
<line x1="922" y1="762.5" x2="1004" y2="762.5" stroke="#00ffff" stroke-width="1"/>
<line x1="922" y1="769.5" x2="1004" y2="769.5" stroke="#00ffff" stroke-width="1"/>
<line x1="922" y1="776.5" x2="1086" y2="776.5" stroke="#ffffff" stroke-width="1"/>
<line x1="922" y1="783.5" x2="1004" y2="783.5" stroke="#00ffff" stroke-width="1"/>
<line x1="922" y1="790.5" x2="1004" y2="790.5" stroke="#00ffff" stroke-width="1"/>
<line x1="922" y1="797.5" x2="1004" y2="797.5" stroke="#00ffff" stroke-width="1"/>
<line x1="934.5" y1="742.5" x2="934.5" y2="776" stroke="#ffffff" stroke-width="1"/>
<line x1="942.5" y1="742.5" x2="942.5" y2="776" stroke="#ffffff" stroke-width="1"/>
<line x1="970.5" y1="742.5" x2="970.5" y2="776" stroke="#ffffff" stroke-width="1"/>
<line x1="990.5" y1="742.5" x2="990.5" y2="776" stroke="#ffffff" stroke-width="1"/>
<line x1="942.5" y1="776" x2="942.5" y2="803" stroke="#ffffff" stroke-width="1"/>
<line x1="963.5" y1="776" x2="963.5" y2="803" stroke="#ffffff" stroke-width="1"/>
<line x1="983.5" y1="776" x2="983.5" y2="803" stroke="#ffffff" stroke-width="1"/>
<path d="M925.27 771.1H927.49M925.19 772.5H927.58M925.39 773.9H927.37M925.05 771.05V773.63M926.17 770.82V773.88M927.29 770.78V774.26M928.26 771.1H930.58M928.78 772.5H931M928.56 773.9H931.35M928.71 771.34V774.55M929.83 770.69V774.04M930.95 771.09V773.71M928.15 774.6L929.83 772.5" stroke="#00ff00" stroke-width="1.25" fill="none"/>
<path d="M934.88 771.45H937.13M934.89 773.55H937.03M935.05 771.29V774.47M936.17 770.87V774.59M937.29 770.96V773.87M934.49 774.6L936.17 772.5M938.42 770.92H941.26M938.22 771.98H940.96M938.91 773.02H940.83M938.57 774.07H940.7M938.71 770.52V774.28M939.83 771.08V773.58M940.95 771.07V773.87" stroke="#00ff00" stroke-width="1.25" fill="none"/>
<path d="M949.23 771.1H951.69M949.17 772.5H951.32M949.55 773.9H952.05M949.39 771.17V774.17M950.51 771.37V774.3M951.63 770.62V773.88M953.35 771.45H955.18M953.07 773.55H955.44M953.33 771V774.31M955.01 771.29V773.77M956.83 771.45H958.75M956.65 773.55H958.6M956.99 771.34V773.82M958.67 771.26V773.92M960.43 771.45H962.89M959.88 773.55H962.56M960.37 771.27V774.31M961.49 770.62V774.36M962.61 770.5V773.89" stroke="#00ff00" stroke-width="1.25" fill="none"/>
<path d="M976.51 771.45H979.33M976.61 773.55H978.89M977.05 770.63V774.12M978.17 771.2V774.13M979.29 770.93V773.57M980.19 770.92H982.68M980.26 771.98H983.28M980.78 773.02H983.17M980.48 774.07H982.94M980.99 770.63V773.77M982.67 770.62V773.72" stroke="#00ff00" stroke-width="1.25" fill="none"/>
<path d="M993.71 770.92H996.68M994.31 771.98H996.58M993.87 773.02H995.89M993.77 774.07H996.76M994.33 770.52V774.19M996.01 771.4V774.17M998.12 771.45H1000.18M998.14 773.55H1000.44M997.71 770.9V774.46M998.83 770.88V773.88M999.95 771.14V774.12M997.15 774.6L998.83 772.5" stroke="#00ff00" stroke-width="1.25" fill="none"/>
<path d="M928.69 778.38H931.54M928.46 780.62H931.06M929.15 777.83V781.26M930.95 777.47V780.96M928.25 781.75L930.05 779.5M932.76 778H934.99M933.2 779.5H934.94M933.17 781H934.76M933.05 778.06V780.94M934.85 777.32V781.52M932.15 781.75L933.95 779.5" stroke="#00ff00" stroke-width="1.25" fill="none"/>
<path d="M969.85 777.81H972.17M969.86 778.94H972.51M969.63 780.06H972.74M970.05 781.19H972.1M969.85 777.72V781.72M971.05 778.05V780.88M972.25 777.64V780.78M969.25 781.75L971.05 779.5M974.22 778H975.77M974.01 779.5H976.24M974.04 781H976.61M973.75 777.37V781.12M974.95 777.82V781.51M976.15 777.53V781.73" stroke="#00ff00" stroke-width="1.25" fill="none"/>
<path d="M929.27 791.81H930.79M928.72 792.94H931.06M928.66 794.06H930.97M929.16 795.19H931.71M928.85 791.26V795.51M930.05 791.91V795.32M931.25 791.26V794.82M932.37 792H935.13M933.14 793.5H934.82M932.52 795H935.15M933.05 791.77V794.88M934.85 792.27V795.74M932.15 795.75L933.95 793.5" stroke="#00ff00" stroke-width="1.25" fill="none"/>
<path d="M929.2 798.5H931.74M929.2 800H930.83M928.73 801.5H931.23M928.85 798.79V801.48M930.05 798.78V801.39M931.25 798.39V801.44M932.85 798.88H934.82M933.22 801.12H934.98M932.75 798.28V801.26M933.95 798.43V802.12M935.15 798.31V801.82" stroke="#00ff00" stroke-width="1.25" fill="none"/>
<path d="M969.67 798.88H972M970.14 801.12H972.17M970.15 798.58V802.21M971.95 797.86V801.15M973.2 798.88H976.49M974.16 801.12H976.51M973.75 798.51V801.2M974.95 798.47V801.22M976.15 798.05V802.08M973.15 802.25L974.95 800" stroke="#00ff00" stroke-width="1.25" fill="none"/>
<path d="M1026.2 754.75H1031.26M1026.15 759.25H1031.89M1027.6 752.74V759.73M1031.2 754.5V759.44M1025.8 761.5L1029.4 757M1034.69 754.75H1039.46M1034.88 759.25H1039.07M1035.4 752.67V761.38M1039 753.73V760.85M1033.6 761.5L1037.2 757M1041.45 754.75H1046.81M1043.15 759.25H1047.61M1043.2 752.77V760.04M1046.8 752.97V760.53M1041.4 761.5L1045 757M1050.66 754.75H1056.21M1049.72 759.25H1054.5M1050.4 754.71V761.3M1052.8 753.12V760.8M1055.2 753.17V760.39M1057.01 754H1064.04M1057.25 757H1062.7M1058.29 760H1063.08M1058.8 753.53V760.58M1062.4 753.87V760.04" stroke="#00ff00" stroke-width="1.5" fill="none"/>
<text transform="translate(1045,768)" y="3.96" font-size="11" fill="#00ff00" stroke="#00ff00" stroke-width="0.35" text-anchor="middle" textLength="31.88" lengthAdjust="spacingAndGlyphs">ST-3502</text>
<line x1="1004" y1="783.5" x2="1086" y2="783.5" stroke="#00ffff" stroke-width="1"/>
<line x1="1004" y1="795.5" x2="1086" y2="795.5" stroke="#00ffff" stroke-width="1"/>
<line x1="1045.5" y1="776" x2="1045.5" y2="803" stroke="#ffffff" stroke-width="1"/>
<line x1="1065.5" y1="776" x2="1065.5" y2="795.5" stroke="#ffffff" stroke-width="1"/>
<line x1="1014.5" y1="783.5" x2="1014.5" y2="795.5" stroke="#00ffff" stroke-width="1"/>
<line x1="1024.5" y1="783.5" x2="1024.5" y2="795.5" stroke="#00ffff" stroke-width="1"/>
<line x1="1034.5" y1="783.5" x2="1034.5" y2="795.5" stroke="#00ffff" stroke-width="1"/>
<path d="M1016.22 778.22H1017.82M1016.02 779.27H1018.63M1015.99 780.32H1017.8M1015.73 781.37H1017.77M1016.14 777.89V780.91M1017.82 778.16V781.16M1015.3 781.9L1016.98 779.8M1019.09 778.4H1022.03M1019.22 779.8H1022.26M1020.01 781.2H1021.76M1019.62 778.2V781.25M1020.74 778.49V781.11M1021.86 778.04V781.06M1019.06 781.9L1020.74 779.8M1023.16 778.22H1025.63M1023.18 779.27H1025.36M1022.82 780.32H1025.4M1023.06 781.37H1025.83M1023.66 777.78V781.73M1025.34 777.74V781.01M1022.82 781.9L1024.5 779.8M1026.64 778.4H1029.82M1027.04 779.8H1029.73M1026.63 781.2H1029.27M1027.14 777.96V780.94M1028.26 778.68V781.36M1029.38 778.52V781.24M1031.1 778.75H1032.81M1031.06 780.85H1033.27M1030.9 777.82V780.9M1032.02 778.34V781.26M1033.14 777.87V780.9M1030.34 781.9L1032.02 779.8" stroke="#00ff00" stroke-width="1.25" fill="none"/>
<path d="M1051.02 778.3H1053.21M1050.75 779.8H1053.31M1051.34 781.3H1053.58M1051.55 778.29V781.22M1053.35 777.71V781.97M1050.65 782.05L1052.45 779.8M1055.83 778.3H1058.56M1056.33 779.8H1059.27M1055.83 781.3H1058.75M1056.35 778.36V781.32M1057.55 778.12V781.06M1058.75 778.59V781.54" stroke="#00ff00" stroke-width="1.25" fill="none"/>
<path d="M1071.58 778.3H1074M1071.34 779.8H1073.68M1072.1 781.3H1073.82M1071.75 778.07V781.69M1072.95 777.78V781.61M1074.15 778.43V781.93M1071.15 782.05L1072.95 779.8M1076.55 778.3H1079.84M1076.46 779.8H1078.87M1076.42 781.3H1079.14M1076.85 778.21V781.31M1078.05 777.75V781.89M1079.25 777.66V780.94M1076.25 782.05L1078.05 779.8" stroke="#00ff00" stroke-width="1.25" fill="none"/>
<text transform="translate(1055,789.5)" y="2.88" font-size="8" fill="#00ff00" stroke="#00ff00" stroke-width="0.3" text-anchor="middle" textLength="19.24" lengthAdjust="spacingAndGlyphs" font-weight="bold">1900.71</text>
<text transform="translate(1075.5,789.5)" y="2.88" font-size="8" fill="#00ff00" stroke="#00ff00" stroke-width="0.3" text-anchor="middle" textLength="10.36" lengthAdjust="spacingAndGlyphs" font-weight="bold">1:30</text>
<path d="M1012.62 797.61H1015.36M1012.07 798.74H1015.58M1012.92 799.86H1015.46M1013.04 800.99H1015.21M1012.9 797.86V801.39M1014.7 797.94V801.27M1012 801.55L1013.8 799.3" stroke="#00ff00" stroke-width="1.25" fill="none"/>
<path d="M1030.94 797.61H1032.62M1030.18 798.74H1032.78M1031.01 799.86H1033.57M1030.7 800.99H1032.64M1030.9 797.91V800.59M1032.7 797.32V800.55M1030 801.55L1031.8 799.3" stroke="#00ff00" stroke-width="1.25" fill="none"/>
<path d="M1052.11 798.17H1055.19M1052.4 800.42H1055.3M1052.9 797.58V801M1054.7 797.17V800.93M1052 801.55L1053.8 799.3" stroke="#00ff00" stroke-width="1.25" fill="none"/>
<path d="M1073.52 797.8H1075.6M1073.98 799.3H1076.14M1073.07 800.8H1076.39M1073.9 797.35V801.05M1075.7 797.32V801.17M1073 801.55L1074.8 799.3" stroke="#00ff00" stroke-width="1.25" fill="none"/>
<line x1="1086" y1="762.5" x2="1167" y2="762.5" stroke="#ffffff" stroke-width="1"/>
<line x1="1086" y1="783.5" x2="1167" y2="783.5" stroke="#ffffff" stroke-width="1"/>
<path d="M1099.6 750.19H1103.16M1099.78 752.06H1102.1M1100.2 753.94H1102.94M1099.03 755.81H1102.87M1100.08 749.35V755.77M1102.33 750.21V756.16M1098.95 756.75L1101.2 753M1104.18 750.5H1106.77M1104.61 753H1107.87M1104.64 755.5H1107.2M1104.3 749.43V756.22M1105.8 750.73V756.62M1107.3 750.57V755.86M1103.55 756.75L1105.8 753M1109 750.19H1111.55M1109.37 752.06H1111.78M1109.08 753.94H1112.61M1109.03 755.81H1111.61M1109.28 750.5V756.49M1111.53 749.93V756.02M1113.91 750.5H1116.75M1113.97 753H1117M1113.06 755.5H1116.44M1113.88 750.94V756.6M1116.12 749.66V756.68M1112.75 756.75L1115 753M1117.76 751.12H1121.43M1117.62 754.88H1121.76M1118.48 749.3V756.44M1120.73 749.92V755.84M1117.35 756.75L1119.6 753M1122.86 750.5H1126.16M1123.17 753H1126.19M1122.59 755.5H1126.03M1122.7 750.72V756.24M1124.2 751.08V755.33M1125.7 749.31V756.42M1121.95 756.75L1124.2 753M1127.32 750.19H1130.01M1126.87 752.06H1129.92M1126.76 753.94H1129.95M1127.37 755.81H1130.41M1127.67 750.28V756.03M1129.92 749.74V755.7M1126.55 756.75L1128.8 753M1132.38 750.5H1134.3M1131.33 753H1135.22M1132.17 755.5H1135.42M1132.28 750.04V756.6M1134.53 750.79V755.27M1131.15 756.75L1133.4 753M1136.91 750.19H1138.96M1136.11 752.06H1138.98M1136.3 753.94H1140.18M1136.98 755.81H1140.11M1136.88 749.28V756.21M1139.12 749.79V754.94M1141.06 750.5H1143.7M1141.44 753H1143.97M1141.04 755.5H1144.69M1141.48 749.71V755.52M1143.73 750.35V755.25M1145.54 750.19H1148.65M1145.29 752.06H1148.93M1146.11 753.94H1148.16M1145.82 755.81H1148.89M1146.08 751.04V756.27M1148.33 750.79V755.44M1144.95 756.75L1147.2 753M1149.84 750.19H1153.61M1150.79 752.06H1153.45M1150.01 753.94H1153.02M1150.84 755.81H1152.85M1150.3 750.12V756.14M1151.8 751.07V754.92M1153.3 749.42V754.93" stroke="#00ff00" stroke-width="1.25" fill="none"/>
<text transform="translate(1126.5,773)" y="3.96" font-size="11" fill="#00ff00" stroke="#00ff00" stroke-width="0.45" text-anchor="middle" textLength="26.18" lengthAdjust="spacingAndGlyphs">B509616</text>
<line x1="743.5" y1="668.5" x2="922" y2="668.5" stroke="#ffffff" stroke-width="1"/>
<line x1="743.5" y1="683.5" x2="922" y2="683.5" stroke="#ffffff" stroke-width="1"/>
<line x1="743.5" y1="694.5" x2="922" y2="694.5" stroke="#ffffff" stroke-width="1"/>
<line x1="743.5" y1="704.5" x2="922" y2="704.5" stroke="#ffffff" stroke-width="1"/>
<line x1="743.5" y1="715.5" x2="922" y2="715.5" stroke="#ffffff" stroke-width="1"/>
<line x1="743.5" y1="726.5" x2="922" y2="726.5" stroke="#ffffff" stroke-width="1"/>
<line x1="743.5" y1="737.5" x2="922" y2="737.5" stroke="#ffffff" stroke-width="1"/>
<line x1="743.5" y1="748.5" x2="922" y2="748.5" stroke="#ffffff" stroke-width="1"/>
<line x1="743.5" y1="759.5" x2="922" y2="759.5" stroke="#ffffff" stroke-width="1"/>
<line x1="743.5" y1="770.5" x2="922" y2="770.5" stroke="#ffffff" stroke-width="1"/>
<line x1="743.5" y1="781.5" x2="922" y2="781.5" stroke="#ffffff" stroke-width="1"/>
<line x1="743.5" y1="792.5" x2="922" y2="792.5" stroke="#ffffff" stroke-width="1"/>
<line x1="743.5" y1="803.5" x2="922" y2="803.5" stroke="#ffffff" stroke-width="1"/>
<line x1="743.5" y1="668.7" x2="743.5" y2="803" stroke="#ffffff" stroke-width="1"/>
<line x1="816.5" y1="668.7" x2="816.5" y2="803" stroke="#ffffff" stroke-width="1"/>
<line x1="922.5" y1="668.7" x2="922.5" y2="803" stroke="#ffffff" stroke-width="1"/>
<line x1="869.5" y1="668.7" x2="869.5" y2="781.8" stroke="#ffffff" stroke-width="1"/>
<path d="M824.09 660.67H827.56M823.83 663H827.36M823.72 665.33H826.72M823.99 659.72V666.11M826.61 659.88V666.03M822.67 666.5L825.3 663M829.5 661.25H832.76M829.26 664.75H833.06M829.4 660.08V665.55M831.15 660.1V665.17M832.9 660.05V665.08M835 660.38H839.44M835.37 662.12H839.16M835.24 663.88H839.3M834.77 665.62H838.69M835.69 660.85V665.85M838.31 660.99V665.36M834.38 666.5L837 663M841.56 661.25H844.1M841.15 664.75H845.16M841.1 659.53V665.56M842.85 660.77V666.02M844.6 659.62V666.49M840.22 666.5L842.85 663M846.08 660.38H850.96M846.49 662.12H850.21M847.63 663.88H851.29M846.25 665.62H849.85M847.39 661.2V666.24M850.01 660.09V665.59M846.07 666.5L848.7 663" stroke="#ffffff" stroke-width="1.38" fill="none"/>
<path d="M837.07 673.5H840.9M837.17 676H841.02M835.98 678.5H841.39M836.5 672.35V677.92M838.5 672.5V678.12M840.5 672.87V678.81M835.5 679.75L838.5 676M845.85 673.19H848.99M845.26 675.06H849.97M844.53 676.94H849.94M844.63 678.81H849.65M846 672.37V679.46M849 673.74V678.9M844.5 679.75L847.5 676" stroke="#ffffff" stroke-width="1.5" fill="none"/>
<path d="M889.98 674.12H893.65M889.28 677.88H894.48M890 674V679.35M893 673.82V678.89M898.44 673.19H902.9M897.6 675.06H903.09M897.54 676.94H902.58M897.88 678.81H902.21M898.5 673.1V679.39M900.5 672.59V677.9M902.5 674.12V678.07M897.5 679.75L900.5 676" stroke="#ffffff" stroke-width="1.5" fill="none"/>
<path d="M747.7 686.81H751.53M748.06 690.31H751.01M748.26 686.29V690.65M750.78 685.75V691.14M747 692.06L749.52 688.56M752.52 685.93H757.36M753.17 687.68H757.2M753.8 689.43H756.1M753.09 691.18H757.13M753.23 685.27V691.17M754.91 685.97V691.43M756.59 686.31V691.13M758.72 686.81H762.16M757.88 690.31H761.61M759.04 685.96V691.27M761.56 686.55V690.42M757.78 692.06L760.3 688.56M763.98 685.93H767.03M764.27 687.68H767.73M763.25 689.43H767.05M763.3 691.18H766.82M764.01 685.29V690.56M765.69 686.71V691.08M767.37 685.17V690.86M763.17 692.06L765.69 688.56" stroke="#ffffff" stroke-width="1.38" fill="none"/>
<text transform="translate(812,688.56)" y="3.24" font-size="9" fill="#ffffff" stroke="#ffffff" stroke-width="0.3" text-anchor="end" textLength="12.82" lengthAdjust="spacingAndGlyphs">MPa</text>
<text transform="translate(843,688.56)" y="3.24" font-size="9" fill="#ffffff" stroke="#ffffff" stroke-width="0.3" text-anchor="middle" textLength="14.02" lengthAdjust="spacingAndGlyphs">0.19</text>
<text transform="translate(896,688.56)" y="3.24" font-size="9" fill="#ffffff" stroke="#ffffff" stroke-width="0.3" text-anchor="middle" textLength="14.02" lengthAdjust="spacingAndGlyphs">4.35</text>
<path d="M748.29 696.86H751.04M747.52 698.61H751.25M747.22 700.36H750.99M748.08 702.11H750.93M748.26 696.04V701.39M750.78 697.15V702.05M753.63 697.15H756.52M753 699.48H757.07M752.97 701.81H756.21M753.65 697.22V702.35M756.17 697.54V702.18M759.21 697.73H761.4M758.87 701.23H762.24M758.62 696.38V702.66M760.3 697.4V701.65M761.98 696.67V702.63M764.55 696.86H767.47M764.48 698.61H767.43M764.38 700.36H768.17M763.95 702.11H766.98M764.43 697.2V701.27M766.95 697.06V702.43" stroke="#ffffff" stroke-width="1.38" fill="none"/>
<text transform="translate(812,699.48)" y="3.24" font-size="9" fill="#ffffff" stroke="#ffffff" stroke-width="0.3" text-anchor="end" textLength="12.82" lengthAdjust="spacingAndGlyphs">MPa</text>
<text transform="translate(843,699.48)" y="3.24" font-size="9" fill="#ffffff" stroke="#ffffff" stroke-width="0.3" text-anchor="middle" textLength="18.02" lengthAdjust="spacingAndGlyphs">0.025</text>
<text transform="translate(896,699.48)" y="3.24" font-size="9" fill="#ffffff" stroke="#ffffff" stroke-width="0.3" text-anchor="middle" textLength="14.02" lengthAdjust="spacingAndGlyphs">3.30</text>
<path d="M748 708.07H751.95M747 710.4H751.69M747.52 712.73H750.85M748.26 707.35V713.83M750.78 706.97V712.15M747 713.9L749.52 710.4M753.83 708.07H756.97M753.32 710.4H756.83M752.82 712.73H756M753.23 706.92V712.72M754.91 708.22V712.55M756.59 707.89V712.3M759.28 707.78H761.72M758.92 709.53H761.59M758.16 711.28H761.83M758.36 713.03H761.55M759.04 707.13V712.96M761.56 707.49V712.46M757.78 713.9L760.3 710.4M764.5 708.65H768M764.59 712.15H767.08M764.01 708.08V712.76M765.69 706.98V712.38M767.37 707.86V713.1M763.17 713.9L765.69 710.4" stroke="#ffffff" stroke-width="1.38" fill="none"/>
<text transform="translate(812,710.4)" y="3.24" font-size="9" fill="#ffffff" stroke="#ffffff" stroke-width="0.3" text-anchor="end" textLength="6.41" lengthAdjust="spacingAndGlyphs">°C</text>
<text transform="translate(843,710.4)" y="3.24" font-size="9" fill="#ffffff" stroke="#ffffff" stroke-width="0.3" text-anchor="middle" textLength="12.02" lengthAdjust="spacingAndGlyphs">220</text>
<text transform="translate(896,710.4)" y="3.24" font-size="9" fill="#ffffff" stroke="#ffffff" stroke-width="0.3" text-anchor="middle" textLength="12.02" lengthAdjust="spacingAndGlyphs">260</text>
<path d="M748.1 718.99H751.49M747.1 721.32H751.86M748.34 723.65H750.67M748.26 717.86V724.17M750.78 718.9V723.95M747 724.82L749.52 721.32M752.86 718.99H756.71M752.96 721.32H756.46M753.73 723.65H756.56M753.23 718.38V724.22M754.91 719.29V723.53M756.59 718.44V723.22M758.51 718.69H762.19M759.11 720.44H761.81M758.09 722.19H762.27M758.33 723.94H761.37M759.04 719.04V724.6M761.56 719.42V724.76M764.25 718.99H767.56M763.31 721.32H767.42M764.41 723.65H767.02M764.43 718.44V724.43M766.95 719.12V723.42M763.17 724.82L765.69 721.32M768.8 718.69H772.64M768.68 720.44H772.97M769.05 722.19H772.1M769.34 723.94H772.13M769.4 718.68V723.5M771.08 717.84V723.3M772.76 718.88V724.16M773.98 719.57H778.01M775.28 723.07H778.82M775.21 718.82V724.73M777.73 717.92V723.94M780.11 718.69H782.97M780.19 720.44H784.16M780.29 722.19H783.17M779.98 723.94H783.47M780.6 718.27V724.34M783.12 718.56V723.92M779.34 724.82L781.86 721.32" stroke="#ffffff" stroke-width="1.38" fill="none"/>
<text transform="translate(812,721.32)" y="3.24" font-size="9" fill="#ffffff" stroke="#ffffff" stroke-width="0.3" text-anchor="end" textLength="6.41" lengthAdjust="spacingAndGlyphs">°C</text>
<text transform="translate(843,721.32)" y="3.24" font-size="9" fill="#ffffff" stroke="#ffffff" stroke-width="0.3" text-anchor="middle" textLength="31.24" lengthAdjust="spacingAndGlyphs">120/~220</text>
<text transform="translate(896,721.32)" y="3.24" font-size="9" fill="#ffffff" stroke="#ffffff" stroke-width="0.3" text-anchor="middle" textLength="26.68" lengthAdjust="spacingAndGlyphs">240/&lt;240</text>
<path d="M748.35 730.49H751.08M747.28 733.99H751.28M748.4 729.68V735.33M751.2 730.18V735.33M747 735.74L749.8 732.24" stroke="#ffffff" stroke-width="1.38" fill="none"/>
<path d="M761.26 730.49H764.4M761.19 733.99H765.14M761.4 730.21V734.12M764.2 728.83V734.09M760 735.74L762.8 732.24" stroke="#ffffff" stroke-width="1.38" fill="none"/>
<text transform="translate(843,732.24)" y="3.24" font-size="9" fill="#ffffff" stroke="#ffffff" stroke-width="0.3" text-anchor="middle" textLength="4" lengthAdjust="spacingAndGlyphs">1</text>
<text transform="translate(896,732.24)" y="3.24" font-size="9" fill="#ffffff" stroke="#ffffff" stroke-width="0.3" text-anchor="middle" textLength="4" lengthAdjust="spacingAndGlyphs">2</text>
<path d="M748.36 741.41H751.19M747.63 744.91H751.56M748.26 739.96V746.28M750.78 740.61V745.95M752.63 741.41H756.81M753.32 744.91H756.97M753.65 739.94V746.28M756.17 739.81V746.32M752.39 746.66L754.91 743.16M758.06 740.54H762.09M758.45 742.29H761.35M758.52 744.04H761.39M758.49 745.79H762.52M758.62 740.7V746.41M760.3 739.96V746.53M761.98 740.89V744.97M757.78 746.66L760.3 743.16M763.68 740.83H767.14M764.44 743.16H767.23M763.87 745.49H766.95M764.01 740.62V746.59M765.69 741.03V745.83M767.37 740.55V745.41M768.8 740.83H772.61M769.69 743.16H773.59M769.6 745.49H772.65M769.4 740.85V745.96M771.08 740.23V745.66M772.76 740.04V745.26M768.56 746.66L771.08 743.16M774.93 740.54H778.56M774.16 742.29H777.62M775.42 744.04H778.06M775.17 745.79H778.32M774.79 740.14V745.75M776.47 739.69V745.7M778.15 741.05V746.09" stroke="#ffffff" stroke-width="1.38" fill="none"/>
<text transform="translate(812,743.16)" y="3.24" font-size="9" fill="#ffffff" stroke="#ffffff" stroke-width="0.3" text-anchor="end" textLength="4" lengthAdjust="spacingAndGlyphs">φ</text>
<text transform="translate(843,743.16)" y="3.24" font-size="9" fill="#ffffff" stroke="#ffffff" stroke-width="0.3" text-anchor="middle" textLength="14.02" lengthAdjust="spacingAndGlyphs">0.85</text>
<text transform="translate(896,743.16)" y="3.24" font-size="9" fill="#ffffff" stroke="#ffffff" stroke-width="0.3" text-anchor="middle" textLength="14.02" lengthAdjust="spacingAndGlyphs">0.85</text>
<path d="M747.38 752.33H751.12M747.85 755.83H750.74M747.84 750.61V756.18M749.52 750.7V756.16M751.2 751.68V757.56M752.63 751.75H756.39M752.42 754.08H757.14M752.48 756.41H756.21M753.23 750.84V757.18M754.91 750.68V757.12M756.59 751.86V756.32M758.95 752.33H762.6M759.05 755.83H762.76M759.04 751.45V756.3M761.56 751.32V756.48M764.65 752.33H768.15M763.25 755.83H768.02M764.43 750.62V756.34M766.95 751.68V757.38M763.17 757.58L765.69 754.08" stroke="#ffffff" stroke-width="1.38" fill="none"/>
<text transform="translate(843,754.08)" y="3.24" font-size="9" fill="#ffffff" stroke="#ffffff" stroke-width="0.3" text-anchor="middle" textLength="10.01" lengthAdjust="spacingAndGlyphs">2.0</text>
<text transform="translate(896,754.08)" y="3.24" font-size="9" fill="#ffffff" stroke="#ffffff" stroke-width="0.3" text-anchor="middle" textLength="10.01" lengthAdjust="spacingAndGlyphs">1.0</text>
<path d="M748.02 763.25H751.47M748.63 766.75H751.99M748.4 763.21V767.74M751.2 762.18V768.06M747 768.5L749.8 765" stroke="#ffffff" stroke-width="1.38" fill="none"/>
<path d="M760.28 763.25H764.1M761.33 766.75H764.55M761.4 762.65V767.72M764.2 762.59V766.92" stroke="#ffffff" stroke-width="1.38" fill="none"/>
<text transform="translate(813,766)" y="3.24" font-size="9" fill="#ffffff" stroke="#ffffff" stroke-width="0.3" text-anchor="end" textLength="9.61" lengthAdjust="spacingAndGlyphs">mm</text>
<path d="M832.76 762.38H835.91M833 764.12H836.77M832.67 765.88H835.81M833.4 767.62H835.86M833.36 762.48V768.25M835.99 761.81V767.83M838.93 763.25H842.28M838.71 766.75H842.55M838.91 762.17V767.34M841.54 762.08V767.66M843.65 762.38H847.81M843.57 764.12H846.98M844.4 765.88H847.16M844.44 767.62H846.84M844.46 762.7V767.94M847.09 762.83V768.04M850.2 763.25H852.6M850.26 766.75H853.18M849.57 762.95V768.42M851.32 762.25V768.36M853.07 762.23V767.99" stroke="#ffffff" stroke-width="1.38" fill="none"/>
<path d="M887.96 762.38H891.85M887.99 764.12H892.64M888 765.88H891.7M888.52 767.62H891.93M889.14 761.95V767.22M891.76 762.64V768.33M887.83 768.5L890.45 765M893.71 762.38H897.59M893.81 764.12H898.04M894.82 765.88H897.14M894.95 767.62H897.95M894.25 762.5V767.09M896 762.83V767.7M897.75 763.01V767.8M899 762.67H902.86M900.2 765H903.71M899.87 767.33H902.81M900.24 762.79V766.86M902.86 762.12V767.01" stroke="#ffffff" stroke-width="1.38" fill="none"/>
<path d="M747.67 773.59H752M747.12 775.92H750.84M748.34 778.25H751.71M748.26 773.47V777.89M750.78 772.56V778.91M753.84 773.3H756.45M753.54 775.05H756.45M753.66 776.8H757.04M752.64 778.55H756.06M753.65 772.81V777.92M756.17 772.81V778.97M752.39 779.42L754.91 775.92M759.25 774.17H761.65M758.73 777.67H762.01M758.62 773.92V778.64M760.3 772.59V777.82M761.98 773.83V778.23M763.9 774.17H767.41M763.47 777.67H767.82M764.01 773.33V779.21M765.69 772.98V777.86M767.37 774.02V777.85M763.17 779.42L765.69 775.92M768.71 773.59H772.85M770.03 775.92H773.1M769.08 778.25H773.46M769.4 773.08V779.22M771.08 774.12V778.55M772.76 772.91V778.84M775.11 774.17H778.51M774.64 777.67H777.54M774.79 773.22V778.77M776.47 773.78V777.78M778.15 773.64V778.58M779.88 774.17H783.47M779.79 777.67H782.91M780.6 772.85V777.72M783.12 772.53V779.4M785.87 774.17H789.41M784.9 777.67H789.34M785.99 772.6V779.08M788.51 773.44V778.25M784.73 779.42L787.25 775.92" stroke="#ffffff" stroke-width="1.38" fill="none"/>
<text transform="translate(843,775.92)" y="3.24" font-size="9" fill="#ffffff" stroke="#ffffff" stroke-width="0.3" text-anchor="middle" textLength="20.83" lengthAdjust="spacingAndGlyphs">16MnR</text>
<text transform="translate(896,775.92)" y="3.24" font-size="9" fill="#ffffff" stroke="#ffffff" stroke-width="0.3" text-anchor="middle" textLength="31.12" lengthAdjust="spacingAndGlyphs">0Cr18Ni9Ti</text>
<path d="M748.47 784.51H751.57M747.86 786.84H752.03M747.63 789.17H750.68M748.26 784.37V788.9M750.78 783.36V789.99M747 790.34L749.52 786.84M752.71 785.09H757.25M753.28 788.59H756.31M753.65 785.01V789.16M756.17 784.01V788.6M752.39 790.34L754.91 786.84M757.95 784.22H761.69M758.19 785.97H762.6M758.33 787.72H761.82M759.22 789.47H761.32M758.62 785.08V789.25M760.3 784.48V790.06M761.98 784.61V789.38M757.78 790.34L760.3 786.84M763.99 784.51H767.96M763.4 786.84H768.04M764.37 789.17H768.02M764.01 783.88V789.35M765.69 783.51V789.47M767.37 784.15V789.03" stroke="#ffffff" stroke-width="1.38" fill="none"/>
<text transform="translate(812,786.84)" y="3.24" font-size="9" fill="#ffffff" stroke="#ffffff" stroke-width="0.3" text-anchor="end" textLength="8.81" lengthAdjust="spacingAndGlyphs">m²</text>
<text transform="translate(869,786.84)" y="3.24" font-size="9" fill="#ffffff" stroke="#ffffff" stroke-width="0.3" text-anchor="middle" textLength="4" lengthAdjust="spacingAndGlyphs">7</text>
<path d="M747.21 796.01H750.64M747.01 799.51H750.69M747.84 794.89V799.91M749.52 795.72V800.23M751.2 795.01V800.43M747 801.26L749.52 797.76M753.07 795.13H756.67M753.79 796.88H756.52M752.66 798.63H757.32M752.51 800.38H756.93M753.65 794.42V800.12M756.17 795V800.72M758.82 795.43H762.56M758.43 797.76H761.41M757.94 800.09H762.04M759.04 795.88V800.23M761.56 795.13V799.53M764.41 795.13H767.02M763.6 796.88H768.15M763.24 798.63H767.42M764.3 800.38H767.92M764.43 794.97V800.86M766.95 794.63V800.81M763.17 801.26L765.69 797.76" stroke="#ffffff" stroke-width="1.38" fill="none"/>
<path d="M863.61 796.01H868.5M864.23 799.51H868.54M864.48 794.41V800.06M866.23 796V800.67M867.98 794.73V800.09M863.6 801.26L866.23 797.76M870.23 795.43H873.72M869.4 797.76H874.29M870.01 800.09H872.84M870.02 795.87V801.09M871.77 795.14V800.41M873.52 794.6V800.09M869.15 801.26L871.77 797.76" stroke="#ffffff" stroke-width="1.38" fill="none"/>
<path d="M469.66 601.83H473.8M468.54 605.58H472.71M469.5 599.99V606.75M472.5 600.19V606.56M468 607.45L471 603.7M476.35 601.83H479.73M476.19 605.58H480.11M476.7 600.08V606.91M479.7 601.77V606.62M483.41 601.2H486.64M483.38 603.7H487.22M482.95 606.2H488.29M483.9 600.16V606.65M486.9 601.02V607.05M490.12 601.2H494.57M489.64 603.7H494.78M490.19 606.2H494.61M490.6 601.15V606.5M492.6 600.13V606.48M494.6 600.59V606.76M489.6 607.45L492.6 603.7" stroke="#ffffff" stroke-width="1.25" fill="none"/>
<g transform="translate(459,0) scale(1.2062,1) translate(-459,0)">
<text transform="translate(459,615)" y="3.06" font-size="8.5" fill="#ffffff" stroke="#ffffff" stroke-width="0.25" text-anchor="start" textLength="7.48" lengthAdjust="spacingAndGlyphs">1. </text>
<path d="M468.04 612.45H471.6M467.55 614.15H470.78M467.33 615.85H470.63M468.31 617.55H470.62M467.78 613.2V617.96M469.54 612.98V617.36M471.31 611.95V616.7M472.92 612.45H476.73M473.08 614.15H477.69M473.78 615.85H477.79M473.53 617.55H476.96M474.12 611.76V617.28M476.77 611.78V617.59M478.77 612.45H483.7M480.23 614.15H483.38M479.38 615.85H483.41M479.81 617.55H482.83M479.58 612.71V617.72M481.35 612.57V617.52M483.12 611.92V616.79" stroke="#ffffff" stroke-width="1.06" fill="none"/>
<text transform="translate(484.6,615)" y="3.06" font-size="8.5" fill="#ffffff" stroke="#ffffff" stroke-width="0.25" text-anchor="start" textLength="33.66" lengthAdjust="spacingAndGlyphs">GB150-1998</text>
<path d="M518.43 612.73H523.54M519.45 615H523.55M519.26 617.27H523.4M519.25 612.21V617.07M521.02 613.12V617.62M522.79 612.17V617.38M524.54 613.3H529.33M525.18 616.7H529.24M525.6 612.17V618.23M528.25 611.86V617.18M524.27 618.4L526.92 615M530.66 612.73H535.05M530.8 615H535.46M530.87 617.27H534.88M531.06 611.62V616.94M532.83 612.24V618.4M534.6 613.23V618.01M530.18 618.4L532.83 615M536.82 613.3H540.72M537.14 616.7H541.24M537.41 612.36V618.04M540.06 611.7V617.42M536.08 618.4L538.73 615M542.98 613.3H546.35M543.39 616.7H546.52M543.31 611.85V617.72M545.96 613.12V617.61M541.98 618.4L544.64 615M548.03 613.3H551.63M549.14 616.7H552.14M549.21 612.17V617.66M551.87 611.93V617.91" stroke="#ffffff" stroke-width="1.06" fill="none"/>
<text transform="translate(553.79,615)" y="3.06" font-size="8.5" fill="#ffffff" stroke="#ffffff" stroke-width="0.25" text-anchor="start" textLength="27.54" lengthAdjust="spacingAndGlyphs">. GB-1999</text>
<path d="M582.31 613.3H586.75M581.91 616.7H585.63M582.39 613.2V617.96M584.16 612.07V617.67M585.93 612.49V617.64M581.51 618.4L584.16 615M588.88 612.45H591.62M587.69 614.15H592.54M588.59 615.85H591.64M588.54 617.55H592.38M588.3 611.96V617.27M590.06 611.92V617.83M591.83 612.84V617.58M587.41 618.4L590.06 615M593.59 613.3H598.5M594.04 616.7H598.59M594.64 612.42V617.7M597.29 613.22V617.7M599.6 613.3H604.04M600 616.7H603.9M600.1 612.7V617.54M601.87 612.15V617.37M603.64 613.29V618.06M599.22 618.4L601.87 615M605.27 613.3H610.34M605.8 616.7H609.1M606.45 612.79V616.76M609.1 613.02V617.4M612.03 613.3H615.68M612.55 616.7H615.54M611.91 612.5V618.22M613.68 611.77V617.28M615.45 612.45V617.67" stroke="#ffffff" stroke-width="1.06" fill="none"/>
<text transform="translate(616.93,615)" y="3.06" font-size="8.5" fill="#ffffff" stroke="#ffffff" stroke-width="0.25" text-anchor="start" textLength="3.4" lengthAdjust="spacingAndGlyphs">]</text>
<path d="M621.96 613.3H625.35M622.01 616.7H624.75M622.12 612.12V617.37M624.77 612.32V617.39M628.12 613.3H631.61M627.61 616.7H631.4M627.58 612.1V617.11M629.35 612.65V617.84M631.12 612.52V616.82M633.28 612.45H636.5M633.61 614.15H636.98M632.83 615.85H636.74M633.08 617.55H636.47M633.93 611.68V617.91M636.58 612.73V618.15M639.72 612.45H643.42M639.95 614.15H643.55M638.92 615.85H642.64M639.84 617.55H642.62M639.83 612.82V616.73M642.48 612.91V617.36M638.5 618.4L641.16 615M645.11 613.3H648.3M645.92 616.7H649.47M645.73 612.36V616.96M648.39 613.24V617.91M644.41 618.4L647.06 615M651.58 612.45H655.53M650.51 614.15H654.28M650.31 615.85H654.29M651.4 617.55H654.43M651.2 612.15V618.28M652.96 612.25V616.82M654.73 612.52V618.33M656.99 612.73H660.19M656.41 615H660.11M656.46 617.27H661.03M657.54 613.13V618.31M660.19 613.15V617.96" stroke="#ffffff" stroke-width="1.06" fill="none"/>
</g>
<g transform="translate(464,0) scale(1.2100,1) translate(-464,0)">
<path d="M465.01 624.3H467.98M465.57 627.7H468.78M464.88 624.02V627.83M466.65 623.13V628.24M468.42 623.76V627.96M470.87 623.73H474.92M470.88 626H474.62M470.15 628.27H474.1M470.79 622.63V627.92M472.56 622.94V628.88M474.32 622.61V628.85M477.09 623.45H480.25M476.51 625.15H480.96M476.45 626.85H480.83M476.14 628.55H479.63M476.69 622.61V627.85M478.46 623.28V629.19M480.23 623.37V629.31M481.9 623.45H486.38M482.03 625.15H486.08M482.41 626.85H486.46M482.43 628.55H486.44M482.6 624.05V627.91M484.36 622.71V628.69M486.13 623.1V629.2M481.71 629.4L484.36 626M487.91 623.73H491.53M488.88 626H492.44M488.61 628.27H492.78M488.5 622.8V629.29M490.27 623.35V628.67M492.04 623.44V628.73M487.62 629.4L490.27 626M494.33 623.45H498.52M493.53 625.15H497.42M494.85 626.85H497.29M494.07 628.55H497.8M494.85 623.55V628.17M497.5 622.74V628.73M493.52 629.4L496.17 626" stroke="#ffffff" stroke-width="1.06" fill="none"/>
<text transform="translate(499.42,626)" y="3.06" font-size="8.5" fill="#ffffff" stroke="#ffffff" stroke-width="0.25" text-anchor="start" textLength="4.08" lengthAdjust="spacingAndGlyphs">. </text>
<path d="M504.41 623.73H508.55M504.7 626H507.81M505.4 628.27H507.79M505.28 623.41V627.76M507.93 622.84V627.83M510.99 624.3H513.89M510.3 627.7H514.31M510.74 623.44V627.91M512.51 624.09V628.67M514.28 622.63V627.71M515.91 623.45H519.51M516.12 625.15H520.47M516.42 626.85H520.15M517.18 628.55H519.56M517.09 623.68V628.78M519.74 622.78V629.28M522.88 623.45H525.48M522.72 625.15H526.06M522.67 626.85H526.59M522.67 628.55H526.16M522.55 624.28V628.84M524.32 623.26V627.7M526.09 623.84V629.34M521.67 629.4L524.32 626M528.62 623.45H531.58M527.66 625.15H532.4M527.7 626.85H532.53M528.37 628.55H532.4M528.9 624.13V628.7M531.55 622.73V628.16M527.57 629.4L530.22 626M534.08 624.3H537.32M534.78 627.7H538.3M534.8 622.71V628.46M537.45 623.71V629.02M533.48 629.4L536.13 626M539.43 623.73H543.51M540.38 626H544.24M540.09 628.27H544.31M540.26 622.92V629.09M542.03 623.99V628.63M543.8 623.82V628.81M546.5 623.45H550.48M545.77 625.15H550.01M545.72 626.85H550.21M546.57 628.55H549.71M546.17 623.25V628.35M547.94 623.14V629.38M549.7 623.77V628.67M551.98 623.73H555.58M551.54 626H556.16M552.2 628.27H555.6M552.07 623.41V628.79M553.84 623.78V627.84M555.61 622.74V627.93M558.1 624.3H561.37M557.88 627.7H561.7M557.98 623.7V628.38M559.74 622.96V627.73M561.51 623.4V627.89M557.09 629.4L559.74 626M563.46 624.3H567.2M563.21 627.7H567.09M563.88 623.96V628.34M565.65 624.04V628.92M567.42 623.44V629.09M569.45 623.73H574.05M569.45 626H573.04M569.82 628.27H573.93M569.78 623.84V629.2M571.55 623.88V629.15M573.32 622.76V628.97M576.3 623.73H579.66M576 626H579M575.7 628.27H579.7M575.69 624.21V627.77M577.46 622.62V628.84M579.22 623.15V629.06M574.8 629.4L577.46 626" stroke="#ffffff" stroke-width="1.06" fill="none"/>
<path d="M581.87 623.73H584.98M581.16 626H585.2M582.23 628.27H585.79M582.03 623.22V628.32M584.69 623.18V628.54M580.71 629.4L583.36 626M587.41 624.3H591.33M587.44 627.7H590.61M587.5 622.67V628.68M589.26 623.66V628.95M591.03 622.91V628.55M593.48 624.3H597.66M593.99 627.7H596.41M593.4 622.66V628.21M595.17 623V628.49M596.94 624.02V628.8M592.52 629.4L595.17 626M598.73 623.45H602.73M599.1 625.15H602.16M598.72 626.85H602.59M598.49 628.55H603.29M599.75 622.8V629.15M602.4 623.5V629.1M605.69 624.3H609.43M604.67 627.7H608.41M605.65 623.4V627.82M608.3 623.17V628.72M611.77 623.73H614.11M610.55 626H614.66M611.73 628.27H615.35M611.55 624.04V628.08M614.21 623.87V628.38M610.23 629.4L612.88 626M616.44 624.3H620.55M617.15 627.7H620.86M617.46 622.73V629.22M620.11 623.52V628.89M622.47 623.73H626.79M623.33 626H626.02M622.33 628.27H627.06M622.92 622.95V628.81M624.69 623.59V629.08M626.46 623.84V629.29M628.9 623.45H633.22M629.41 625.15H632.55M628.89 626.85H631.95M628.38 628.55H633.2M629.27 624.17V628.94M631.92 622.67V629.17" stroke="#ffffff" stroke-width="1.06" fill="none"/>
<text transform="translate(633.84,626)" y="3.06" font-size="8.5" fill="#ffffff" stroke="#ffffff" stroke-width="0.25" text-anchor="start" textLength="4.08" lengthAdjust="spacingAndGlyphs">. </text>
</g>
<g transform="translate(459,0) scale(1.2691,1) translate(-459,0)">
<text transform="translate(459,636.3)" y="3.06" font-size="8.5" fill="#ffffff" stroke="#ffffff" stroke-width="0.25" text-anchor="start" textLength="7.48" lengthAdjust="spacingAndGlyphs">2. </text>
<path d="M467.28 633.75H472.15M467.9 635.45H471.12M467.32 637.15H471.42M467.47 638.85H470.77M468.22 633.64V638.51M470.87 633.76V638.02M466.89 639.7L469.54 636.3M473.44 633.75H477.88M474.02 635.45H477.82M474.03 637.15H477.46M474.19 638.85H477.3M474.12 634.48V639.23M476.77 633.04V639.5M480.12 634.03H483.19M479.52 636.3H482.43M479.04 638.57H483.98M480.03 633.46V639.17M482.68 633.11V638.99M478.7 639.7L481.35 636.3" stroke="#ffffff" stroke-width="1.06" fill="none"/>
<text transform="translate(484.6,636.3)" y="3.06" font-size="8.5" fill="#ffffff" stroke="#ffffff" stroke-width="0.25" text-anchor="start" textLength="45.22" lengthAdjust="spacingAndGlyphs">JB/T4709-2000"</text>
<path d="M531.18 634.03H534.05M531.19 636.3H534.76M530.44 638.57H533.9M530.68 633.98V639.46M532.44 634.06V638.91M534.21 633.7V639.63M537.25 634.6H540.81M536.03 638H540.83M536.58 634.13V638.43M538.35 634V638.37M540.12 633.78V638.74M542.64 633.75H545.97M542.39 635.45H545.7M542.51 637.15H546.7M542.28 638.85H546.23M542.93 633.63V638.75M545.58 633.51V639.04M541.6 639.7L544.25 636.3M549.05 634.03H552.66M547.53 636.3H551.66M548.13 638.57H552.09M548.39 633.91V639.08M550.16 633.31V639.67M551.92 634.39V638.1M547.5 639.7L550.16 636.3M554.86 634.03H557.27M553.78 636.3H557.65M554.12 638.57H557.4M554.29 634.39V638.16M556.06 633.66V639.5M557.83 633.22V638.33M559.87 634.03H563.32M560.43 636.3H563.37M560.77 638.57H563.08M560.64 633.62V639.33M563.29 634.13V638.94M565.37 633.75H569.58M565.89 635.45H570.12M566.69 637.15H569.36M565.41 638.85H570.16M566.54 633.48V638.73M569.19 633.45V638.95M572.66 634.6H575.27M571.22 638H575.04M572 632.93V639.27M573.77 634.49V639.4M575.54 633.75V638.27M571.12 639.7L573.77 636.3M577.3 634.03H581.84M578.01 636.3H580.89M577.84 638.57H581.92M578.35 633.9V639.23M581 634.23V639.43M577.02 639.7L579.68 636.3" stroke="#ffffff" stroke-width="1.06" fill="none"/>
<text transform="translate(582.93,636.3)" y="3.06" font-size="8.5" fill="#ffffff" stroke="#ffffff" stroke-width="0.25" text-anchor="start" textLength="6.12" lengthAdjust="spacingAndGlyphs">", </text>
<path d="M590.92 634.03H594.52M589.78 636.3H594.57M589.82 638.57H594.25M590.8 633.57V638.41M593.45 633.59V638.89M589.48 639.7L592.13 636.3M596.06 634.03H599.22M595.78 636.3H599.13M596.22 638.57H599.6M596.71 633.55V639.24M599.36 633.13V638.19M595.38 639.7L598.03 636.3M602.1 633.75H605.64M601.5 635.45H605.56M602.85 637.15H605.36M601.71 638.85H605.52M602.17 634.17V639.38M603.94 634.54V639.54M605.7 633.09V639.2M601.28 639.7L603.94 636.3M608.76 633.75H611.18M608.44 635.45H611.41M608.3 637.15H612.41M608.37 638.85H611.59M608.51 634.02V638.73M611.17 632.94V638.74M613.4 634.6H617.62M613.96 638H617.11M613.98 633.67V638.26M615.74 633.42V638.02M617.51 634.2V639.02M620.12 633.75H623.11M620.51 635.45H622.94M619.96 637.15H623.17M619.51 638.85H623.86M619.88 633.94V639.3M621.65 634.22V639.56M623.42 633.55V638.72M625.29 634.03H629.94M625.9 636.3H629.16M625.71 638.57H629.92M625.78 634.39V639.51M627.55 633.2V639.29M629.32 633.77V638.89M632.23 633.75H635.36M630.87 635.45H634.79M630.83 637.15H635.6M631.03 638.85H635.15M631.69 634.23V639.48M633.46 633.4V638.25M635.22 634.07V639.52M637.57 634.03H641.54M636.99 636.3H641.3M637.42 638.57H641.72M638.03 633.42V639.47M640.69 633.45V639.29M636.71 639.7L639.36 636.3M643.58 634.6H647.19M643.8 638H647.77M643.5 634.18V638.76M645.26 633.97V638.22M647.03 633.86V638.66M642.61 639.7L645.26 636.3M649.89 634.03H653.79M648.67 636.3H653.53M650.01 638.57H653.15M649.4 634.51V639.26M651.17 632.99V638.43M652.94 633.36V639.49M648.52 639.7L651.17 636.3M655.89 633.75H659M655.46 635.45H659.65M654.9 637.15H658.6M654.58 638.85H659.22M655.75 632.99V638.49M658.4 633.8V638.54M654.42 639.7L657.07 636.3M661.04 633.75H665.41M660.44 635.45H664.25M661.32 637.15H664.52M661.37 638.85H664.94M661.21 632.97V638.12M662.98 633.38V638.14M664.74 633.21V638.15" stroke="#ffffff" stroke-width="1.06" fill="none"/>
</g>
<g transform="translate(464,0) scale(1.1733,1) translate(-464,0)">
<text transform="translate(464,648)" y="3.06" font-size="8.5" fill="#ffffff" stroke="#ffffff" stroke-width="0.25" text-anchor="start" textLength="44.54" lengthAdjust="spacingAndGlyphs">"HG20583-1998"</text>
<path d="M508.68 646.3H513.6M509.59 649.7H512.8M509.84 645.97V650.22M512.49 646.18V651.31M508.52 651.4L511.17 648M515.02 646.3H518.32M514.66 649.7H518.37M515.75 646.06V650.11M518.4 645.58V649.75M521.41 646.3H525.14M521.49 649.7H524.85M521.65 645.96V650.78M524.3 646.1V650.24M520.32 651.4L522.98 648M527.76 645.45H531.52M527.66 647.15H530.4M527.01 648.85H530.18M526.46 650.55H530.99M527.11 645.81V650M528.88 645.23V649.71M530.65 645.7V651.32M526.23 651.4L528.88 648M533.04 646.3H536.92M532.55 649.7H536.72M533.46 644.73V649.85M536.11 646.02V650.45M532.13 651.4L534.78 648" stroke="#ffffff" stroke-width="1.06" fill="none"/>
<text transform="translate(538.04,648)" y="3.06" font-size="8.5" fill="#ffffff" stroke="#ffffff" stroke-width="0.25" text-anchor="start" textLength="4.08" lengthAdjust="spacingAndGlyphs">. </text>
<path d="M543.34 645.73H546.52M544.14 648H547.53M543.25 650.27H547.21M543.45 645.47V650.19M545.22 645.52V649.84M546.99 645.73V651.05M542.57 651.4L545.22 648M549.02 646.3H553.14M548.93 649.7H553.75M549.8 645.31V649.84M552.45 645.94V650.74M555.13 645.45H558.94M554.83 647.15H559.62M555.12 648.85H558.7M554.67 650.55H558.31M555.7 646.09V649.95M558.35 645.99V650.57M554.38 651.4L557.03 648M561.45 645.73H564.02M560.46 648H565.57M560.84 650.27H565.03M561.16 645.62V651.21M562.93 646.03V650.83M564.7 646.14V650.84M560.28 651.4L562.93 648M567.12 646.3H570.17M566.28 649.7H570.62M567.51 645.85V649.73M570.16 646.19V651.22M566.18 651.4L568.84 648M573.61 645.73H576.99M572.13 648H575.89M572.51 650.27H576.5M572.97 645.21V650.42M574.74 646.19V649.79M576.51 646.09V650.96M578.65 646.3H581.79M578.4 649.7H582.71M578.88 645.59V651M580.64 645.8V650.29M582.41 644.76V649.84M577.99 651.4L580.64 648M584.45 645.45H588.97M584.02 647.15H587.61M585.17 648.85H588.47M585.16 650.55H587.66M584.78 646.17V650.49M586.55 645.07V650.52M588.32 646.27V650.16M590.79 645.73H594.19M591.1 648H594.97M591.36 650.27H594.24M590.68 646.06V651.3M592.45 645.96V649.99M594.22 645.18V650.71" stroke="#ffffff" stroke-width="1.06" fill="none"/>
<text transform="translate(595.7,648)" y="3.06" font-size="8.5" fill="#ffffff" stroke="#ffffff" stroke-width="0.25" text-anchor="start" textLength="4.08" lengthAdjust="spacingAndGlyphs">. </text>
<path d="M600.54 645.73H604.45M601.55 648H604.67M600.44 650.27H604.84M601.12 645.61V650.25M602.89 645.82V650.19M604.66 646.27V651.35M606.24 645.73H611.02M606.52 648H611.28M606.86 650.27H609.96M607.47 645.69V651.01M610.12 644.99V651.23M612.74 646.3H615.76M613.53 649.7H616.08M612.93 645.4V651.13M614.7 645.25V650.64M616.46 645.51V650.24M612.04 651.4L614.7 648M618.12 645.45H622.06M619.01 647.15H622.66M618.15 648.85H622.28M619.15 650.55H622.5M618.83 645.4V650.23M620.6 645.64V650.68M622.37 644.92V650.61M624.37 645.45H628.8M624.86 647.15H627.98M624.25 648.85H628.06M625.44 650.55H628.53M625.18 646.2V650.66M627.83 645.71V649.93M623.85 651.4L626.5 648M629.86 645.73H634.57M630.51 648H633.87M630.76 650.27H633.58M630.64 645.74V651.4M632.41 644.72V651.34M634.18 645.33V651.35" stroke="#ffffff" stroke-width="1.06" fill="none"/>
<text transform="translate(635.66,648)" y="3.06" font-size="8.5" fill="#ffffff" stroke="#ffffff" stroke-width="0.25" text-anchor="start" textLength="4.08" lengthAdjust="spacingAndGlyphs">. </text>
<path d="M640.51 645.45H644.13M640.85 647.15H643.97M640.76 648.85H644.51M641.05 650.55H645.08M641.52 645.93V651.39M644.17 645.02V650.85M646.15 645.45H650.92M647.07 647.15H650.11M646.27 648.85H650.16M646.72 650.55H650.57M647.42 645.32V650.65M650.07 646.28V649.84M652.23 645.45H657.25M653.32 647.15H656.23M653 648.85H656.81M652.43 650.55H655.84M652.88 645.5V651.37M654.65 645.18V650.81M656.42 644.71V649.74M659.27 646.3H661.95M658.67 649.7H661.88M658.79 644.76V649.9M660.56 645.06V650.74M662.32 646.09V650.5M665.17 646.3H668.92M664.33 649.7H669.11M664.69 646.27V650.69M666.46 645.91V650.04M668.23 645.59V649.72M669.84 645.45H673.82M670.07 647.15H674.5M670.26 648.85H673.44M669.81 650.55H674.32M671.04 644.82V649.7M673.69 645.44V650.21M677.18 646.3H680.59M676.33 649.7H679.43M676.5 644.99V651.33M678.27 645.18V650.74M680.04 644.99V649.82M675.62 651.4L678.27 648M681.69 646.3H685.96M682.29 649.7H685.45M682.85 644.75V650.22M685.5 644.65V651.34M681.52 651.4L684.17 648M688.41 645.45H692.06M687.8 647.15H692.18M688.45 648.85H692.19M688.15 650.55H691.14M688.75 645.36V649.76M691.4 645.39V649.94M687.42 651.4L690.08 648M693.81 646.3H697.19M694.39 649.7H697.71M694.21 645.94V650.46M695.98 645.7V650.15M697.75 645.52V650.16M693.33 651.4L695.98 648" stroke="#ffffff" stroke-width="1.06" fill="none"/>
</g>
<g transform="translate(459,0) scale(1.3238,1) translate(-459,0)">
<text transform="translate(459,658.7)" y="3.06" font-size="8.5" fill="#ffffff" stroke="#ffffff" stroke-width="0.25" text-anchor="start" textLength="7.48" lengthAdjust="spacingAndGlyphs">3. </text>
<path d="M468.24 657H471.94M467.15 660.4H471.33M468.22 655.92V660.71M470.87 656.12V660.72M473.46 656.43H477.53M473.31 658.7H478.07M474.13 660.97H476.93M474.12 656.14V662.1M476.77 655.7V660.57M472.8 662.1L475.45 658.7M480.12 657H483.81M479.5 660.4H483.11M479.58 655.5V661.56M481.35 656.35V660.96M483.12 656.37V661.05M478.7 662.1L481.35 658.7M484.92 657H488.99M485.95 660.4H489.43M485.93 656.81V661.9M488.58 656.06V661.9M492 656.43H495.4M491.42 658.7H494.74M490.88 660.97H495.2M491.39 655.47V660.75M493.16 655.61V661.87M494.93 655.77V661.01M497.2 656.15H500.2M496.74 657.85H501.42M497.03 659.55H500.97M497.52 661.25H501.21M497.74 656.42V660.44M500.39 655.41V660.52M496.41 662.1L499.06 658.7" stroke="#ffffff" stroke-width="1.06" fill="none"/>
<text transform="translate(502.32,658.7)" y="3.06" font-size="8.5" fill="#ffffff" stroke="#ffffff" stroke-width="0.25" text-anchor="start" textLength="4.08" lengthAdjust="spacingAndGlyphs">. </text>
<path d="M507.76 656.15H510.63M508.05 657.85H511.98M507.44 659.55H510.66M507.52 661.25H510.62M508.17 655.94V660.86M510.83 656.26V661.15M513.98 656.15H517.2M513.89 657.85H517.04M514.28 659.55H516.51M513.96 661.25H517.71M514.08 656.27V661.35M516.73 655.69V660.77M512.75 662.1L515.4 658.7M519.43 656.15H523.28M519.78 657.85H522.81M520.23 659.55H522.37M519.93 661.25H523.54M519.98 656.44V661.26M522.63 656.9V661.34M518.66 662.1L521.31 658.7M524.82 657H528.54M525.04 660.4H529.09M525.44 655.43V660.6M527.21 656.05V660.45M528.98 656.11V661.63M524.56 662.1L527.21 658.7" stroke="#ffffff" stroke-width="1.06" fill="none"/>
<text transform="translate(530.46,658.7)" y="3.06" font-size="8.5" fill="#ffffff" stroke="#ffffff" stroke-width="0.25" text-anchor="start" textLength="17.68" lengthAdjust="spacingAndGlyphs">E308, </text>
<path d="M549.17 656.15H552.74M548.57 657.85H553.16M548.68 659.55H552.5M548.95 661.25H553.08M549.76 656.33V660.71M552.41 655.55V660.46M554.87 657H559.44M555.24 660.4H558.71M555.22 656.18V662.03M556.99 656.31V660.68M558.76 655.7V660.93M561.68 657H565.06M560.91 660.4H564.77M561.57 655.94V661.24M564.22 655.64V661.22M560.24 662.1L562.9 658.7M566.43 656.43H570.27M567.02 658.7H569.94M566.89 660.97H570.07M567.03 656.98V661.24M568.8 656.47V661.67M570.57 655.42V660.8M566.15 662.1L568.8 658.7M572.8 656.43H575.94M572.81 658.7H576.95M572.29 660.97H576.57M573.38 655.38V661.82M576.03 656.79V661.12M578.72 657H582.51M578.13 660.4H582.84M579.28 656.87V660.87M581.93 656.17V661.06" stroke="#ffffff" stroke-width="1.06" fill="none"/>
<text transform="translate(583.86,658.7)" y="3.06" font-size="8.5" fill="#ffffff" stroke="#ffffff" stroke-width="0.25" text-anchor="start" textLength="21.08" lengthAdjust="spacingAndGlyphs">E5015, </text>
<path d="M605.59 656.43H609.48M606.64 658.7H609.47M606.17 660.97H609.04M606.52 656.92V661.87M609.17 655.32V661.74M611.55 656.43H614.92M611.18 658.7H615.89M611.83 660.97H616.03M611.98 655.73V661.83M613.75 656.63V660.62M615.52 655.49V661.68M617.27 657H621.8M617.52 660.4H621.7M617.88 655.61V661.84M619.65 656.92V661.41M621.42 656.61V661.28M617 662.1L619.65 658.7M624.49 657H627.95M624.08 660.4H628.04M623.79 655.7V661.55M625.56 656.41V660.79M627.32 656.94V661.21M622.9 662.1L625.56 658.7M630.11 656.15H633.91M629.62 657.85H633.36M630 659.55H632.78M628.96 661.25H633.59M630.13 655.45V661.42M632.79 655.87V661.7M636.25 656.15H638.64M634.91 657.85H638.76M635.92 659.55H639.26M636.3 661.25H639.06M636.04 655.5V661.73M638.69 655.52V661.06M642.14 656.15H645.8M640.9 657.85H645.01M640.95 659.55H644.46M640.77 661.25H645.38M641.94 655.71V660.43M644.59 656.71V661.79M640.62 662.1L643.27 658.7M646.7 656.43H651.47M647.56 658.7H651.7M646.69 660.97H651.42M647.85 656.65V661.17M650.5 655.91V660.46M653.32 657H656.37M653.01 660.4H657.04M653.75 656.28V660.42M656.4 656.39V661.79" stroke="#ffffff" stroke-width="1.06" fill="none"/>
<text transform="translate(658.33,658.7)" y="3.06" font-size="8.5" fill="#ffffff" stroke="#ffffff" stroke-width="0.25" text-anchor="start" textLength="18.7" lengthAdjust="spacingAndGlyphs">E4315,</text>
</g>
<g transform="translate(464,0) scale(1.1371,1) translate(-464,0)">
<path d="M464.02 668.23H469.06M465.38 670.5H468.89M464.85 672.77H468.51M464.88 668.57V672.35M466.65 667.26V673.71M468.42 667.32V673.85M470.29 668.23H474.68M470.12 670.5H474.73M470.99 672.77H474.62M470.79 667.63V672.9M472.56 668.16V673.86M474.32 668.6V673.39M476.06 668.23H480.53M477.06 670.5H480.03M476.74 672.77H480.95M476.69 667.47V673.46M478.46 667.15V672.81M480.23 668.07V672.33M481.74 668.23H486.46M481.76 670.5H486.93M483.22 672.77H486.39M482.6 667.65V672.27M484.36 667.25V673.87M486.13 668.03V673.29M481.71 673.9L484.36 670.5M488.24 668.8H492.33M488.22 672.2H492.76M488.94 668.15V673.83M491.59 667.75V673.02M487.62 673.9L490.27 670.5M494.07 668.8H497.74M493.66 672.2H497.59M494.85 667.43V672.47M497.5 668.8V672.35" stroke="#ffffff" stroke-width="1.06" fill="none"/>
<text transform="translate(499.42,670.5)" y="3.06" font-size="8.5" fill="#ffffff" stroke="#ffffff" stroke-width="0.25" text-anchor="start" textLength="21.08" lengthAdjust="spacingAndGlyphs">E4303. </text>
<path d="M521.49 668.8H524.77M521.3 672.2H525.83M521.64 668.57V672.7M523.41 667.11V673.79M525.18 668.05V672.28M526.95 668.8H531.44M526.9 672.2H531.23M527.54 667.18V672.78M529.31 668.2V672.36M531.08 668.41V673.77M534.05 667.95H537.09M532.69 669.65H536.75M532.84 671.35H536.3M533.42 673.05H536.43M533.45 667.94V673.35M535.22 668.23V672.69M536.98 667.88V673.43M532.56 673.9L535.22 670.5M538.72 667.95H543.3M539.05 669.65H543.17M539.68 671.35H543.01M538.56 673.05H542.38M539.79 668.18V673.72M542.45 667.26V673.65M545.96 668.23H548.16M545.05 670.5H548.4M544.7 672.77H548.75M545.7 667.22V673.1M548.35 668.23V673.4M544.37 673.9L547.02 670.5" stroke="#ffffff" stroke-width="1.06" fill="none"/>
<text transform="translate(550.28,670.5)" y="3.06" font-size="8.5" fill="#ffffff" stroke="#ffffff" stroke-width="0.25" text-anchor="start" textLength="22.78" lengthAdjust="spacingAndGlyphs">H10Mn2,</text>
<path d="M574.07 667.95H577.98M574.17 669.65H578.56M573.85 671.35H578.53M574.87 673.05H577.15M574.17 668.21V673.63M575.94 668.55V673.42M577.71 668.47V672.79M579.66 667.95H583.2M580.52 669.65H583.15M579.55 671.35H584.48M579.78 673.05H583.61M580.08 668.4V672.93M581.84 667.55V673.16M583.61 667.97V673.14M579.19 673.9L581.84 670.5M585.95 668.8H589.61M585.51 672.2H590.05M586.42 668.24V673.32M589.07 668.69V672.37" stroke="#ffffff" stroke-width="1.06" fill="none"/>
<text transform="translate(591,670.5)" y="3.06" font-size="8.5" fill="#ffffff" stroke="#ffffff" stroke-width="0.25" text-anchor="start" textLength="18.7" lengthAdjust="spacingAndGlyphs">HJ431.</text>
</g>
<g transform="translate(459,0) scale(1.1040,1) translate(-459,0)">
<text transform="translate(459,680)" y="3.06" font-size="8.5" fill="#ffffff" stroke="#ffffff" stroke-width="0.25" text-anchor="start" textLength="7.48" lengthAdjust="spacingAndGlyphs">4. </text>
<path d="M467.06 677.73H471.62M467.01 680H471.4M468.41 682.27H470.98M468.22 677.22V682.93M470.87 678.18V683.31M473.88 678.3H477M473.14 681.7H476.53M474.12 677.13V682.77M476.77 677.94V682.78M479.95 678.3H483.12M479.86 681.7H483.08M480.03 677.44V683.08M482.68 677.82V682.55M485.52 678.3H489.58M485.11 681.7H489.09M485.93 677.48V683.18M488.58 678.07V682.77M491.65 678.3H494.94M491.82 681.7H494.53M491.39 677.67V682.26M493.16 676.9V682.82M494.93 677.15V681.94M497.99 677.73H501.62M496.51 680H501.19M496.53 682.27H500.2M497.3 677.21V682.74M499.06 678.05V682.49M500.83 677.67V682.65M496.41 683.4L499.06 680M503.36 677.45H506.52M503.91 679.15H507.29M503.16 680.85H507.48M502.96 682.55H507.55M503.2 677.29V681.86M504.97 678.06V682.2M506.74 678.26V682.47M508.39 677.45H512.79M509.35 679.15H513M509.5 680.85H512.17M508.32 682.55H512.71M509.1 677.8V682.07M510.87 678.17V683.07M512.64 677.19V682.81M515.59 678.3H519.09M514.98 681.7H519.24M515.01 678.12V682.56M516.78 677.68V682.84M518.54 676.98V682.41M514.12 683.4L516.78 680M520.7 677.45H524.86M520.79 679.15H524.78M521 680.85H523.92M521.23 682.55H524.96M520.91 678.03V682.04M522.68 678.02V682.61M524.45 677.79V682.13M527.01 678.3H530.55M526.9 681.7H530.19M527.26 677.35V683.24M529.91 677.22V681.79M525.93 683.4L528.58 680M531.98 677.45H535.91M533.21 679.15H536.55M532.43 680.85H536.32M532.24 682.55H536.81M533.16 676.82V682.23M535.81 677.47V681.77M539.07 677.73H543M537.95 680H541.49M539.13 682.27H542.06M539.07 677.65V682.66M541.72 677.32V683.15M543.84 677.73H547.56M544.56 680H547.55M544.11 682.27H548.03M544.97 677.07V681.99M547.62 676.96V682.3M549.68 677.73H554.08M550.38 680H553.55M549.87 682.27H554.56M550.87 677.12V682.04M553.53 676.99V682.32M549.55 683.4L552.2 680M556.02 678.3H559.94M555.96 681.7H559.2M556.34 677.8V683.34M558.1 677.78V682.46M559.87 677.26V682.19" stroke="#ffffff" stroke-width="1.06" fill="none"/>
</g>
<g transform="translate(459,0) scale(1.4228,1) translate(-459,0)">
<text transform="translate(459,690.7)" y="3.06" font-size="8.5" fill="#ffffff" stroke="#ffffff" stroke-width="0.25" text-anchor="start" textLength="7.48" lengthAdjust="spacingAndGlyphs">5. </text>
<path d="M468.39 689H470.97M467.94 692.4H470.98M467.78 688.88V694.01M469.54 688.43V693.18M471.31 687.53V692.64M473.41 688.15H476.77M473.15 689.85H476.56M472.98 691.55H477.21M473.49 693.25H477.82M474.12 688V692.76M476.77 688.78V692.43M472.8 694.1L475.45 690.7M479.04 688.43H483.36M478.82 690.7H483.08M479.05 692.97H482.89M480.03 687.6V692.93M482.68 688.35V692.89" stroke="#ffffff" stroke-width="1.06" fill="none"/>
<text transform="translate(484.6,690.7)" y="3.06" font-size="8.5" fill="#ffffff" stroke="#ffffff" stroke-width="0.25" text-anchor="start" textLength="10.88" lengthAdjust="spacingAndGlyphs">A. B</text>
<path d="M496.94 688.43H500.53M497.28 690.7H499.85M497.07 692.97H500.21M496.74 687.74V692.56M498.51 688.95V692.49M500.28 687.87V692.7M503.24 688.15H506.6M502.45 689.85H505.73M502.75 691.55H506.72M503.32 693.25H506.68M502.64 688.33V693.2M504.41 687.52V694.04M506.18 688.3V693.94M501.76 694.1L504.41 690.7M508.92 688.15H512.93M508.24 689.85H511.8M507.84 691.55H512.3M507.96 693.25H512.68M508.55 688.51V692.77M510.32 688.05V693.03M512.08 687.46V693.28M507.66 694.1L510.32 690.7M514.41 688.15H517.67M514.67 689.85H517.92M514.14 691.55H518.13M513.89 693.25H518.64M514.89 688.1V693.75M517.55 688.34V692.44M513.57 694.1L516.22 690.7M520.79 688.43H523.98M519.49 690.7H524.14M520.87 692.97H524.08M520.36 688.1V692.64M522.12 688.57V692.79M523.89 687.66V693.51M525.7 688.43H530.58M525.7 690.7H530.44M526.73 692.97H529.86M526.7 687.37V693.64M529.35 688.17V693.8M525.38 694.1L528.03 690.7M532.61 688.43H536.41M532.33 690.7H536.57M532.23 692.97H535.3M532.61 688.06V693.16M535.26 688.82V693.79" stroke="#ffffff" stroke-width="1.06" fill="none"/>
<text transform="translate(537.18,690.7)" y="3.06" font-size="8.5" fill="#ffffff" stroke="#ffffff" stroke-width="0.25" text-anchor="start" textLength="4.08" lengthAdjust="spacingAndGlyphs">. </text>
<path d="M542.37 688.15H546.88M542.9 689.85H546.78M542.56 691.55H546.96M543.27 693.25H545.8M543.04 688.17V692.58M545.69 687.34V693.2M541.72 694.1L544.37 690.7M548.37 688.43H552.08M548.68 690.7H552.66M548.95 692.97H552.67M548.5 687.83V692.66M550.27 688.97V693.48M552.04 688.92V694.04M553.58 689H557.62M553.78 692.4H557.63M554.85 687.31V693.89M557.5 687.91V693.96M553.52 694.1L556.18 690.7M560.6 688.43H563.95M560.96 690.7H563.39M559.7 692.97H563.27M560.31 688.82V693.14M562.08 688.2V693.81M563.85 687.85V693.73M559.43 694.1L562.08 690.7M565.85 688.15H569.41M566.24 689.85H569.32M565.47 691.55H569.29M566.14 693.25H569.63M566.66 687.71V692.92M569.31 687.99V692.87M571.71 689H575.34M571.26 692.4H575.53M572.56 688.23V692.88M575.21 687.86V693.29M571.24 694.1L573.89 690.7M578.72 688.15H582.2M578.59 689.85H581.33M577.92 691.55H582.19M577.88 693.25H581.46M578.47 688.57V694.09M581.12 688.94V693.65M584.16 688.15H586.82M583.79 689.85H587.14M583.85 691.55H587.46M583.75 693.25H588.08M584.37 688.15V693.88M587.02 687.75V693.91M583.04 694.1L585.7 690.7M590.23 689H593.85M589 692.4H593.39M590.27 687.63V693.43M592.93 688.91V692.54M596.02 688.43H599.09M595.49 690.7H599.36M595.66 692.97H599.81M596.18 687.74V692.66M598.83 688.74V692.91M601.82 688.15H606.05M601.46 689.85H604.52M601.08 691.55H605.32M600.88 693.25H605.65M602.08 688.7V694.04M604.73 688.66V692.74" stroke="#ffffff" stroke-width="1.06" fill="none"/>
<text transform="translate(606.66,690.7)" y="3.06" font-size="8.5" fill="#ffffff" stroke="#ffffff" stroke-width="0.25" text-anchor="start" textLength="14.28" lengthAdjust="spacingAndGlyphs">20%, </text>
<path d="M621.86 688.43H625.86M622.78 690.7H625.71M622.36 692.97H626.4M622.16 687.31V693.65M623.92 687.48V692.7M625.69 687.72V692.47M628.5 689H631.04M628.33 692.4H632.41M628.06 687.45V693.68M629.83 688.76V693.71M631.6 688.77V692.73M627.18 694.1L629.83 690.7M633.23 689H636.93M633.21 692.4H637.5M634.41 687.5V692.97M637.06 687.75V692.83M633.08 694.1L635.73 690.7" stroke="#ffffff" stroke-width="1.06" fill="none"/>
<text transform="translate(638.98,690.7)" y="3.06" font-size="8.5" fill="#ffffff" stroke="#ffffff" stroke-width="0.25" text-anchor="start" textLength="20.06" lengthAdjust="spacingAndGlyphs">250mm,</text>
</g>
<g transform="translate(464,0) scale(1.0698,1) translate(-464,0)">
<path d="M465.2 699.15H468.39M464.08 700.85H468.45M464.81 702.55H468.35M464.47 704.25H467.71M464.88 699.42V703.65M466.65 699.95V703.59M468.42 699.59V704.9M470.36 699.15H474.62M471.06 700.85H474.64M471.13 702.55H475.04M471.3 704.25H474.3M471.23 699.93V704.55M473.88 698.52V703.72" stroke="#ffffff" stroke-width="1.06" fill="none"/>
<text transform="translate(475.81,701.7)" y="3.06" font-size="8.5" fill="#ffffff" stroke="#ffffff" stroke-width="0.25" text-anchor="start" textLength="30.26" lengthAdjust="spacingAndGlyphs">JB4730-94</text>
<path d="M506.66 699.43H510.09M507.22 701.7H510.66M506.26 703.97H511.13M507.1 699.5V705.07M508.86 699.75V704.19M510.63 698.84V704.61M506.21 705.1L508.86 701.7M512.92 700H517.4M512.52 703.4H516.67M513.44 699.46V704.84M516.09 698.51V704.54M512.12 705.1L514.77 701.7M519.41 700H521.91M518.97 703.4H522.37M519.35 699.14V704.7M522 699.34V704.91M518.02 705.1L520.67 701.7M524.12 699.43H528.65M524.13 701.7H527.94M525.04 703.97H528.3M525.25 699.02V703.75M527.9 699.58V704.6M523.92 705.1L526.58 701.7M531.36 699.43H534.52M531.4 701.7H534.09M531.13 703.97H534.86M530.71 698.87V704.05M532.48 699.96V704.75M534.25 699.31V703.84M536.08 699.43H539.75M536.46 701.7H540.41M536.79 703.97H539.73M536.62 698.56V704.2M538.38 699.5V703.89M540.15 698.4V703.56M542.46 699.43H545.69M542.72 701.7H546.75M542.05 703.97H546.44M542.96 698.9V704.27M545.61 698.8V703.4M547.79 699.43H551.84M549.07 701.7H552.25M548.94 703.97H551.57M548.42 698.84V704.85M550.19 699.67V704.39M551.96 698.9V704.31M553.72 699.43H558.16M553.45 701.7H558.43M553.99 703.97H558.47M554.33 699.11V704.88M556.1 699.41V704.4M557.86 698.72V703.93M553.44 705.1L556.1 701.7" stroke="#ffffff" stroke-width="1.06" fill="none"/>
</g>
<g transform="translate(459,0) scale(1.2695,1) translate(-459,0)">
<text transform="translate(459,713)" y="3.06" font-size="8.5" fill="#ffffff" stroke="#ffffff" stroke-width="0.25" text-anchor="start" textLength="7.48" lengthAdjust="spacingAndGlyphs">6. </text>
<path d="M468.09 711.3H470.8M467.36 714.7H471.78M468.22 710.78V716.15M470.87 711.24V715.29M473.25 711.3H477.43M474.36 714.7H477.87M474.12 710.61V716.27M476.77 711.25V715.13M478.99 710.45H483.62M478.76 712.15H483.13M478.83 713.85H483.7M478.98 715.55H482.54M480.03 710.94V715.91M482.68 711.25V716.13M478.7 716.4L481.35 713M484.76 710.73H488.65M485.47 713H488.64M485.14 715.27H489.84M485.49 709.77V715.17M487.26 710.46V715.1M489.02 709.94V715.93M484.6 716.4L487.26 713M490.75 710.45H494.66M490.57 712.15H495.07M490.92 713.85H494.6M491.65 715.55H494.72M491.83 709.94V716.33M494.49 710.69V715.22M490.51 716.4L493.16 713" stroke="#ffffff" stroke-width="1.06" fill="none"/>
<text transform="translate(496.41,713)" y="3.06" font-size="8.5" fill="#ffffff" stroke="#ffffff" stroke-width="0.25" text-anchor="start" textLength="4.08" lengthAdjust="spacingAndGlyphs">. </text>
<path d="M502.34 710.45H506.04M501.61 712.15H504.69M502.13 713.85H505.52M502.52 715.55H504.71M501.83 709.92V715.56M503.6 709.95V715.03M505.36 709.65V714.94M507.21 711.3H511.33M506.98 714.7H511.81M507.73 709.77V714.87M509.5 710.37V714.84M511.27 710.8V715.55M506.85 716.4L509.5 713" stroke="#ffffff" stroke-width="1.06" fill="none"/>
<text transform="translate(512.75,713)" y="3.06" font-size="8.5" fill="#ffffff" stroke="#ffffff" stroke-width="0.25" text-anchor="start" textLength="19.38" lengthAdjust="spacingAndGlyphs">0.2MPa</text>
<path d="M533.31 711.3H537.06M533.82 714.7H536.65M533.73 710.88V715.43M536.38 710.88V716.17M538.61 710.45H543.47M539.43 712.15H542.46M539.37 713.85H543.21M539.08 715.55H542.39M539.63 710.69V714.85M542.29 709.75V715.08M538.31 716.4L540.96 713M545.06 710.45H549.4M544.88 712.15H548.45M545.59 713.85H549.39M545.02 715.55H548.25M545.1 709.8V714.88M546.86 711.2V715.82M548.63 709.96V716.15M544.21 716.4L546.86 713M551.24 710.73H553.93M551 713H553.9M550.8 715.27H554.37M551.44 709.6V715.69M554.09 709.64V716.18M556.93 711.3H560.81M556.4 714.7H560.5M556.9 709.93V716.07M558.67 709.67V715.42M560.44 710.81V715.04" stroke="#ffffff" stroke-width="1.06" fill="none"/>
<text transform="translate(561.92,713)" y="3.06" font-size="8.5" fill="#ffffff" stroke="#ffffff" stroke-width="0.25" text-anchor="start" textLength="4.08" lengthAdjust="spacingAndGlyphs">. </text>
<path d="M566.58 710.45H570.82M567.33 712.15H571.72M567.08 713.85H571.38M567.28 715.55H570.27M567.78 710.03V716.36M570.43 710.4V715.2M566.46 716.4L569.11 713M572.45 710.45H577.04M573.67 712.15H577.46M572.53 713.85H576.36M573.28 715.55H577.22M573.24 710.28V716.38M575.01 709.7V715.16M576.78 710.01V716.01M578.82 711.3H582.39M578.3 714.7H582.17M579.15 709.76V714.78M580.92 711.21V715.36M582.68 711.03V714.8M578.26 716.4L580.92 713" stroke="#ffffff" stroke-width="1.06" fill="none"/>
<text transform="translate(584.17,713)" y="3.06" font-size="8.5" fill="#ffffff" stroke="#ffffff" stroke-width="0.25" text-anchor="start" textLength="22.78" lengthAdjust="spacingAndGlyphs">0.19MPa</text>
<path d="M607.48 711.3H611.45M607.7 714.7H611.98M608.51 709.62V716.38M611.16 710.27V715.51M607.18 716.4L609.83 713" stroke="#ffffff" stroke-width="1.06" fill="none"/>
<text transform="translate(613.08,713)" y="3.06" font-size="8.5" fill="#ffffff" stroke="#ffffff" stroke-width="0.25" text-anchor="start" textLength="40.46" lengthAdjust="spacingAndGlyphs">HG20584-1998</text>
</g>
<g transform="translate(464,0) scale(1.2285,1) translate(-464,0)">
<path d="M465.54 721.45H468.9M465.3 723.15H467.78M465.07 724.85H468.6M464.67 726.55H468.56M464.88 720.81V727.27M466.65 721.08V727.1M468.42 722.13V726.78M470.69 721.45H475.2M471.33 723.15H474.88M471.27 724.85H474.57M471.42 726.55H474.79M470.79 721.85V727.15M472.56 722.08V726.5M474.32 721.31V726.5M469.9 727.4L472.56 724M476.12 721.45H479.86M476.58 723.15H479.9M477.27 724.85H480.12M476.91 726.55H480.24M476.69 720.82V726.62M478.46 720.71V727.09M480.23 722.27V726.75M475.81 727.4L478.46 724M481.81 721.73H486.05M482.08 724H486.67M482.73 726.27H485.54M482.6 720.62V726.18M484.36 721.59V726.57M486.13 721.32V727.38M481.71 727.4L484.36 724M488.15 721.45H491.34M488.16 723.15H491.57M488.91 724.85H491.66M488.4 726.55H492.13M488.5 722.03V727.2M490.27 720.98V727.38M492.04 721.44V726.63M494.4 721.45H498.71M494.63 723.15H498.26M494.49 724.85H497.85M495.01 726.55H498.13M494.4 721.06V726.78M496.17 720.9V726.06M497.94 721.93V726.86M500.99 721.73H504.59M500.5 724H504.21M499.74 726.27H503.82M500.75 721.91V726.98M503.4 721.96V726.11M499.42 727.4L502.08 724M506.03 722.3H509.96M506.68 725.7H509.7M506.65 720.76V727.17M509.31 721.83V725.78M512.79 722.3H516.21M511.64 725.7H516.23M512.56 721.67V726.39M515.21 721.48V726.08M517.22 721.73H521.67M517.36 724H521.25M517.82 726.27H521.11M518.46 721.74V725.77M521.11 721.59V726.39" stroke="#ffffff" stroke-width="1.06" fill="none"/>
<text transform="translate(523.04,724)" y="3.06" font-size="8.5" fill="#ffffff" stroke="#ffffff" stroke-width="0.25" text-anchor="start" textLength="4.08" lengthAdjust="spacingAndGlyphs">; </text>
<path d="M527.74 721.73H531.41M527.67 724H531.41M529.06 726.27H531.82M528.46 722.21V726.37M530.22 721.87V726.39M531.99 720.98V727.27M533.67 721.73H537.89M533.9 724H538.36M534.87 726.27H537.8M534.36 721.87V726.01M536.13 721.34V726.63M537.9 721.33V726.79" stroke="#ffffff" stroke-width="1.06" fill="none"/>
<text transform="translate(539.38,724)" y="3.06" font-size="8.5" fill="#ffffff" stroke="#ffffff" stroke-width="0.25" text-anchor="start" textLength="22.78" lengthAdjust="spacingAndGlyphs">5.19MPa</text>
<path d="M563.61 721.73H566.63M562.71 724H567.42M562.83 726.27H567.45M563.28 721.38V727.29M565.04 721.8V726.3M566.81 721.83V725.78M562.39 727.4L565.04 724M569.85 722.3H572.56M569.34 725.7H573.36M569.18 721.48V727.23M570.95 721.89V726.45M572.72 722.15V727.24M574.42 721.73H578M574.6 724H579.07M574.47 726.27H577.96M575.53 721.41V726.57M578.18 721.43V726.37" stroke="#ffffff" stroke-width="1.06" fill="none"/>
<text transform="translate(580.1,724)" y="3.06" font-size="8.5" fill="#ffffff" stroke="#ffffff" stroke-width="0.25" text-anchor="start" textLength="4.08" lengthAdjust="spacingAndGlyphs">. </text>
<path d="M585.49 721.73H588.6M585.66 724H588.44M585.72 726.27H588.48M585.52 720.8V726M587.29 721.14V725.83M589.06 721.95V725.76M591.37 721.73H594.6M590.63 724H594.99M591.44 726.27H594.7M591.87 721.18V726.37M594.52 721.85V726.75M596.7 722.3H600.73M597.05 725.7H600.52M597.33 721.88V726.73M599.1 721.65V726.6M600.86 721.18V727.01M596.44 727.4L599.1 724" stroke="#ffffff" stroke-width="1.06" fill="none"/>
<text transform="translate(602.35,724)" y="3.06" font-size="8.5" fill="#ffffff" stroke="#ffffff" stroke-width="0.25" text-anchor="start" textLength="22.78" lengthAdjust="spacingAndGlyphs">4.35MPa</text>
<path d="M626.86 722.3H630.24M626.37 725.7H629.36M626.24 721.09V727.05M628.01 722.09V726.86M629.78 720.72V726.23M631.63 722.3H636.35M632.73 725.7H636.05M632.59 721.14V727.16M635.24 721.07V726.26M631.26 727.4L633.92 724M638.02 721.45H641.98M637.78 723.15H641.45M637.2 724.85H641.69M638.14 726.55H641.68M638.05 720.88V726.4M639.82 721.83V725.71M641.59 720.79V726.61M637.17 727.4L639.82 724M643.54 721.73H647.75M644.06 724H647.62M643.18 726.27H648.3M644.4 721.6V727.13M647.05 721.27V726.78M643.07 727.4L645.72 724M650.31 721.45H653.35M649.82 723.15H652.7M650.05 724.85H654.25M649.67 726.55H653.51M649.86 720.84V727.01M651.63 721.39V726.2M653.4 721.76V727.28M655.85 722.3H658.78M656.29 725.7H659.96M655.76 720.88V725.87M657.53 721.79V726.1M659.3 720.71V726.35M654.88 727.4L657.53 724M662.05 721.45H665.58M660.79 723.15H664.92M662.37 724.85H665.1M661.37 726.55H665.56M661.67 721.98V725.75M663.44 721.22V727.02M665.2 722.29V726.67M660.78 727.4L663.44 724" stroke="#ffffff" stroke-width="1.06" fill="none"/>
</g>
<g transform="translate(459,0) scale(1.0712,1) translate(-459,0)">
<text transform="translate(459,735)" y="3.06" font-size="8.5" fill="#ffffff" stroke="#ffffff" stroke-width="0.25" text-anchor="start" textLength="7.48" lengthAdjust="spacingAndGlyphs">7. </text>
<path d="M468.46 732.73H471.45M468.25 735H471.56M467.56 737.27H470.92M468.22 733.25V737.12M470.87 732.8V736.99M473.08 732.45H477.56M473.29 734.15H476.86M473.04 735.85H478.04M473.52 737.55H477.64M473.68 732.8V737.06M475.45 731.61V737.05M477.22 732.18V737.04M472.8 738.4L475.45 735M479.9 732.45H483.75M479.38 734.15H483.5M479.61 735.85H482.92M480.12 737.55H483.24M479.58 732.59V738.04M481.35 732.76V737M483.12 731.61V737.22M486.12 733.3H488.54M486.03 736.7H489M485.49 732.88V737.92M487.26 732.48V736.83M489.02 732.95V738.04M484.6 738.4L487.26 735M491.71 732.73H495.14M490.7 735H494.45M491.9 737.27H494.66M491.83 731.97V737.55M494.49 732.47V737.78M490.51 738.4L493.16 735" stroke="#ffffff" stroke-width="1.06" fill="none"/>
<text transform="translate(496.41,735)" y="3.06" font-size="8.5" fill="#ffffff" stroke="#ffffff" stroke-width="0.25" text-anchor="start" textLength="4.08" lengthAdjust="spacingAndGlyphs">, </text>
<path d="M502.5 732.73H505.25M502.5 735H504.8M501.23 737.27H505.02M501.83 732.25V737.38M503.6 732.56V737.14M505.36 732.11V737.25M500.94 738.4L503.6 735M507.29 732.73H512.14M508.27 735H511.32M507.88 737.27H510.83M508.17 733.11V737.74M510.83 733.28V737.74M514.04 733.3H517.6M514.22 736.7H517.81M513.64 731.95V737.27M515.4 731.91V738.26M517.17 732.95V737.54M520.09 733.3H522.71M519.87 736.7H523.76M519.54 732.5V737.55M521.31 732.84V737.28M523.08 733.26V737.11M524.64 732.73H529.78M525.71 735H528.91M526.13 737.27H528.36M525.89 731.92V737.31M528.54 731.93V737.4M524.56 738.4L527.21 735" stroke="#ffffff" stroke-width="1.06" fill="none"/>
<text transform="translate(530.46,735)" y="3.06" font-size="8.5" fill="#ffffff" stroke="#ffffff" stroke-width="0.25" text-anchor="start" textLength="4.08" lengthAdjust="spacingAndGlyphs">, </text>
<path d="M536.09 732.45H539.43M536.44 734.15H540.29M536.54 735.85H539.32M535.64 737.55H538.86M535.88 733.12V737.39M537.65 731.62V737.34M539.42 732.3V737.42M542.24 733.3H545.71M541.3 736.7H546.14M541.78 731.78V737.94M543.55 732.5V736.8M545.32 731.89V737.91M540.9 738.4L543.55 735M547.37 732.45H551.04M547.04 734.15H552.04M547.73 735.85H550.96M547.02 737.55H552.03M547.69 732.74V738.29M549.46 733.17V737.23M551.22 731.87V737.7M546.8 738.4L549.46 735M554.1 733.3H557.96M554.2 736.7H556.47M553.59 732.37V737.86M555.36 732.46V736.81M557.13 733.28V736.82" stroke="#ffffff" stroke-width="1.06" fill="none"/>
<text transform="translate(558.61,735)" y="3.06" font-size="8.5" fill="#ffffff" stroke="#ffffff" stroke-width="0.25" text-anchor="start" textLength="47.26" lengthAdjust="spacingAndGlyphs">"JB/T4711-2003"</text>
<path d="M606.36 732.73H610.43M606.46 735H610.79M606.38 737.27H609.86M606.7 731.92V737.59M608.47 732.08V737.42M610.24 732.91V738.2M605.82 738.4L608.47 735M612.75 733.3H615.95M612.07 736.7H616.66M613.05 732.12V737.84M615.7 733.12V736.91M618.77 732.73H621.77M618.62 735H622.15M618.87 737.27H622.09M618.51 732.9V737.22M620.28 732.49V737.42M622.04 731.92V737.32M617.62 738.4L620.28 735" stroke="#ffffff" stroke-width="1.06" fill="none"/>
<text transform="translate(623.53,735)" y="3.06" font-size="8.5" fill="#ffffff" stroke="#ffffff" stroke-width="0.25" text-anchor="start" textLength="4.08" lengthAdjust="spacingAndGlyphs">. </text>
<path d="M629.24 732.45H632.95M628.46 734.15H632.41M628.14 735.85H631.87M629.21 737.55H632.58M628.94 732.21V738.27M630.71 732.54V737.09M632.48 731.8V738.23M634.62 732.73H637.7M635.35 735H638.76M634.82 737.27H638.33M634.85 732.37V737.01M636.62 732.8V737.01M638.38 732.03V737.54M640.23 732.45H644.87M641.16 734.15H645.03M640.07 735.85H644.22M640.05 737.55H644.83M641.19 732.82V737.39M643.85 731.73V736.84M646.98 732.73H650.92M647.13 735H649.52M646.27 737.27H650.53M647.1 732.46V736.94M649.75 732.88V737.78M653.02 733.3H655.47M653.27 736.7H655.7M653 731.8V737.53M655.65 733.29V737.34M658.61 733.3H661.68M658.35 736.7H661.47M658.91 731.85V737.18M661.56 733.14V736.87M664.3 732.73H667.44M664.09 735H668.38M663.53 737.27H668.46M664.81 731.84V736.82M667.46 732.13V737.8M670.08 732.45H674.52M669.97 734.15H674.23M670.9 735.85H674.02M670.94 737.55H674.26M670.71 731.68V736.87M673.37 731.73V737.06M676.62 732.73H679.91M676.86 735H679.71M676.79 737.27H679.12M676.18 732.24V737.22M677.94 732.84V737.29M679.71 731.64V737.23M681.83 733.3H686.01M682.53 736.7H686M682.52 732.25V738.04M685.17 732.91V736.93M681.2 738.4L683.85 735M688.52 732.73H691.89M687.14 735H691.35M688.19 737.27H691.37M687.98 732.97V737.02M689.75 732.66V737M691.52 731.81V736.79M693.27 733.3H697.29M693.49 736.7H696.82M693.89 732.07V737.57M695.66 732.46V736.8M697.42 732.12V736.88" stroke="#ffffff" stroke-width="1.06" fill="none"/>
</g>
<g transform="translate(464,0) scale(1.0976,1) translate(-464,0)">
<path d="M465.41 743.45H468.11M464.87 745.15H469.23M464.35 746.85H468.27M464.19 748.55H468.28M464.88 743.19V748.74M466.65 744V747.97M468.42 743.87V748.64M470.8 743.45H474M471.07 745.15H474.07M470.48 746.85H474.01M470.63 748.55H475.03M471.23 742.84V747.77M473.88 743.73V748.18M476.9 743.73H480.26M476.49 746H480.07M476.61 748.27H480.46M476.69 742.82V749.27M478.46 743.72V747.78M480.23 743.53V748.48M475.81 749.4L478.46 746" stroke="#ffffff" stroke-width="1.06" fill="none"/>
<text transform="translate(481.71,746)" y="3.06" font-size="8.5" fill="#ffffff" stroke="#ffffff" stroke-width="0.25" text-anchor="start" textLength="4.08" lengthAdjust="spacingAndGlyphs">, </text>
<path d="M486.94 744.3H490.39M486.48 747.7H490.71M487.57 742.93V748.1M490.22 743.48V748.74M492.78 743.45H496.07M493.23 745.15H496.16M492.77 746.85H496.08M493.09 748.55H496.62M493.03 744.13V747.72M494.8 744.18V748.35M496.57 743.93V748.19M492.15 749.4L494.8 746M498.72 743.73H501.94M498.68 746H502.84M499.31 748.27H503.13M499.38 743.04V748.81M502.03 744.3V748.51M498.05 749.4L500.7 746M504.89 743.73H508.14M504.73 746H508.64M505.16 748.27H508.29M505.28 743.89V748.93M507.93 742.92V748.54M503.96 749.4L506.61 746M509.98 744.3H514.5M510.4 747.7H514.64M510.74 742.76V747.84M512.51 743.95V748.96M514.28 742.85V747.75M516.35 743.45H520.13M515.96 745.15H519.6M517.33 746.85H519.68M516.44 748.55H520.4M517.09 743.58V748.61M519.74 744.07V748.1M522.85 743.45H525.46M522.06 745.15H525.87M522.95 746.85H526.55M523.1 748.55H526.47M522.99 744.23V748.41M525.65 744.25V747.9M528.3 743.73H531.94M528.85 746H532.21M529 748.27H532.53M528.46 743.49V749.15M530.22 742.89V748.91M531.99 742.68V748.43M534.23 743.73H537.28M534.71 746H537.9M534.05 748.27H538.61M534.8 742.85V748.81M537.45 743.42V747.88M533.48 749.4L536.13 746M540.01 743.45H543.11M540.59 745.15H544.24M539.9 746.85H543.85M540.73 748.55H544.53M540.71 744.11V748.26M543.36 743.61V748.71M539.38 749.4L542.03 746M545.99 743.73H549.45M546.68 746H550.45M545.31 748.27H549.09M546.17 742.93V748.02M547.94 743.29V749.02M549.7 742.62V748.67" stroke="#ffffff" stroke-width="1.06" fill="none"/>
<text transform="translate(551.19,746)" y="3.06" font-size="8.5" fill="#ffffff" stroke="#ffffff" stroke-width="0.25" text-anchor="start" textLength="4.08" lengthAdjust="spacingAndGlyphs">, </text>
<path d="M555.74 744.3H560.57M557.12 747.7H559.83M557.05 743.04V748.71M559.7 743.31V748.2M555.72 749.4L558.37 746M562.43 743.73H566.55M562.31 746H565.74M562.43 748.27H566.84M562.51 743.19V748.43M564.28 742.99V748.74M566.04 743.55V748.78M561.62 749.4L564.28 746M567.95 744.3H572.46M568.81 747.7H571.31M568.85 742.93V748.02M571.51 742.94V748.13M573.55 743.73H577.15M574.48 746H578.18M574.17 748.27H577.84M574.76 743.84V748.99M577.41 743.12V748.72M580.14 743.45H583.92M580.65 745.15H583.47M580.09 746.85H584.53M580.12 748.55H583.97M580.22 743.49V748.72M581.99 743.42V748.67M583.76 743.76V748.82M579.34 749.4L581.99 746M586.02 743.45H589.84M585.29 745.15H590.18M586.43 746.85H589.81M586.64 748.55H589.26M586.12 743.51V747.73M587.89 742.6V748.72M589.66 743.51V749.31M592.07 744.3H596.02M591.75 747.7H595.71M592.47 743.09V749.11M595.12 743.73V748.34M591.14 749.4L593.8 746M598.54 743.73H602.34M597.05 746H601.17M598.48 748.27H601.8M598.37 742.77V749.24M601.03 743.99V748.48M597.05 749.4L599.7 746M603.72 743.73H608.15M603.52 746H606.96M603.64 748.27H607.63M604.28 743.69V749.33M606.93 743.7V748.23M602.95 749.4L605.6 746" stroke="#ffffff" stroke-width="1.06" fill="none"/>
</g>
<g transform="translate(459,0) scale(0.8763,1) translate(-459,0)">
<text transform="translate(459,757)" y="3.06" font-size="8.5" fill="#ffffff" stroke="#ffffff" stroke-width="0.25" text-anchor="start" textLength="7.48" lengthAdjust="spacingAndGlyphs">8. </text>
<path d="M467.31 754.73H471.35M467.44 757H471.32M467.51 759.27H471.65M467.78 755.17V759.22M469.54 755.3V759.83M471.31 754.39V759.78M473.48 754.73H477.39M474.38 757H476.87M473.61 759.27H477.84M474.12 754.24V760.06M476.77 753.75V759M472.8 760.4L475.45 757M479.68 755.3H483.78M480.02 758.7H482.99M479.58 754.7V759.88M481.35 754.9V759.5M483.12 754.14V758.71M485.94 754.45H488.8M485.22 756.15H488.39M486.05 757.85H488.84M485.3 759.55H489.11M485.93 753.68V758.89M488.58 755.01V759.39M484.6 760.4L487.26 757M491.26 755.3H494.26M491.2 758.7H494.83M491.83 754.1V759.25M494.49 754.29V760.4M490.51 760.4L493.16 757M497.16 754.73H501.01M496.46 757H501.55M496.41 759.27H500.29M497.3 753.68V759.85M499.06 754.4V759.43M500.83 753.98V759.3M503.9 754.73H506.44M503.01 757H507.25M503.64 759.27H506.55M503.64 754.08V758.7M506.29 754.4V760.11M509.57 754.45H512.52M509.18 756.15H512.85M509.53 757.85H512.67M508.78 759.55H512.73M509.55 754.4V760.08M512.2 754.74V758.98M514.77 755.3H518.21M514.33 758.7H518.62M515.45 754.76V759.49M518.1 754.16V760.37M520.86 755.3H524.18M520.21 758.7H523.78M521.35 754.87V758.92M524.01 753.91V759.18M520.03 760.4L522.68 757M527.04 754.45H530.59M527.44 756.15H530.54M526.68 757.85H530.1M526.17 759.55H529.81M527.26 754.16V758.89M529.91 753.85V760.19M532.54 755.3H536.82M532.99 758.7H535.97M533.16 754.77V760.17M535.81 753.68V759.41M531.84 760.4L534.49 757" stroke="#ffffff" stroke-width="1.06" fill="none"/>
</g>
<g transform="translate(459,0) scale(0.9212,1) translate(-459,0)">
<path d="M459.87 770.45H462.82M460.3 772.15H463.26M460.32 773.85H463.5M459.46 775.55H464.21M459.88 770.8V775.27M461.65 770.68V775.53M463.42 770.37V774.84M459 776.4L461.65 773" stroke="#ffffff" stroke-width="1.06" fill="none"/>
<text transform="translate(464.9,773)" y="3.06" font-size="8.5" fill="#ffffff" stroke="#ffffff" stroke-width="0.25" text-anchor="start" textLength="4.08" lengthAdjust="spacingAndGlyphs">: </text>
<path d="M471 771.3H474.05M469.68 774.7H473.96M470.32 770.43V775.74M472.09 770.94V775.97M473.86 771.25V776.04M469.44 776.4L472.09 773M475.83 770.45H479.17M476.15 772.15H480.07M476.89 773.85H480.13M476.44 775.55H480.05M476.67 770.1V775.65M479.32 770.73V775.51M482.33 770.45H486.13M481.88 772.15H486.44M481.87 773.85H485.35M481.75 775.55H486.25M482.57 770.52V774.88M485.22 770.7V776.21M481.24 776.4L483.9 773M488.44 771.3H491.79M487.85 774.7H491.06M488.47 770.1V775.64M491.13 771.27V775.88M493.26 770.45H497.79M493.58 772.15H497.21M493.66 773.85H497.18M493.97 775.55H496.98M493.94 769.93V775.86M495.7 770.36V775.2M497.47 770.38V775.61M499.06 771.3H504.06M500.1 774.7H504.2M500.28 771.08V775.54M502.93 771.24V774.94M498.96 776.4L501.61 773M505.44 770.73H509.82M505.86 773H509.34M504.9 775.27H509.59M505.74 770.21V775.49M507.51 771.21V776.01M509.28 770.37V774.78M511.92 770.45H514.99M512.17 772.15H514.86M511.14 773.85H515.02M512.15 775.55H515.62M512.09 770.5V775.11M514.74 769.64V775.99M517.98 770.73H521.68M517.47 773H521.32M516.95 775.27H520.64M517.55 770.19V776.25M519.32 770.1V775.12M521.09 770.77V776.09M516.67 776.4L519.32 773M522.95 771.3H526.82M522.79 774.7H526.33M523.46 770.53V774.83M525.22 770.74V776.04M526.99 770.84V775.36M522.57 776.4L525.22 773" stroke="#ffffff" stroke-width="1.06" fill="none"/>
</g>
<line x1="214" y1="111.5" x2="548" y2="111.5" stroke="#00ffff" stroke-width="1"/>
<line x1="214" y1="127.5" x2="507" y2="127.5" stroke="#00ffff" stroke-width="1"/>
<line x1="214" y1="139.5" x2="436" y2="139.5" stroke="#00ffff" stroke-width="1"/>
<line x1="240" y1="153.5" x2="548" y2="153.5" stroke="#00ffff" stroke-width="1"/>
<line x1="214.5" y1="108" x2="214.5" y2="222" stroke="#00ffff" stroke-width="1"/>
<line x1="548.5" y1="108" x2="548.5" y2="352" stroke="#00ffff" stroke-width="1"/>
<line x1="507.5" y1="124" x2="507.5" y2="300" stroke="#00ffff" stroke-width="1"/>
<line x1="513.5" y1="140" x2="513.5" y2="300" stroke="#00ffff" stroke-width="1"/>
<line x1="436.5" y1="136" x2="436.5" y2="202" stroke="#00ffff" stroke-width="1"/>
<line x1="500" y1="142.5" x2="520" y2="142.5" stroke="#00ffff" stroke-width="1"/>
<line x1="257.5" y1="150" x2="257.5" y2="157" stroke="#00ffff" stroke-width="1"/>
<line x1="292.5" y1="150" x2="292.5" y2="157" stroke="#00ffff" stroke-width="1"/>
<line x1="318.5" y1="150" x2="318.5" y2="157" stroke="#00ffff" stroke-width="1"/>
<line x1="345.5" y1="150" x2="345.5" y2="157" stroke="#00ffff" stroke-width="1"/>
<line x1="357.5" y1="150" x2="357.5" y2="157" stroke="#00ffff" stroke-width="1"/>
<line x1="400.5" y1="150" x2="400.5" y2="157" stroke="#00ffff" stroke-width="1"/>
<line x1="436.5" y1="150" x2="436.5" y2="157" stroke="#00ffff" stroke-width="1"/>
<line x1="507.5" y1="150" x2="507.5" y2="157" stroke="#00ffff" stroke-width="1"/>
<line x1="513.5" y1="150" x2="513.5" y2="157" stroke="#00ffff" stroke-width="1"/>
<line x1="548.5" y1="150" x2="548.5" y2="157" stroke="#00ffff" stroke-width="1"/>
<line x1="240.5" y1="150" x2="240.5" y2="392" stroke="#00ffff" stroke-width="1"/>
<text transform="translate(381,107.6)" y="2.52" font-size="7" fill="#00ff00" stroke="#00ff00" stroke-width="0.3" text-anchor="middle" textLength="11.48" lengthAdjust="spacingAndGlyphs" font-weight="bold">4881</text>
<text transform="translate(361.6,123.8)" y="2.52" font-size="7" fill="#00ff00" stroke="#00ff00" stroke-width="0.3" text-anchor="middle" textLength="11.48" lengthAdjust="spacingAndGlyphs" font-weight="bold">4251</text>
<text transform="translate(360.6,134.7)" y="2.52" font-size="7" fill="#00ff00" stroke="#00ff00" stroke-width="0.3" text-anchor="middle" textLength="11.48" lengthAdjust="spacingAndGlyphs" font-weight="bold">3251</text>
<text transform="translate(253.6,149.5)" y="2.52" font-size="7" fill="#00ff00" stroke="#00ff00" stroke-width="0.3" text-anchor="middle" textLength="8.61" lengthAdjust="spacingAndGlyphs" font-weight="bold">281</text>
<text transform="translate(290.7,149.5)" y="2.52" font-size="7" fill="#00ff00" stroke="#00ff00" stroke-width="0.3" text-anchor="middle" textLength="8.61" lengthAdjust="spacingAndGlyphs" font-weight="bold">860</text>
<text transform="translate(317,149.5)" y="2.52" font-size="7" fill="#00ff00" stroke="#00ff00" stroke-width="0.3" text-anchor="middle" textLength="8.61" lengthAdjust="spacingAndGlyphs" font-weight="bold">460</text>
<text transform="translate(344.6,149.5)" y="2.52" font-size="7" fill="#00ff00" stroke="#00ff00" stroke-width="0.3" text-anchor="middle" textLength="8.61" lengthAdjust="spacingAndGlyphs" font-weight="bold">580</text>
<text transform="translate(377.9,149.5)" y="2.52" font-size="7" fill="#00ff00" stroke="#00ff00" stroke-width="0.3" text-anchor="middle" textLength="8.61" lengthAdjust="spacingAndGlyphs" font-weight="bold">125</text>
<text transform="translate(418,149.5)" y="2.52" font-size="7" fill="#00ff00" stroke="#00ff00" stroke-width="0.3" text-anchor="middle" textLength="8.61" lengthAdjust="spacingAndGlyphs" font-weight="bold">580</text>
<text transform="translate(471.6,149.5)" y="2.52" font-size="7" fill="#00ff00" stroke="#00ff00" stroke-width="0.3" text-anchor="middle" textLength="11.48" lengthAdjust="spacingAndGlyphs" font-weight="bold">1040</text>
<text transform="translate(510,149.5)" y="2.52" font-size="7" fill="#00ff00" stroke="#00ff00" stroke-width="0.3" text-anchor="middle" textLength="5.74" lengthAdjust="spacingAndGlyphs" font-weight="bold">78</text>
<text transform="translate(530.5,149.5)" y="2.52" font-size="7" fill="#00ff00" stroke="#00ff00" stroke-width="0.3" text-anchor="middle" textLength="8.61" lengthAdjust="spacingAndGlyphs" font-weight="bold">521</text>
<line x1="202" y1="189.5" x2="240" y2="189.5" stroke="#00ffff" stroke-width="1"/>
<line x1="202.5" y1="185" x2="202.5" y2="260" stroke="#00ffff" stroke-width="1"/>
<text transform="translate(221.4,184.7)" y="2.52" font-size="7" fill="#00ff00" stroke="#00ff00" stroke-width="0.3" text-anchor="middle" textLength="8.61" lengthAdjust="spacingAndGlyphs" font-weight="bold">558</text>
<text transform="translate(193.9,69.2)" y="3.06" font-size="8.5" fill="#00ff00" stroke="#00ff00" stroke-width="0.3" text-anchor="middle" textLength="3.15" lengthAdjust="spacingAndGlyphs" font-weight="bold">6</text>
<line x1="187" y1="74.5" x2="203.7" y2="74.5" stroke="#00ffff" stroke-width="1"/>
<line x1="203.7" y1="74.5" x2="253.6" y2="188" stroke="#00ffff" stroke-width="1"/>
<text transform="translate(217.8,69.2)" y="3.06" font-size="8.5" fill="#00ff00" stroke="#00ff00" stroke-width="0.3" text-anchor="middle" textLength="3.15" lengthAdjust="spacingAndGlyphs" font-weight="bold">7</text>
<line x1="210" y1="74.5" x2="226.6" y2="74.5" stroke="#00ffff" stroke-width="1"/>
<line x1="226.6" y1="74.5" x2="255.7" y2="181" stroke="#00ffff" stroke-width="1"/>
<text transform="translate(240.7,69.2)" y="3.06" font-size="8.5" fill="#00ff00" stroke="#00ff00" stroke-width="0.3" text-anchor="middle" textLength="3.15" lengthAdjust="spacingAndGlyphs" font-weight="bold">8</text>
<line x1="233.9" y1="74.5" x2="249.9" y2="74.5" stroke="#00ffff" stroke-width="1"/>
<line x1="249.9" y1="74.5" x2="257.8" y2="188" stroke="#00ffff" stroke-width="1"/>
<text transform="translate(261.3,69.2)" y="3.06" font-size="8.5" fill="#00ff00" stroke="#00ff00" stroke-width="0.3" text-anchor="middle" textLength="3.15" lengthAdjust="spacingAndGlyphs" font-weight="bold">9</text>
<line x1="253.6" y1="74.5" x2="270.3" y2="74.5" stroke="#00ffff" stroke-width="1"/>
<line x1="270.3" y1="74.5" x2="264" y2="188" stroke="#00ffff" stroke-width="1"/>
<text transform="translate(284.9,69.2)" y="3.06" font-size="8.5" fill="#00ff00" stroke="#00ff00" stroke-width="0.3" text-anchor="middle" textLength="6.29" lengthAdjust="spacingAndGlyphs" font-weight="bold">10</text>
<line x1="276.5" y1="74.5" x2="295.3" y2="74.5" stroke="#00ffff" stroke-width="1"/>
<line x1="276.5" y1="74.5" x2="267" y2="188" stroke="#00ffff" stroke-width="1"/>
<text transform="translate(303.2,69.2)" y="3.06" font-size="8.5" fill="#00ff00" stroke="#00ff00" stroke-width="0.3" text-anchor="middle" textLength="6.29" lengthAdjust="spacingAndGlyphs" font-weight="bold">11</text>
<line x1="294" y1="74.5" x2="310.9" y2="74.5" stroke="#00ffff" stroke-width="1"/>
<line x1="294" y1="74.5" x2="268.5" y2="190" stroke="#00ffff" stroke-width="1"/>
<text transform="translate(323.4,69.2)" y="3.06" font-size="8.5" fill="#00ff00" stroke="#00ff00" stroke-width="0.3" text-anchor="middle" textLength="6.29" lengthAdjust="spacingAndGlyphs" font-weight="bold">12</text>
<line x1="315" y1="74.5" x2="331.7" y2="74.5" stroke="#00ffff" stroke-width="1"/>
<line x1="315" y1="74.5" x2="305.7" y2="188" stroke="#00ffff" stroke-width="1"/>
<text transform="translate(341.5,69.2)" y="3.06" font-size="8.5" fill="#00ff00" stroke="#00ff00" stroke-width="0.3" text-anchor="middle" textLength="6.29" lengthAdjust="spacingAndGlyphs" font-weight="bold">13</text>
<line x1="332.7" y1="74.5" x2="349.5" y2="74.5" stroke="#00ffff" stroke-width="1"/>
<line x1="332.7" y1="74.5" x2="328.6" y2="189" stroke="#00ffff" stroke-width="1"/>
<text transform="translate(358.4,69.2)" y="3.06" font-size="8.5" fill="#00ff00" stroke="#00ff00" stroke-width="0.3" text-anchor="middle" textLength="6.29" lengthAdjust="spacingAndGlyphs" font-weight="bold">14</text>
<line x1="350" y1="74.5" x2="366.4" y2="74.5" stroke="#00ffff" stroke-width="1"/>
<line x1="350" y1="74.5" x2="336" y2="190" stroke="#00ffff" stroke-width="1"/>
<text transform="translate(424.4,69.2)" y="3.06" font-size="8.5" fill="#00ff00" stroke="#00ff00" stroke-width="0.3" text-anchor="middle" textLength="6.29" lengthAdjust="spacingAndGlyphs" font-weight="bold">15</text>
<line x1="417.3" y1="74.5" x2="433.5" y2="74.5" stroke="#00ffff" stroke-width="1"/>
<line x1="417.3" y1="74.5" x2="405" y2="191.4" stroke="#00ffff" stroke-width="1"/>
<text transform="translate(462.3,69.2)" y="3.06" font-size="8.5" fill="#00ff00" stroke="#00ff00" stroke-width="0.3" text-anchor="middle" textLength="6.29" lengthAdjust="spacingAndGlyphs" font-weight="bold">16</text>
<line x1="455.4" y1="74.5" x2="471.6" y2="74.5" stroke="#00ffff" stroke-width="1"/>
<line x1="455.4" y1="74.5" x2="426.6" y2="202.2" stroke="#00ffff" stroke-width="1"/>
<text transform="translate(505,69.2)" y="3.06" font-size="8.5" fill="#00ff00" stroke="#00ff00" stroke-width="0.3" text-anchor="middle" textLength="6.29" lengthAdjust="spacingAndGlyphs" font-weight="bold">17</text>
<line x1="497" y1="74.5" x2="513.2" y2="74.5" stroke="#00ffff" stroke-width="1"/>
<line x1="497" y1="74.5" x2="457.5" y2="228" stroke="#00ffff" stroke-width="1"/>
<text transform="translate(494.1,228.8)" y="3.06" font-size="8.5" fill="#00ff00" stroke="#00ff00" stroke-width="0.3" text-anchor="middle" textLength="6.29" lengthAdjust="spacingAndGlyphs" font-weight="bold">18</text>
<line x1="486.8" y1="235.5" x2="502.8" y2="235.5" stroke="#00ffff" stroke-width="1"/>
<line x1="486.8" y1="235.5" x2="484" y2="264" stroke="#00ffff" stroke-width="1"/>
<rect x="478.5" y="263.5" width="9" height="8" stroke="#ffffff" stroke-width="1" fill="none"/>
<text transform="translate(129,147.6)" y="3.06" font-size="8.5" fill="#00ff00" stroke="#00ff00" stroke-width="0.3" text-anchor="middle" textLength="3.15" lengthAdjust="spacingAndGlyphs" font-weight="bold">1</text>
<line x1="121" y1="153.5" x2="138" y2="153.5" stroke="#00ffff" stroke-width="1"/>
<line x1="138" y1="153.5" x2="221.4" y2="218" stroke="#00ffff" stroke-width="1"/>
<text transform="translate(129,184.4)" y="3.06" font-size="8.5" fill="#00ff00" stroke="#00ff00" stroke-width="0.3" text-anchor="middle" textLength="3.15" lengthAdjust="spacingAndGlyphs" font-weight="bold">2</text>
<line x1="121" y1="190.5" x2="138.6" y2="190.5" stroke="#00ffff" stroke-width="1"/>
<line x1="138.6" y1="190.5" x2="217" y2="217" stroke="#00ffff" stroke-width="1"/>
<text transform="translate(129,204)" y="3.06" font-size="8.5" fill="#00ff00" stroke="#00ff00" stroke-width="0.3" text-anchor="middle" textLength="3.15" lengthAdjust="spacingAndGlyphs" font-weight="bold">3</text>
<line x1="121" y1="209.5" x2="138" y2="209.5" stroke="#00ffff" stroke-width="1"/>
<line x1="138" y1="210" x2="211" y2="218" stroke="#00ffff" stroke-width="1"/>
<text transform="translate(128.3,245.8)" y="3.06" font-size="8.5" fill="#00ff00" stroke="#00ff00" stroke-width="0.3" text-anchor="middle" textLength="3.15" lengthAdjust="spacingAndGlyphs" font-weight="bold">4</text>
<line x1="120.8" y1="251.5" x2="138.5" y2="251.5" stroke="#00ffff" stroke-width="1"/>
<line x1="138.5" y1="252" x2="212" y2="228" stroke="#00ffff" stroke-width="1"/>
<text transform="translate(128,307.8)" y="3.06" font-size="8.5" fill="#00ff00" stroke="#00ff00" stroke-width="0.3" text-anchor="middle" textLength="3.15" lengthAdjust="spacingAndGlyphs" font-weight="bold">5</text>
<line x1="120.8" y1="314.5" x2="138.5" y2="314.5" stroke="#00ffff" stroke-width="1"/>
<line x1="138.5" y1="314.5" x2="216.2" y2="294.7" stroke="#00ffff" stroke-width="1"/>
<text transform="translate(132.5,340.4)" y="3.06" font-size="8.5" fill="#00ff00" stroke="#00ff00" stroke-width="0.3" text-anchor="middle" textLength="6.29" lengthAdjust="spacingAndGlyphs" font-weight="bold">41</text>
<line x1="125.6" y1="346.5" x2="146.4" y2="346.5" stroke="#00ffff" stroke-width="1"/>
<line x1="146.4" y1="346.5" x2="251.5" y2="334.6" stroke="#00ffff" stroke-width="1"/>
<text transform="translate(132.5,368.3)" y="3.06" font-size="8.5" fill="#00ff00" stroke="#00ff00" stroke-width="0.3" text-anchor="middle" textLength="6.29" lengthAdjust="spacingAndGlyphs" font-weight="bold">40</text>
<line x1="125.6" y1="374.5" x2="143.3" y2="374.5" stroke="#00ffff" stroke-width="1"/>
<line x1="143.3" y1="374.5" x2="251.5" y2="338" stroke="#00ffff" stroke-width="1"/>
<text transform="translate(132,391.8)" y="3.06" font-size="8.5" fill="#00ff00" stroke="#00ff00" stroke-width="0.3" text-anchor="middle" textLength="6.29" lengthAdjust="spacingAndGlyphs" font-weight="bold">39</text>
<line x1="125.6" y1="397.5" x2="143.3" y2="397.5" stroke="#00ffff" stroke-width="1"/>
<line x1="143.3" y1="397.5" x2="252" y2="342" stroke="#00ffff" stroke-width="1"/>
<text transform="translate(132,418.9)" y="3.06" font-size="8.5" fill="#00ff00" stroke="#00ff00" stroke-width="0.3" text-anchor="middle" textLength="6.29" lengthAdjust="spacingAndGlyphs" font-weight="bold">38</text>
<line x1="125.6" y1="425.5" x2="143.3" y2="425.5" stroke="#00ffff" stroke-width="1"/>
<line x1="143.3" y1="425.5" x2="252" y2="345" stroke="#00ffff" stroke-width="1"/>
<text transform="translate(177,419)" y="3.06" font-size="8.5" fill="#00ff00" stroke="#00ff00" stroke-width="0.3" text-anchor="middle" textLength="6.29" lengthAdjust="spacingAndGlyphs" font-weight="bold">37</text>
<line x1="170.4" y1="425.5" x2="187.4" y2="425.5" stroke="#00ffff" stroke-width="1"/>
<line x1="187.4" y1="425.5" x2="251.5" y2="347" stroke="#00ffff" stroke-width="1"/>
<text transform="translate(233.9,420.7)" y="3.06" font-size="8.5" fill="#00ff00" stroke="#00ff00" stroke-width="0.3" text-anchor="middle" textLength="6.29" lengthAdjust="spacingAndGlyphs" font-weight="bold">36</text>
<line x1="227" y1="426.5" x2="244.3" y2="426.5" stroke="#00ffff" stroke-width="1"/>
<line x1="244.3" y1="426.5" x2="255.7" y2="332.5" stroke="#00ffff" stroke-width="1"/>
<text transform="translate(253.2,420.7)" y="3.06" font-size="8.5" fill="#00ff00" stroke="#00ff00" stroke-width="0.3" text-anchor="middle" textLength="6.29" lengthAdjust="spacingAndGlyphs" font-weight="bold">35</text>
<line x1="246.3" y1="426.5" x2="263" y2="426.5" stroke="#00ffff" stroke-width="1"/>
<line x1="263" y1="426.5" x2="269.2" y2="345" stroke="#00ffff" stroke-width="1"/>
<text transform="translate(274,420.7)" y="3.06" font-size="8.5" fill="#00ff00" stroke="#00ff00" stroke-width="0.3" text-anchor="middle" textLength="6.29" lengthAdjust="spacingAndGlyphs" font-weight="bold">34</text>
<line x1="267.2" y1="426.5" x2="283.8" y2="426.5" stroke="#00ffff" stroke-width="1"/>
<line x1="283.8" y1="426.5" x2="349.4" y2="334.6" stroke="#00ffff" stroke-width="1"/>
<text transform="translate(290.7,420.7)" y="3.06" font-size="8.5" fill="#00ff00" stroke="#00ff00" stroke-width="0.3" text-anchor="middle" textLength="6.29" lengthAdjust="spacingAndGlyphs" font-weight="bold">33</text>
<line x1="283.8" y1="426.5" x2="300.6" y2="426.5" stroke="#00ffff" stroke-width="1"/>
<line x1="300.6" y1="426.5" x2="351" y2="336" stroke="#00ffff" stroke-width="1"/>
<text transform="translate(310.2,420.7)" y="3.06" font-size="8.5" fill="#00ff00" stroke="#00ff00" stroke-width="0.3" text-anchor="middle" textLength="6.29" lengthAdjust="spacingAndGlyphs" font-weight="bold">32</text>
<line x1="300.6" y1="426.5" x2="319.2" y2="426.5" stroke="#00ffff" stroke-width="1"/>
<line x1="319.2" y1="426.5" x2="353" y2="338" stroke="#00ffff" stroke-width="1"/>
<text transform="translate(326.5,420.7)" y="3.06" font-size="8.5" fill="#00ff00" stroke="#00ff00" stroke-width="0.3" text-anchor="middle" textLength="6.29" lengthAdjust="spacingAndGlyphs" font-weight="bold">31</text>
<line x1="319.2" y1="426.5" x2="335.9" y2="426.5" stroke="#00ffff" stroke-width="1"/>
<line x1="335.9" y1="426.5" x2="356" y2="340" stroke="#00ffff" stroke-width="1"/>
<text transform="translate(344.8,420.7)" y="3.06" font-size="8.5" fill="#00ff00" stroke="#00ff00" stroke-width="0.3" text-anchor="middle" textLength="6.29" lengthAdjust="spacingAndGlyphs" font-weight="bold">30</text>
<line x1="335.9" y1="426.5" x2="353" y2="426.5" stroke="#00ffff" stroke-width="1"/>
<line x1="353" y1="426.5" x2="360" y2="340" stroke="#00ffff" stroke-width="1"/>
<text transform="translate(360.1,420.7)" y="3.06" font-size="8.5" fill="#00ff00" stroke="#00ff00" stroke-width="0.3" text-anchor="middle" textLength="6.29" lengthAdjust="spacingAndGlyphs" font-weight="bold">29</text>
<line x1="353" y1="426.5" x2="368" y2="426.5" stroke="#00ffff" stroke-width="1"/>
<line x1="368" y1="426.5" x2="365" y2="336" stroke="#00ffff" stroke-width="1"/>
<text transform="translate(377.9,420.7)" y="3.06" font-size="8.5" fill="#00ff00" stroke="#00ff00" stroke-width="0.3" text-anchor="middle" textLength="6.29" lengthAdjust="spacingAndGlyphs" font-weight="bold">28</text>
<line x1="370" y1="426.5" x2="386" y2="426.5" stroke="#00ffff" stroke-width="1"/>
<line x1="370" y1="426.5" x2="372" y2="336" stroke="#00ffff" stroke-width="1"/>
<text transform="translate(395.2,420.7)" y="3.06" font-size="8.5" fill="#00ff00" stroke="#00ff00" stroke-width="0.3" text-anchor="middle" textLength="6.29" lengthAdjust="spacingAndGlyphs" font-weight="bold">27</text>
<line x1="387" y1="426.5" x2="403" y2="426.5" stroke="#00ffff" stroke-width="1"/>
<line x1="387" y1="426.5" x2="375" y2="336" stroke="#00ffff" stroke-width="1"/>
<text transform="translate(412.1,420.7)" y="3.06" font-size="8.5" fill="#00ff00" stroke="#00ff00" stroke-width="0.3" text-anchor="middle" textLength="6.29" lengthAdjust="spacingAndGlyphs" font-weight="bold">26</text>
<line x1="404" y1="426.5" x2="420" y2="426.5" stroke="#00ffff" stroke-width="1"/>
<line x1="404" y1="426.5" x2="378" y2="338" stroke="#00ffff" stroke-width="1"/>
<text transform="translate(429.4,420.7)" y="3.06" font-size="8.5" fill="#00ff00" stroke="#00ff00" stroke-width="0.3" text-anchor="middle" textLength="6.29" lengthAdjust="spacingAndGlyphs" font-weight="bold">25</text>
<line x1="421" y1="426.5" x2="437" y2="426.5" stroke="#00ffff" stroke-width="1"/>
<line x1="437" y1="426.5" x2="440" y2="328" stroke="#00ffff" stroke-width="1"/>
<text transform="translate(446.5,420.7)" y="3.06" font-size="8.5" fill="#00ff00" stroke="#00ff00" stroke-width="0.3" text-anchor="middle" textLength="6.29" lengthAdjust="spacingAndGlyphs" font-weight="bold">24</text>
<line x1="439" y1="426.5" x2="455" y2="426.5" stroke="#00ffff" stroke-width="1"/>
<line x1="455" y1="426.5" x2="452.6" y2="326.5" stroke="#00ffff" stroke-width="1"/>
<text transform="translate(473.8,420.7)" y="3.06" font-size="8.5" fill="#00ff00" stroke="#00ff00" stroke-width="0.3" text-anchor="middle" textLength="6.29" lengthAdjust="spacingAndGlyphs" font-weight="bold">23</text>
<line x1="466" y1="426.5" x2="482" y2="426.5" stroke="#00ffff" stroke-width="1"/>
<line x1="482" y1="426.5" x2="507" y2="334" stroke="#00ffff" stroke-width="1"/>
<text transform="translate(493.7,420.7)" y="3.06" font-size="8.5" fill="#00ff00" stroke="#00ff00" stroke-width="0.3" text-anchor="middle" textLength="6.29" lengthAdjust="spacingAndGlyphs" font-weight="bold">22</text>
<line x1="486" y1="426.5" x2="502" y2="426.5" stroke="#00ffff" stroke-width="1"/>
<line x1="502" y1="426.5" x2="509" y2="334" stroke="#00ffff" stroke-width="1"/>
<text transform="translate(532.7,420.7)" y="3.06" font-size="8.5" fill="#00ff00" stroke="#00ff00" stroke-width="0.3" text-anchor="middle" textLength="6.29" lengthAdjust="spacingAndGlyphs" font-weight="bold">21</text>
<line x1="525" y1="426.5" x2="541" y2="426.5" stroke="#00ffff" stroke-width="1"/>
<line x1="525" y1="426.5" x2="511" y2="334" stroke="#00ffff" stroke-width="1"/>
<text transform="translate(549.6,420.7)" y="3.06" font-size="8.5" fill="#00ff00" stroke="#00ff00" stroke-width="0.3" text-anchor="middle" textLength="6.29" lengthAdjust="spacingAndGlyphs" font-weight="bold">20</text>
<line x1="542" y1="426.5" x2="558" y2="426.5" stroke="#00ffff" stroke-width="1"/>
<line x1="542" y1="426.5" x2="513" y2="334" stroke="#00ffff" stroke-width="1"/>
<text transform="translate(572.1,420.7)" y="3.06" font-size="8.5" fill="#00ff00" stroke="#00ff00" stroke-width="0.3" text-anchor="middle" textLength="6.29" lengthAdjust="spacingAndGlyphs" font-weight="bold">19</text>
<line x1="565" y1="426.5" x2="580.7" y2="426.5" stroke="#00ffff" stroke-width="1"/>
<line x1="565" y1="426.5" x2="548" y2="331" stroke="#00ffff" stroke-width="1"/>
<line x1="232" y1="374.5" x2="508" y2="374.5" stroke="#00ffff" stroke-width="1"/>
<line x1="240" y1="387.5" x2="396" y2="387.5" stroke="#00ffff" stroke-width="1"/>
<line x1="252.5" y1="370" x2="252.5" y2="378" stroke="#00ffff" stroke-width="1"/>
<line x1="266.5" y1="370" x2="266.5" y2="378" stroke="#00ffff" stroke-width="1"/>
<line x1="357.5" y1="370" x2="357.5" y2="378" stroke="#00ffff" stroke-width="1"/>
<line x1="396.5" y1="370" x2="396.5" y2="378" stroke="#00ffff" stroke-width="1"/>
<line x1="438.5" y1="370" x2="438.5" y2="378" stroke="#00ffff" stroke-width="1"/>
<line x1="465.5" y1="370" x2="465.5" y2="378" stroke="#00ffff" stroke-width="1"/>
<line x1="508.5" y1="370" x2="508.5" y2="378" stroke="#00ffff" stroke-width="1"/>
<line x1="396.5" y1="332" x2="396.5" y2="390" stroke="#00ffff" stroke-width="1"/>
<line x1="465.5" y1="340" x2="465.5" y2="378" stroke="#00ffff" stroke-width="1"/>
<text transform="translate(245.3,370)" y="2.52" font-size="7" fill="#00ff00" stroke="#00ff00" stroke-width="0.3" text-anchor="middle" textLength="8.61" lengthAdjust="spacingAndGlyphs" font-weight="bold">150</text>
<text transform="translate(301.5,370)" y="2.52" font-size="7" fill="#00ff00" stroke="#00ff00" stroke-width="0.3" text-anchor="middle" textLength="11.48" lengthAdjust="spacingAndGlyphs" font-weight="bold">1500</text>
<text transform="translate(258.2,382)" y="2.52" font-size="7" fill="#00ff00" stroke="#00ff00" stroke-width="0.3" text-anchor="middle" textLength="8.61" lengthAdjust="spacingAndGlyphs" font-weight="bold">380</text>
<text transform="translate(331.7,382)" y="2.52" font-size="7" fill="#00ff00" stroke="#00ff00" stroke-width="0.3" text-anchor="middle" textLength="11.48" lengthAdjust="spacingAndGlyphs" font-weight="bold">2500</text>
<text transform="translate(363.4,370.2)" y="2.52" font-size="7" fill="#00ff00" stroke="#00ff00" stroke-width="0.3" text-anchor="middle" textLength="8.61" lengthAdjust="spacingAndGlyphs" font-weight="bold">300</text>
<text transform="translate(425.5,370)" y="2.52" font-size="7" fill="#00ff00" stroke="#00ff00" stroke-width="0.3" text-anchor="middle" textLength="11.48" lengthAdjust="spacingAndGlyphs" font-weight="bold">1510</text>
<text transform="translate(492.6,370)" y="2.52" font-size="7" fill="#00ff00" stroke="#00ff00" stroke-width="0.3" text-anchor="middle" textLength="8.61" lengthAdjust="spacingAndGlyphs" font-weight="bold">450</text>
<line x1="173.5" y1="218" x2="173.5" y2="281" stroke="#00ffff" stroke-width="1"/>
<line x1="169.5" y1="260" x2="169.5" y2="322" stroke="#00ffff" stroke-width="1"/>
<line x1="184.5" y1="254" x2="184.5" y2="297" stroke="#00ffff" stroke-width="1"/>
<line x1="172" y1="218.5" x2="202" y2="218.5" stroke="#00ffff" stroke-width="1"/>
<line x1="166" y1="260.5" x2="201" y2="260.5" stroke="#00ffff" stroke-width="1"/>
<line x1="172" y1="280.5" x2="201" y2="280.5" stroke="#00ffff" stroke-width="1"/>
<line x1="166" y1="321.5" x2="202" y2="321.5" stroke="#00ffff" stroke-width="1"/>
<line x1="180" y1="267.5" x2="200" y2="267.5" stroke="#00ffff" stroke-width="1"/>
<text transform="translate(169.3,249) rotate(-90)" y="2.52" font-size="7" fill="#00ff00" stroke="#00ff00" stroke-width="0.3" text-anchor="middle" textLength="8.61" lengthAdjust="spacingAndGlyphs" font-weight="bold">118</text>
<text transform="translate(180.8,263.5) rotate(-90)" y="2.52" font-size="7" fill="#00ff00" stroke="#00ff00" stroke-width="0.3" text-anchor="middle" textLength="8.61" lengthAdjust="spacingAndGlyphs" font-weight="bold">213</text>
<text transform="translate(180.8,290.5) rotate(-90)" y="2.52" font-size="7" fill="#00ff00" stroke="#00ff00" stroke-width="0.3" text-anchor="middle" textLength="8.61" lengthAdjust="spacingAndGlyphs" font-weight="bold">250</text>
<text transform="translate(165.2,289.5) rotate(-90)" y="2.52" font-size="7" fill="#00ff00" stroke="#00ff00" stroke-width="0.3" text-anchor="middle" textLength="8.61" lengthAdjust="spacingAndGlyphs" font-weight="bold">869</text>
<line x1="240" y1="254.5" x2="401" y2="254.5" stroke="#00ffff" stroke-width="1"/>
<line x1="313.5" y1="202" x2="313.5" y2="331" stroke="#00ffff" stroke-width="1"/>
<line x1="281.5" y1="200" x2="281.5" y2="215" stroke="#00ffff" stroke-width="1"/>
<line x1="241.5" y1="210" x2="241.5" y2="262" stroke="#00ffff" stroke-width="1"/>
<text transform="translate(269.9,250.4)" y="2.52" font-size="7" fill="#00ff00" stroke="#00ff00" stroke-width="0.3" text-anchor="middle" textLength="8.61" lengthAdjust="spacingAndGlyphs" font-weight="bold">170</text>
<text transform="translate(339,250.4)" y="2.52" font-size="7" fill="#00ff00" stroke="#00ff00" stroke-width="0.3" text-anchor="middle" textLength="11.48" lengthAdjust="spacingAndGlyphs" font-weight="bold">1970</text>
<text transform="translate(308.8,267) rotate(-90)" y="2.52" font-size="7" fill="#00ff00" stroke="#00ff00" stroke-width="0.3" text-anchor="middle" textLength="14.35" lengthAdjust="spacingAndGlyphs" font-weight="bold">Φ1900</text>
<line x1="274.5" y1="202" x2="274.5" y2="262" stroke="#00ffff" stroke-width="1"/>
<text transform="translate(269.5,211) rotate(-90)" y="2.52" font-size="7" fill="#00ff00" stroke="#00ff00" stroke-width="0.3" text-anchor="middle" textLength="8.61" lengthAdjust="spacingAndGlyphs" font-weight="bold">180</text>
<line x1="573.5" y1="267" x2="573.5" y2="316" stroke="#00ffff" stroke-width="1"/>
<line x1="487" y1="267.5" x2="576" y2="267.5" stroke="#00ffff" stroke-width="1"/>
<line x1="548" y1="316.5" x2="576" y2="316.5" stroke="#00ffff" stroke-width="1"/>
<line x1="562.5" y1="303" x2="562.5" y2="345" stroke="#00ffff" stroke-width="1"/>
<line x1="548" y1="303.5" x2="566" y2="303.5" stroke="#00ffff" stroke-width="1"/>
<line x1="548" y1="330.5" x2="566" y2="330.5" stroke="#00ffff" stroke-width="1"/>
<line x1="548" y1="344.5" x2="566" y2="344.5" stroke="#00ffff" stroke-width="1"/>
<text transform="translate(570,291) rotate(-90)" y="2.52" font-size="7" fill="#00ff00" stroke="#00ff00" stroke-width="0.3" text-anchor="middle" textLength="8.61" lengthAdjust="spacingAndGlyphs" font-weight="bold">725</text>
<text transform="translate(557.6,317) rotate(-90)" y="2.52" font-size="7" fill="#00ff00" stroke="#00ff00" stroke-width="0.3" text-anchor="middle" textLength="11.48" lengthAdjust="spacingAndGlyphs" font-weight="bold">Φ400</text>
<text transform="translate(557.6,338) rotate(-90)" y="2.52" font-size="7" fill="#00ff00" stroke="#00ff00" stroke-width="0.3" text-anchor="middle" textLength="5.74" lengthAdjust="spacingAndGlyphs" font-weight="bold">14</text>
<line x1="347" y1="292.5" x2="490" y2="292.5" stroke="#00ffff" stroke-width="1"/>
<line x1="347.5" y1="288" x2="347.5" y2="303" stroke="#00ffff" stroke-width="1"/>
<line x1="395.5" y1="288" x2="395.5" y2="303" stroke="#00ffff" stroke-width="1"/>
<line x1="442.5" y1="288" x2="442.5" y2="303" stroke="#00ffff" stroke-width="1"/>
<line x1="490.5" y1="288" x2="490.5" y2="303" stroke="#00ffff" stroke-width="1"/>
<text transform="translate(371.4,287.2)" y="2.52" font-size="7" fill="#00ff00" stroke="#00ff00" stroke-width="0.3" text-anchor="middle" textLength="8.61" lengthAdjust="spacingAndGlyphs" font-weight="bold">700</text>
<text transform="translate(419,287.2)" y="2.52" font-size="7" fill="#00ff00" stroke="#00ff00" stroke-width="0.3" text-anchor="middle" textLength="8.61" lengthAdjust="spacingAndGlyphs" font-weight="bold">750</text>
<text transform="translate(466.6,287.2)" y="2.52" font-size="7" fill="#00ff00" stroke="#00ff00" stroke-width="0.3" text-anchor="middle" textLength="8.61" lengthAdjust="spacingAndGlyphs" font-weight="bold">700</text>
<line x1="513" y1="281.5" x2="531" y2="281.5" stroke="#00ffff" stroke-width="1"/>
<text transform="translate(521.9,276.9)" y="2.52" font-size="7" fill="#00ff00" stroke="#00ff00" stroke-width="0.3" text-anchor="middle" textLength="8.61" lengthAdjust="spacingAndGlyphs" font-weight="bold">270</text>
<line x1="193" y1="267.5" x2="487" y2="267.5" stroke="#ff0000" stroke-width="1" stroke-dasharray="14,3,3,3"/>
<line x1="258.5" y1="172" x2="258.5" y2="331" stroke="#ff0000" stroke-width="1" stroke-dasharray="10,2,2,2"/>
<line x1="302.5" y1="178" x2="302.5" y2="210" stroke="#ff0000" stroke-width="1" stroke-dasharray="9,2,2,2"/>
<line x1="333.5" y1="178" x2="333.5" y2="210" stroke="#ff0000" stroke-width="1" stroke-dasharray="9,2,2,2"/>
<line x1="357.5" y1="178" x2="357.5" y2="210" stroke="#ff0000" stroke-width="1" stroke-dasharray="9,2,2,2"/>
<line x1="399.5" y1="178" x2="399.5" y2="210" stroke="#ff0000" stroke-width="1" stroke-dasharray="9,2,2,2"/>
<line x1="531.5" y1="277" x2="531.5" y2="353" stroke="#ff0000" stroke-width="1" stroke-dasharray="10,2,2,2"/>
<line x1="266.5" y1="340" x2="266.5" y2="362" stroke="#ff0000" stroke-width="1"/>
<path d="M239 202 A25 65 0 0 0 239 332" stroke="#ffffff" stroke-width="1.8" fill="none"/>
<line x1="239" y1="201.5" x2="437" y2="201.5" stroke="#ffffff" stroke-width="1.8"/>
<line x1="239" y1="331.5" x2="507" y2="331.5" stroke="#ffffff" stroke-width="2"/>
<path d="M437 202 Q441 202.5 443 206 L504 299" stroke="#ffffff" stroke-width="1.8" fill="none"/>
<line x1="436.5" y1="202" x2="436.5" y2="331" stroke="#ffffff" stroke-width="1"/>
<path d="M343 303.5 A12 13.5 0 0 0 343 330.5" stroke="#ffffff" stroke-width="1.5" fill="none"/>
<path d="M343 305.5 A10 11.5 0 0 0 343 328.5" stroke="#ff0000" stroke-width="1.2" fill="none"/>
<line x1="343" y1="306.5" x2="507" y2="306.5" stroke="#ffffff" stroke-width="1"/>
<line x1="343" y1="318.5" x2="507" y2="318.5" stroke="#ffffff" stroke-width="1"/>
<line x1="343" y1="304.5" x2="507" y2="304.5" stroke="#ff0000" stroke-width="1.2" stroke-dasharray="40,2,3,2"/>
<line x1="343" y1="316.5" x2="507" y2="316.5" stroke="#ff0000" stroke-width="1.2" stroke-dasharray="40,2,3,2"/>
<line x1="343" y1="328.5" x2="507" y2="328.5" stroke="#ff0000" stroke-width="1.2" stroke-dasharray="40,2,3,2"/>
<line x1="334" y1="316.5" x2="341" y2="316.5" stroke="#ff0000" stroke-width="1"/>
<line x1="346.5" y1="300" x2="346.5" y2="332" stroke="#ffffff" stroke-width="2"/>
<line x1="395.5" y1="300" x2="395.5" y2="332" stroke="#ffffff" stroke-width="2"/>
<line x1="442.5" y1="300" x2="442.5" y2="332" stroke="#ffffff" stroke-width="2"/>
<line x1="490.5" y1="300" x2="490.5" y2="332" stroke="#ffffff" stroke-width="2"/>
<rect x="343.5" y="314.5" width="3.5" height="4" stroke="#ffffff" stroke-width="1" fill="none"/>
<rect x="507" y="299.5" width="7.5" height="33" fill="url(#dt)"/>
<rect x="507.5" y="299.5" width="7" height="33" stroke="#ffffff" stroke-width="1" fill="none"/>
<line x1="503" y1="297.5" x2="518" y2="297.5" stroke="#ff0000" stroke-width="1.5"/>
<line x1="503" y1="335.5" x2="518" y2="335.5" stroke="#ff0000" stroke-width="1.5"/>
<line x1="514" y1="302.5" x2="542" y2="302.5" stroke="#ffffff" stroke-width="1"/>
<line x1="514" y1="330.5" x2="542" y2="330.5" stroke="#ffffff" stroke-width="1"/>
<path d="M542 303 Q551 305 549 316.5 Q551 328 542 330" stroke="#ffffff" stroke-width="1" fill="none"/>
<line x1="531.5" y1="288" x2="531.5" y2="303" stroke="#ffffff" stroke-width="1"/>
<line x1="533.5" y1="288" x2="533.5" y2="303" stroke="#ffffff" stroke-width="1"/>
<line x1="526" y1="288.5" x2="537" y2="288.5" stroke="#ffffff" stroke-width="2"/>
<line x1="531.5" y1="330" x2="531.5" y2="344" stroke="#ffffff" stroke-width="1"/>
<line x1="533.5" y1="330" x2="533.5" y2="344" stroke="#ffffff" stroke-width="1"/>
<line x1="526" y1="344.5" x2="537" y2="344.5" stroke="#ffffff" stroke-width="2"/>
<circle cx="533" cy="286" r="2" stroke="#ffffff" stroke-width="1" fill="none"/>
<text transform="translate(537,283.3)" y="3.6" font-size="10" fill="#00ff00" stroke="#00ff00" stroke-width="0.3" text-anchor="middle" textLength="5" lengthAdjust="spacingAndGlyphs" font-weight="bold">n</text>
<text transform="translate(536,348.3)" y="3.6" font-size="10" fill="#00ff00" stroke="#00ff00" stroke-width="0.3" text-anchor="middle" textLength="5" lengthAdjust="spacingAndGlyphs" font-weight="bold">p</text>
<line x1="521" y1="311.5" x2="536" y2="311.5" stroke="#00ffff" stroke-width="1"/>
<line x1="521" y1="324.5" x2="536" y2="324.5" stroke="#00ffff" stroke-width="1"/>
<text transform="translate(527,306.7)" y="2.88" font-size="8" fill="#00ff00" stroke="#00ff00" stroke-width="0.3" text-anchor="middle" textLength="3.6" lengthAdjust="spacingAndGlyphs" font-weight="bold">E</text>
<text transform="translate(527,320)" y="2.88" font-size="8" fill="#00ff00" stroke="#00ff00" stroke-width="0.3" text-anchor="middle" textLength="3.6" lengthAdjust="spacingAndGlyphs" font-weight="bold">F</text>
<circle cx="476.4" cy="321.2" r="2.5" stroke="#ffffff" stroke-width="1" fill="none"/>
<line x1="476.5" y1="324" x2="476.5" y2="378" stroke="#00ffff" stroke-width="1"/>
<text transform="translate(485,338.6)" y="2.7" font-size="7.5" fill="#00ff00" stroke="#00ff00" stroke-width="0.3" text-anchor="middle" textLength="3.07" lengthAdjust="spacingAndGlyphs" font-weight="bold">3</text>
<line x1="478.6" y1="342.5" x2="492.6" y2="342.5" stroke="#00ffff" stroke-width="1"/>
<line x1="492.6" y1="342.5" x2="509" y2="320" stroke="#00ffff" stroke-width="1"/>
<text transform="translate(493.7,271.4)" y="2.7" font-size="7.5" fill="#00ff00" stroke="#00ff00" stroke-width="0.3" text-anchor="middle" textLength="3.07" lengthAdjust="spacingAndGlyphs" font-weight="bold">8</text>
<line x1="487" y1="275.5" x2="502" y2="275.5" stroke="#00ffff" stroke-width="1"/>
<line x1="502" y1="275.7" x2="510" y2="296" stroke="#00ffff" stroke-width="1"/>
<line x1="283.5" y1="160" x2="283.5" y2="195" stroke="#00ffff" stroke-width="1"/>
<line x1="287.5" y1="172" x2="287.5" y2="195" stroke="#00ffff" stroke-width="1"/>
<text transform="translate(280,166.4) rotate(-90)" y="2.34" font-size="6.5" fill="#00ff00" stroke="#00ff00" stroke-width="0.3" text-anchor="middle" textLength="7.99" lengthAdjust="spacingAndGlyphs" font-weight="bold">180</text>
<line x1="250" y1="180.5" x2="292" y2="180.5" stroke="#00ffff" stroke-width="1"/>
<line x1="250" y1="188.5" x2="292" y2="188.5" stroke="#00ffff" stroke-width="1"/>
<text transform="translate(274.4,178.9)" y="2.34" font-size="6.5" fill="#00ff00" stroke="#00ff00" stroke-width="0.3" text-anchor="middle" textLength="5.33" lengthAdjust="spacingAndGlyphs" font-weight="bold">15</text>
<circle cx="511" cy="300" r="11" stroke="#c8966e" stroke-width="1" fill="none"/>
<circle cx="511" cy="312" r="9" stroke="#c8966e" stroke-width="0.8" fill="none"/>
<circle cx="511" cy="323" r="9" stroke="#c8966e" stroke-width="0.8" fill="none"/>
<line x1="254.5" y1="188" x2="254.5" y2="320" stroke="#ffffff" stroke-width="1"/>
<line x1="263.5" y1="188" x2="263.5" y2="320" stroke="#ffffff" stroke-width="1"/>
<line x1="254.7" y1="320.5" x2="263" y2="320.5" stroke="#ffffff" stroke-width="1"/>
<line x1="250.5" y1="181.5" x2="267" y2="181.5" stroke="#ffffff" stroke-width="2"/>
<line x1="248.4" y1="188.5" x2="267" y2="188.5" stroke="#ffffff" stroke-width="2"/>
<line x1="252.5" y1="181" x2="252.5" y2="188" stroke="#ffffff" stroke-width="1"/>
<line x1="264.5" y1="181" x2="264.5" y2="188" stroke="#ffffff" stroke-width="1"/>
<line x1="248.5" y1="185" x2="248.5" y2="192" stroke="#ff0000" stroke-width="1.5"/>
<line x1="268.5" y1="185" x2="268.5" y2="192" stroke="#ff0000" stroke-width="1.5"/>
<circle cx="250.5" cy="322" r="2.5" stroke="#ffffff" stroke-width="1" fill="none"/>
<text transform="translate(263,168.4)" y="3.6" font-size="10" fill="#00ff00" stroke="#00ff00" stroke-width="0.3" text-anchor="middle" textLength="3.6" lengthAdjust="spacingAndGlyphs" font-weight="bold">f</text>
<line x1="292" y1="186.5" x2="312" y2="186.5" stroke="#ffffff" stroke-width="2"/>
<line x1="296.5" y1="187" x2="296.5" y2="202" stroke="#ffffff" stroke-width="1"/>
<line x1="307.5" y1="187" x2="307.5" y2="202" stroke="#ffffff" stroke-width="1"/>
<text transform="translate(296.9,180)" y="3.6" font-size="10" fill="#00ff00" stroke="#00ff00" stroke-width="0.3" text-anchor="middle" textLength="5" lengthAdjust="spacingAndGlyphs" font-weight="bold">b</text>
<line x1="324.8" y1="190.5" x2="341" y2="190.5" stroke="#ffffff" stroke-width="2"/>
<line x1="330.5" y1="190" x2="330.5" y2="202" stroke="#ffffff" stroke-width="1"/>
<line x1="336.5" y1="190" x2="336.5" y2="202" stroke="#ffffff" stroke-width="1"/>
<text transform="translate(329.6,183)" y="3.6" font-size="10" fill="#00ff00" stroke="#00ff00" stroke-width="0.3" text-anchor="middle" textLength="3.15" lengthAdjust="spacingAndGlyphs" font-weight="bold">j</text>
<line x1="349.7" y1="189.5" x2="363.8" y2="189.5" stroke="#ffffff" stroke-width="2"/>
<line x1="353.5" y1="190" x2="353.5" y2="202" stroke="#ffffff" stroke-width="1"/>
<line x1="360.5" y1="190" x2="360.5" y2="202" stroke="#ffffff" stroke-width="1"/>
<text transform="translate(349,184)" y="3.6" font-size="10" fill="#00ff00" stroke="#00ff00" stroke-width="0.3" text-anchor="middle" textLength="12.8" lengthAdjust="spacingAndGlyphs" font-weight="bold">e(q)</text>
<line x1="376.8" y1="184.5" x2="424" y2="184.5" stroke="#ffffff" stroke-width="2.5"/>
<line x1="382.5" y1="185" x2="382.5" y2="202" stroke="#ffffff" stroke-width="1"/>
<line x1="416.5" y1="185" x2="416.5" y2="202" stroke="#ffffff" stroke-width="1"/>
<path d="M382 201 Q399 208 417 201" stroke="#ffffff" stroke-width="1" fill="none"/>
<polyline points="396,183 399,176 403,183" stroke="#ffffff" stroke-width="1" fill="none"/>
<polyline points="399,176 399,170 418,170 424,176 424,193 419,193" stroke="#ffffff" stroke-width="1" fill="none"/>
<text transform="translate(386,176)" y="3.6" font-size="10" fill="#00ff00" stroke="#00ff00" stroke-width="0.3" text-anchor="middle" textLength="5.4" lengthAdjust="spacingAndGlyphs" font-weight="bold">m</text>
<polygon points="202.6,218.7 222.4,218.7 217.2,235.4" stroke="#ffffff" stroke-width="1.2" fill="none"/>
<polygon points="202.6,321.1 224.5,321.1 219.9,307.2" stroke="#ffffff" stroke-width="1.2" fill="none"/>
<line x1="193" y1="218.5" x2="202" y2="218.5" stroke="#ff0000" stroke-width="1.2"/>
<line x1="224" y1="218.5" x2="230" y2="218.5" stroke="#ff0000" stroke-width="1.2"/>
<line x1="193" y1="321.5" x2="202" y2="321.5" stroke="#ff0000" stroke-width="1.2"/>
<line x1="224" y1="321.5" x2="232" y2="321.5" stroke="#ff0000" stroke-width="1.2"/>
<line x1="202" y1="260.5" x2="214" y2="260.5" stroke="#ffffff" stroke-width="2.2"/>
<line x1="203.5" y1="255.9" x2="203.5" y2="264.9" stroke="#ffffff" stroke-width="2.2"/>
<rect x="210.5" y="258.4" width="3" height="4" fill="#ffffff"/>
<line x1="193" y1="260.5" x2="201.6" y2="260.5" stroke="#ff0000" stroke-width="1.2"/>
<line x1="214" y1="260.5" x2="222" y2="260.5" stroke="#ff0000" stroke-width="1.2"/>
<line x1="202" y1="280.5" x2="214" y2="280.5" stroke="#ffffff" stroke-width="2.2"/>
<line x1="203.5" y1="275.6" x2="203.5" y2="284.6" stroke="#ffffff" stroke-width="2.2"/>
<rect x="210.5" y="278.1" width="3" height="4" fill="#ffffff"/>
<line x1="193" y1="280.5" x2="201.6" y2="280.5" stroke="#ff0000" stroke-width="1.2"/>
<line x1="214" y1="280.5" x2="222" y2="280.5" stroke="#ff0000" stroke-width="1.2"/>
<text transform="translate(198,226)" y="3.24" font-size="9" fill="#00ff00" stroke="#00ff00" stroke-width="0.3" text-anchor="middle" textLength="8.1" lengthAdjust="spacingAndGlyphs" font-weight="bold">ka</text>
<text transform="translate(198,252)" y="3.24" font-size="9" fill="#00ff00" stroke="#00ff00" stroke-width="0.3" text-anchor="middle" textLength="8.1" lengthAdjust="spacingAndGlyphs" font-weight="bold">kb</text>
<text transform="translate(198,275.4)" y="3.24" font-size="9" fill="#00ff00" stroke="#00ff00" stroke-width="0.3" text-anchor="middle" textLength="8.1" lengthAdjust="spacingAndGlyphs" font-weight="bold">kc</text>
<text transform="translate(198,315)" y="3.24" font-size="9" fill="#00ff00" stroke="#00ff00" stroke-width="0.3" text-anchor="middle" textLength="8.1" lengthAdjust="spacingAndGlyphs" font-weight="bold">kd</text>
<rect x="278.5" y="215.5" width="9" height="31" stroke="#ffffff" stroke-width="1" fill="none"/>
<rect x="280.5" y="220.5" width="4" height="21" stroke="#ff0000" stroke-width="1" fill="none" stroke-dasharray="3,2"/>
<line x1="274.6" y1="230.5" x2="290.6" y2="230.5" stroke="#ff0000" stroke-width="1"/>
<line x1="282.5" y1="208" x2="282.5" y2="252" stroke="#ff0000" stroke-width="1"/>
<rect x="392.5" y="215.5" width="9" height="31" stroke="#ffffff" stroke-width="1" fill="none"/>
<rect x="394.5" y="220.5" width="4" height="21" stroke="#ff0000" stroke-width="1" fill="none" stroke-dasharray="3,2"/>
<line x1="388.8" y1="230.5" x2="404.8" y2="230.5" stroke="#ff0000" stroke-width="1"/>
<line x1="396.5" y1="208" x2="396.5" y2="252" stroke="#ff0000" stroke-width="1"/>
<line x1="260.5" y1="332" x2="260.5" y2="348" stroke="#ffffff" stroke-width="1"/>
<line x1="266.5" y1="332" x2="266.5" y2="348" stroke="#ffffff" stroke-width="1"/>
<line x1="254" y1="348.5" x2="275" y2="348.5" stroke="#ffffff" stroke-width="1.5"/>
<line x1="280.7" y1="332" x2="274.4" y2="348" stroke="#ffffff" stroke-width="1"/>
<line x1="254.5" y1="332" x2="254.5" y2="342" stroke="#ffffff" stroke-width="1"/>
<line x1="402.5" y1="332" x2="402.5" y2="348" stroke="#ffffff" stroke-width="1.5"/>
<line x1="388.3" y1="348.5" x2="404.7" y2="348.5" stroke="#ffffff" stroke-width="1.5"/>
<line x1="384" y1="332" x2="389.1" y2="348.2" stroke="#ffffff" stroke-width="1.2"/>
<line x1="396.5" y1="340" x2="396.5" y2="362" stroke="#ff0000" stroke-width="1"/>
<line x1="350.5" y1="332" x2="350.5" y2="344" stroke="#ffffff" stroke-width="1.5"/>
<line x1="355.5" y1="332" x2="355.5" y2="344" stroke="#ffffff" stroke-width="1.5"/>
<line x1="348" y1="344.5" x2="359" y2="344.5" stroke="#ffffff" stroke-width="2.5"/>
<line x1="353.5" y1="330" x2="353.5" y2="355" stroke="#ff0000" stroke-width="1.5"/>
<line x1="371.5" y1="332" x2="371.5" y2="344" stroke="#ffffff" stroke-width="1.5"/>
<line x1="376.5" y1="332" x2="376.5" y2="344" stroke="#ffffff" stroke-width="1.5"/>
<line x1="368.6" y1="344.5" x2="379.6" y2="344.5" stroke="#ffffff" stroke-width="2.5"/>
<line x1="373.5" y1="330" x2="373.5" y2="355" stroke="#ff0000" stroke-width="1.5"/>
<rect x="354" y="345" width="4" height="6.5" fill="#00ff00"/>
<rect x="381" y="343" width="4" height="6" fill="#00ff00"/>
<text transform="translate(245.5,314)" y="3.24" font-size="9" fill="#00ff00" stroke="#00ff00" stroke-width="0.3" text-anchor="middle" textLength="4.05" lengthAdjust="spacingAndGlyphs" font-weight="bold">g</text>
<text transform="translate(355,352)" y="2.88" font-size="8" fill="#00ff00" stroke="#00ff00" stroke-width="0.3" text-anchor="middle" textLength="2.96" lengthAdjust="spacingAndGlyphs" font-weight="bold">c</text>
<text transform="translate(385,342)" y="2.88" font-size="8" fill="#00ff00" stroke="#00ff00" stroke-width="0.3" text-anchor="middle" textLength="2.96" lengthAdjust="spacingAndGlyphs" font-weight="bold">d</text>
<line x1="642" y1="267.5" x2="797" y2="267.5" stroke="#ff0000" stroke-width="1" stroke-dasharray="14,3,3,3"/>
<line x1="719.5" y1="168" x2="719.5" y2="352" stroke="#ff0000" stroke-width="1" stroke-dasharray="12,3,3,3"/>
<circle cx="719.4" cy="267.5" r="65" stroke="#ffffff" stroke-width="1.8" fill="none"/>
<path d="M656 290 Q664 318 700 330" stroke="#ffffff" stroke-width="1" fill="none"/>
<path d="M783 290 Q774 318 738 330" stroke="#ffffff" stroke-width="1" fill="none"/>
<line x1="654.5" y1="282" x2="661.5" y2="348" stroke="#ffffff" stroke-width="1"/>
<line x1="784.3" y1="282" x2="777" y2="348" stroke="#ffffff" stroke-width="1"/>
<rect x="661.5" y="318.5" width="24" height="4" stroke="#ffffff" stroke-width="1" fill="none"/>
<line x1="663" y1="320.5" x2="684" y2="320.5" stroke="#ff0000" stroke-width="1"/>
<line x1="662.5" y1="315" x2="662.5" y2="349" stroke="#ffffff" stroke-width="1.5"/>
<rect x="759.5" y="318.5" width="16" height="4" stroke="#ffffff" stroke-width="1" fill="none"/>
<line x1="761" y1="320.5" x2="774" y2="320.5" stroke="#ff0000" stroke-width="1"/>
<line x1="775.5" y1="315" x2="775.5" y2="349" stroke="#ffffff" stroke-width="1.5"/>
<line x1="658" y1="348.5" x2="780" y2="348.5" stroke="#ffffff" stroke-width="2.2"/>
<rect x="646.5" y="326.5" width="12.5" height="8" stroke="#ffffff" stroke-width="1" fill="none"/>
<line x1="647.4" y1="330.5" x2="657.4" y2="330.5" stroke="#ff0000" stroke-width="1"/>
<line x1="650.5" y1="326" x2="650.5" y2="335" stroke="#ff0000" stroke-width="1"/>
<rect x="780.5" y="326.5" width="12.5" height="8" stroke="#ffffff" stroke-width="1" fill="none"/>
<line x1="781" y1="330.5" x2="791" y2="330.5" stroke="#ff0000" stroke-width="1"/>
<line x1="784.5" y1="326" x2="784.5" y2="335" stroke="#ff0000" stroke-width="1"/>
<path d="M666 227 L658 223 Q652 222 654 228 Q656 233 662 234" stroke="#ffffff" stroke-width="1.2" fill="none"/>
<path d="M772 227 L780 223 Q786 222 784 228 Q782 233 776 234" stroke="#ffffff" stroke-width="1.2" fill="none"/>
<line x1="655.5" y1="224" x2="659.5" y2="228" stroke="#ff0000" stroke-width="1"/>
<line x1="655.5" y1="228" x2="659.5" y2="224" stroke="#ff0000" stroke-width="1"/>
<line x1="778.5" y1="224" x2="782.5" y2="228" stroke="#ff0000" stroke-width="1"/>
<line x1="778.5" y1="228" x2="782.5" y2="224" stroke="#ff0000" stroke-width="1"/>
<path d="M664.7 229.2 A66.8 66.8 0 0 1 774.1 229.2" stroke="#ffffff" stroke-width="1" fill="none"/>
<rect x="696.5" y="184.5" width="46" height="5" stroke="#ffffff" stroke-width="1" fill="none"/>
<line x1="697" y1="186.5" x2="742" y2="186.5" stroke="#ffffff" stroke-width="1"/>
<line x1="742" y1="189.5" x2="746" y2="189.5" stroke="#ffffff" stroke-width="1.5"/>
<line x1="705.5" y1="189" x2="705.5" y2="203" stroke="#ff0000" stroke-width="1.5"/>
<line x1="739.5" y1="189" x2="739.5" y2="203" stroke="#ff0000" stroke-width="1.5"/>
<line x1="703.5" y1="189" x2="703.5" y2="202" stroke="#ffffff" stroke-width="1"/>
<line x1="713.5" y1="189" x2="713.5" y2="202" stroke="#ffffff" stroke-width="1"/>
<line x1="724.5" y1="189" x2="724.5" y2="202" stroke="#ffffff" stroke-width="1"/>
<line x1="735.5" y1="189" x2="735.5" y2="202" stroke="#ffffff" stroke-width="1"/>
<line x1="743.5" y1="189" x2="743.5" y2="203" stroke="#ffffff" stroke-width="1"/>
<line x1="705.5" y1="159" x2="705.5" y2="188" stroke="#00ffff" stroke-width="1"/>
<line x1="739.5" y1="159" x2="739.5" y2="188" stroke="#00ffff" stroke-width="1"/>
<line x1="719.5" y1="159" x2="719.5" y2="168" stroke="#00ffff" stroke-width="1"/>
<line x1="705.5" y1="163.5" x2="739.5" y2="163.5" stroke="#00ffff" stroke-width="1"/>
<text transform="translate(729.6,159.4)" y="2.52" font-size="7" fill="#00ff00" stroke="#00ff00" stroke-width="0.3" text-anchor="middle" textLength="8.61" lengthAdjust="spacingAndGlyphs" font-weight="bold">300</text>
<circle cx="719.4" cy="170" r="2" stroke="#ffffff" stroke-width="1" fill="none"/>
<text transform="translate(723,171)" y="3.6" font-size="10" fill="#00ff00" stroke="#00ff00" stroke-width="0.35" text-anchor="start" textLength="21.24" lengthAdjust="spacingAndGlyphs">m(j,b,f)</text>
<circle cx="733.2" cy="219.1" r="3.2" stroke="#ffffff" stroke-width="1" fill="none"/>
<line x1="729" y1="219.5" x2="737.5" y2="219.5" stroke="#ff0000" stroke-width="1"/>
<line x1="733.5" y1="215" x2="733.5" y2="223" stroke="#ff0000" stroke-width="1"/>
<text transform="translate(726.5,224.9)" y="2.88" font-size="8" fill="#00ff00" stroke="#00ff00" stroke-width="0.3" text-anchor="middle" textLength="5.92" lengthAdjust="spacingAndGlyphs" font-weight="bold">k1</text>
<line x1="719.4" y1="231.5" x2="750.5" y2="231.5" stroke="#00ffff" stroke-width="1"/>
<line x1="733.5" y1="222" x2="733.5" y2="236" stroke="#00ffff" stroke-width="1"/>
<text transform="translate(743.3,227.6)" y="2.52" font-size="7" fill="#00ff00" stroke="#00ff00" stroke-width="0.3" text-anchor="middle" textLength="8.61" lengthAdjust="spacingAndGlyphs" font-weight="bold">200</text>
<rect x="713.5" y="263.5" width="11" height="7.6" stroke="#ffffff" stroke-width="1" fill="none"/>
<circle cx="719.4" cy="259.6" r="2.8" stroke="#ffffff" stroke-width="1" fill="none"/>
<text transform="translate(713,254.6)" y="2.88" font-size="8" fill="#00ff00" stroke="#00ff00" stroke-width="0.3" text-anchor="middle" textLength="5.92" lengthAdjust="spacingAndGlyphs" font-weight="bold">k3</text>
<line x1="719.4" y1="274.5" x2="750.6" y2="274.5" stroke="#00ffff" stroke-width="1"/>
<text transform="translate(743.3,270.5)" y="2.52" font-size="7" fill="#00ff00" stroke="#00ff00" stroke-width="0.3" text-anchor="middle" textLength="8.61" lengthAdjust="spacingAndGlyphs" font-weight="bold">200</text>
<line x1="698.3" y1="281.5" x2="719.4" y2="281.5" stroke="#00ffff" stroke-width="1"/>
<text transform="translate(704.2,276.9)" y="2.52" font-size="7" fill="#00ff00" stroke="#00ff00" stroke-width="0.3" text-anchor="middle" textLength="5.74" lengthAdjust="spacingAndGlyphs" font-weight="bold">80</text>
<circle cx="732.5" cy="280.6" r="3" stroke="#ffffff" stroke-width="1" fill="none"/>
<line x1="728" y1="280.5" x2="737" y2="280.5" stroke="#ff0000" stroke-width="1"/>
<line x1="732.5" y1="276" x2="732.5" y2="285" stroke="#ff0000" stroke-width="1"/>
<text transform="translate(739.6,285.3)" y="2.88" font-size="8" fill="#00ff00" stroke="#00ff00" stroke-width="0.3" text-anchor="middle" textLength="5.92" lengthAdjust="spacingAndGlyphs" font-weight="bold">k2</text>
<circle cx="719.4" cy="316.5" r="21" stroke="#ffffff" stroke-width="1.3" fill="none"/>
<circle cx="719.4" cy="316.5" r="17" stroke="#ffffff" stroke-width="1.3" fill="none"/>
<circle cx="701.7" cy="306.4" r="2.5" stroke="#ffffff" stroke-width="1" fill="none"/>
<line x1="699.7" y1="306.5" x2="703.7" y2="306.5" stroke="#ff0000" stroke-width="1"/>
<circle cx="736.2" cy="306.4" r="2.5" stroke="#ffffff" stroke-width="1" fill="none"/>
<line x1="734.2" y1="306.5" x2="738.2" y2="306.5" stroke="#ff0000" stroke-width="1"/>
<line x1="694.4" y1="316.5" x2="745" y2="316.5" stroke="#ff0000" stroke-width="1" stroke-dasharray="10,3,3,3"/>
<line x1="724.5" y1="290.4" x2="724.5" y2="300.5" stroke="#ffffff" stroke-width="1.5"/>
<line x1="718.5" y1="290.5" x2="730.3" y2="290.5" stroke="#ffffff" stroke-width="2"/>
<line x1="724.5" y1="290" x2="724.5" y2="303" stroke="#ff0000" stroke-width="1.5"/>
<line x1="730" y1="295" x2="744" y2="304" stroke="#00ffff" stroke-width="1"/>
<text transform="translate(738,295.4) rotate(-35)" y="2.52" font-size="7" fill="#00ff00" stroke="#00ff00" stroke-width="0.3" text-anchor="middle" textLength="7.46" lengthAdjust="spacingAndGlyphs" font-weight="bold">45°</text>
<text transform="translate(712.6,319)" y="2.88" font-size="8" fill="#00ff00" stroke="#00ff00" stroke-width="0.3" text-anchor="middle" textLength="5.92" lengthAdjust="spacingAndGlyphs" font-weight="bold">k4</text>
<circle cx="719.4" cy="321.6" r="3" stroke="#ffffff" stroke-width="1" fill="none"/>
<line x1="698" y1="328.5" x2="719" y2="328.5" stroke="#00ffff" stroke-width="1"/>
<text transform="translate(702,323.7) rotate(-90)" y="2.52" font-size="7" fill="#00ff00" stroke="#00ff00" stroke-width="0.3" text-anchor="middle" textLength="5.74" lengthAdjust="spacingAndGlyphs" font-weight="bold">25</text>
<line x1="713.5" y1="331" x2="713.5" y2="344" stroke="#ff0000" stroke-width="1.5"/>
<line x1="716.5" y1="334" x2="716.5" y2="340" stroke="#ffffff" stroke-width="1"/>
<line x1="723.5" y1="334" x2="723.5" y2="340" stroke="#ffffff" stroke-width="1"/>
<rect x="706.5" y="337.5" width="28.5" height="6.5" stroke="#ffffff" stroke-width="1" fill="none"/>
<line x1="702.5" y1="343.5" x2="734.6" y2="343.5" stroke="#ff0000" stroke-width="1.2"/>
<text transform="translate(700.8,341.5)" y="2.88" font-size="8" fill="#00ff00" stroke="#00ff00" stroke-width="0.3" text-anchor="middle" textLength="2.96" lengthAdjust="spacingAndGlyphs" font-weight="bold">c</text>
<line x1="706" y1="356.5" x2="733" y2="356.5" stroke="#00ffff" stroke-width="1"/>
<line x1="706.5" y1="344" x2="706.5" y2="360" stroke="#00ffff" stroke-width="1"/>
<line x1="733.5" y1="344" x2="733.5" y2="360" stroke="#00ffff" stroke-width="1"/>
<line x1="719.5" y1="356" x2="719.5" y2="375" stroke="#00ffff" stroke-width="1"/>
<text transform="translate(712.7,352.4)" y="2.52" font-size="7" fill="#00ff00" stroke="#00ff00" stroke-width="0.3" text-anchor="middle" textLength="8.61" lengthAdjust="spacingAndGlyphs" font-weight="bold">200</text>
<text transform="translate(726.2,352.4)" y="2.52" font-size="7" fill="#00ff00" stroke="#00ff00" stroke-width="0.3" text-anchor="middle" textLength="8.61" lengthAdjust="spacingAndGlyphs" font-weight="bold">200</text>
<line x1="719" y1="333.5" x2="748" y2="333.5" stroke="#00ffff" stroke-width="1"/>
<line x1="719" y1="343.5" x2="748" y2="343.5" stroke="#00ffff" stroke-width="1"/>
<line x1="744.5" y1="328" x2="744.5" y2="348" stroke="#00ffff" stroke-width="1"/>
<text transform="translate(740.5,336.7) rotate(-90)" y="2.52" font-size="7" fill="#00ff00" stroke="#00ff00" stroke-width="0.3" text-anchor="middle" textLength="8.61" lengthAdjust="spacingAndGlyphs" font-weight="bold">150</text>
<line x1="633.5" y1="267.5" x2="633.5" y2="320.7" stroke="#00ffff" stroke-width="1"/>
<line x1="628" y1="267.5" x2="654" y2="267.5" stroke="#00ffff" stroke-width="1"/>
<line x1="628" y1="320.5" x2="661" y2="320.5" stroke="#00ffff" stroke-width="1"/>
<line x1="633.5" y1="330.8" x2="633.5" y2="349" stroke="#00ffff" stroke-width="1"/>
<line x1="628" y1="330.5" x2="646" y2="330.5" stroke="#00ffff" stroke-width="1"/>
<line x1="628" y1="349.5" x2="661" y2="349.5" stroke="#00ffff" stroke-width="1"/>
<text transform="translate(628.7,295) rotate(-90)" y="2.52" font-size="7" fill="#00ff00" stroke="#00ff00" stroke-width="0.3" text-anchor="middle" textLength="8.61" lengthAdjust="spacingAndGlyphs" font-weight="bold">800</text>
<text transform="translate(628.7,340.6) rotate(-90)" y="2.52" font-size="7" fill="#00ff00" stroke="#00ff00" stroke-width="0.3" text-anchor="middle" textLength="8.61" lengthAdjust="spacingAndGlyphs" font-weight="bold">375</text>
<line x1="799.5" y1="267.5" x2="799.5" y2="320.7" stroke="#00ffff" stroke-width="1"/>
<line x1="812.5" y1="267.5" x2="812.5" y2="349" stroke="#00ffff" stroke-width="1"/>
<line x1="790" y1="267.5" x2="815" y2="267.5" stroke="#00ffff" stroke-width="1"/>
<line x1="775" y1="320.5" x2="802" y2="320.5" stroke="#00ffff" stroke-width="1"/>
<line x1="776" y1="349.5" x2="815" y2="349.5" stroke="#00ffff" stroke-width="1"/>
<text transform="translate(794.4,294.6) rotate(-90)" y="2.52" font-size="7" fill="#00ff00" stroke="#00ff00" stroke-width="0.3" text-anchor="middle" textLength="8.61" lengthAdjust="spacingAndGlyphs" font-weight="bold">800</text>
<text transform="translate(807.9,308) rotate(-90)" y="2.52" font-size="7" fill="#00ff00" stroke="#00ff00" stroke-width="0.3" text-anchor="middle" textLength="11.48" lengthAdjust="spacingAndGlyphs" font-weight="bold">1150</text>
<line x1="662" y1="371.5" x2="775.4" y2="371.5" stroke="#00ffff" stroke-width="1"/>
<line x1="660.4" y1="392.5" x2="778.4" y2="392.5" stroke="#00ffff" stroke-width="1"/>
<line x1="660.5" y1="349" x2="660.5" y2="395" stroke="#00ffff" stroke-width="1"/>
<line x1="778.5" y1="349" x2="778.5" y2="395" stroke="#00ffff" stroke-width="1"/>
<line x1="662.5" y1="349" x2="662.5" y2="373" stroke="#00ffff" stroke-width="1"/>
<line x1="775.5" y1="349" x2="775.5" y2="373" stroke="#00ffff" stroke-width="1"/>
<text transform="translate(690.4,367.1)" y="2.52" font-size="7" fill="#00ff00" stroke="#00ff00" stroke-width="0.3" text-anchor="middle" textLength="8.61" lengthAdjust="spacingAndGlyphs" font-weight="bold">840</text>
<text transform="translate(752.6,367.1)" y="2.52" font-size="7" fill="#00ff00" stroke="#00ff00" stroke-width="0.3" text-anchor="middle" textLength="8.61" lengthAdjust="spacingAndGlyphs" font-weight="bold">485</text>
<text transform="translate(719,388.2)" y="2.52" font-size="7" fill="#00ff00" stroke="#00ff00" stroke-width="0.3" text-anchor="middle" textLength="11.48" lengthAdjust="spacingAndGlyphs" font-weight="bold">1730</text>
<text transform="translate(615,420)" y="3.06" font-size="8.5" fill="#00ff00" stroke="#00ff00" stroke-width="0.3" text-anchor="middle" textLength="6.29" lengthAdjust="spacingAndGlyphs" font-weight="bold">42</text>
<line x1="610" y1="426.5" x2="625.3" y2="426.5" stroke="#00ffff" stroke-width="1"/>
<line x1="625.3" y1="427" x2="650.6" y2="331" stroke="#00ffff" stroke-width="1"/>
<text transform="translate(692.7,420)" y="3.06" font-size="8.5" fill="#00ff00" stroke="#00ff00" stroke-width="0.3" text-anchor="middle" textLength="6.29" lengthAdjust="spacingAndGlyphs" font-weight="bold">46</text>
<line x1="687" y1="426.5" x2="702.9" y2="426.5" stroke="#00ffff" stroke-width="1"/>
<line x1="687" y1="427" x2="672.5" y2="322" stroke="#00ffff" stroke-width="1"/>
<text transform="translate(776.4,420)" y="3.06" font-size="8.5" fill="#00ff00" stroke="#00ff00" stroke-width="0.3" text-anchor="middle" textLength="6.29" lengthAdjust="spacingAndGlyphs" font-weight="bold">44</text>
<line x1="770.3" y1="426.5" x2="785.5" y2="426.5" stroke="#00ffff" stroke-width="1"/>
<line x1="770.3" y1="427" x2="760.2" y2="320" stroke="#00ffff" stroke-width="1"/>
<text transform="translate(802,420)" y="3.06" font-size="8.5" fill="#00ff00" stroke="#00ff00" stroke-width="0.3" text-anchor="middle" textLength="6.29" lengthAdjust="spacingAndGlyphs" font-weight="bold">43</text>
<line x1="793.9" y1="426.5" x2="812.5" y2="426.5" stroke="#00ffff" stroke-width="1"/>
<line x1="793.9" y1="427" x2="773.7" y2="325.4" stroke="#00ffff" stroke-width="1"/>
<text transform="translate(832.7,420)" y="3.06" font-size="8.5" fill="#00ff00" stroke="#00ff00" stroke-width="0.3" text-anchor="middle" textLength="6.29" lengthAdjust="spacingAndGlyphs" font-weight="bold">45</text>
<line x1="824.3" y1="426.5" x2="842.8" y2="426.5" stroke="#00ffff" stroke-width="1"/>
<line x1="824.3" y1="427" x2="780.4" y2="330.4" stroke="#00ffff" stroke-width="1"/>
<text transform="translate(813,174)" y="3.06" font-size="8.5" fill="#00ff00" stroke="#00ff00" stroke-width="0.3" text-anchor="middle" textLength="6.29" lengthAdjust="spacingAndGlyphs" font-weight="bold">47</text>
<line x1="806.4" y1="180.5" x2="822.6" y2="180.5" stroke="#00ffff" stroke-width="1"/>
<line x1="806.4" y1="180.5" x2="755" y2="244.4" stroke="#00ffff" stroke-width="1"/>
<path d="M755 244.4 Q763 254 762 266" stroke="#00ffff" stroke-width="1" fill="none"/>
<path d="M129.76 475.43H133.68M130.97 477.6H134.35M129.76 479.77H133.9M130.47 475.42V480.81M132.1 474.65V479.25M133.72 475.52V479.57M135.81 475.98H139.16M134.96 479.23H138.13M135.86 474.79V480.57M138.29 475.7V480.19M140.25 475.98H144.48M139.75 479.23H143.43M140.42 475.76V479.82M142.05 474.6V479.43M143.67 475.51V480.66M139.61 480.85L142.05 477.6M144.59 475.16H149.4M145.1 476.79H148.18M146.04 478.41H149M145.92 480.04H148.31M145.81 475.76V479.89M148.24 475.93V479.8M150.02 475.16H154.14M150.63 476.79H154.25M150.08 478.41H153.62M151.01 480.04H153.53M150.78 475.42V480.64M153.22 474.39V480.15M154.94 475.98H158.29M155.57 479.23H158.27M155.35 475.19V480.45M156.97 475.85V480.02M158.6 474.96V480.38M154.54 480.85L156.97 477.6M160.71 475.16H163.68M160.58 476.79H164.08M160.17 478.41H163.86M159.96 480.04H163.86M160.73 475.58V479.66M163.17 474.69V480.47M165.42 475.16H168.35M164.89 476.79H169.27M165.01 478.41H169.32M165.89 480.04H168.6M165.3 475.44V479.28M166.92 475.66V480.48M168.55 474.9V480.67M170.18 475.16H173.8M169.86 476.79H173.62M170.5 478.41H173.03M170.7 480.04H173.07M170.68 475.06V480.17M173.12 474.86V479.27M169.46 480.85L171.9 477.6" stroke="#ffffff" stroke-width="1.25" fill="none"/>
<line x1="126" y1="482.5" x2="174" y2="482.5" stroke="#ffffff" stroke-width="1"/>
<path d="M136.34 485.48H139.66M137.23 488.73H140.58M136.77 485.23V488.9M138.5 484.54V490.04M140.23 485.11V489.74M135.9 490.35L138.5 487.1M143.7 484.93H146.55M144.44 487.1H146.56M143.51 489.27H147.81M143.77 485.12V489.15M145.5 484.04V489.83M147.23 484.06V490.29M150.8 485.48H154.21M150.26 488.73H154.95M151.2 485V488.97M153.8 484.24V489.58M156.96 484.93H161.59M157.91 487.1H161.16M157.7 489.27H161.91M158.2 484.2V489.84M160.8 484.53V489.76" stroke="#ffffff" stroke-width="1.25" fill="none"/>
<line x1="121" y1="528.5" x2="194" y2="528.5" stroke="#ffffff" stroke-width="1"/>
<line x1="121" y1="544.5" x2="194" y2="544.5" stroke="#ffffff" stroke-width="1"/>
<path d="M121 528.5L121 528.5M121 534.5L127 528.5M121 540.5L133 528.5M123.5 544L139 528.5M129.5 544L145 528.5M135.5 544L151 528.5M141.5 544L157 528.5M147.5 544L163 528.5M153.5 544L169 528.5M159.5 544L175 528.5M165.5 544L181 528.5M171.5 544L187 528.5M177.5 544L193 528.5M183.5 544L194 533.5M189.5 544L194 539.5" stroke="#ffff00" stroke-width="1.15" fill="none"/>
<path d="M137 531 Q136 526 149 525 Q163 526 162 533 Q161 541 152 545 L149 549 L146 545 Q138 541 137 531 Z" stroke="#ffffff" stroke-width="1" fill="#ffffff"/>
<rect x="145" y="533" width="1.2" height="1.2" fill="#555"/>
<rect x="150" y="537" width="1.2" height="1.2" fill="#555"/>
<rect x="154" y="532" width="1.2" height="1.2" fill="#555"/>
<rect x="148" y="541" width="1.2" height="1.2" fill="#555"/>
<rect x="143" y="538" width="1.2" height="1.2" fill="#555"/>
<path d="M137 521 Q149 513 162 521" stroke="#00ffff" stroke-width="1" fill="none"/>
<line x1="137" y1="521" x2="141" y2="531" stroke="#00ffff" stroke-width="1"/>
<line x1="162" y1="521" x2="158" y2="531" stroke="#00ffff" stroke-width="1"/>
<text transform="translate(149.5,515.5)" y="2.52" font-size="7" fill="#00ff00" stroke="#00ff00" stroke-width="0.3" text-anchor="middle" textLength="7.46" lengthAdjust="spacingAndGlyphs" font-weight="bold">60°</text>
<line x1="192.5" y1="528" x2="192.5" y2="544" stroke="#00ffff" stroke-width="1"/>
<line x1="186" y1="528.5" x2="196" y2="528.5" stroke="#00ffff" stroke-width="1"/>
<line x1="186" y1="544.5" x2="196" y2="544.5" stroke="#00ffff" stroke-width="1"/>
<text transform="translate(187,536) rotate(-90)" y="2.52" font-size="7" fill="#00ff00" stroke="#00ff00" stroke-width="0.3" text-anchor="middle" textLength="5.74" lengthAdjust="spacingAndGlyphs" font-weight="bold">12</text>
<line x1="149.5" y1="545" x2="149.5" y2="553" stroke="#00ffff" stroke-width="1"/>
<line x1="153.5" y1="540" x2="153.5" y2="553" stroke="#00ffff" stroke-width="1"/>
<line x1="142" y1="552.5" x2="158" y2="552.5" stroke="#00ffff" stroke-width="1"/>
<text transform="translate(144,550)" y="2.52" font-size="7" fill="#00ff00" stroke="#00ff00" stroke-width="0.3" text-anchor="middle" textLength="2.87" lengthAdjust="spacingAndGlyphs" font-weight="bold">2</text>
<text transform="translate(157,548) rotate(-90)" y="2.52" font-size="7" fill="#00ff00" stroke="#00ff00" stroke-width="0.3" text-anchor="middle" textLength="2.87" lengthAdjust="spacingAndGlyphs" font-weight="bold">2</text>
<path d="M247.62 475.98H250.7M247.43 479.23H250.69M246.99 475.3V480.24M248.61 474.41V479.56M250.24 475.67V480.41M252.59 475.43H255.95M251.71 477.6H255.69M252.06 479.77H254.89M251.96 475.72V479.96M253.59 474.98V479.55M255.21 474.52V480.43M256.58 475.43H259.73M257.14 477.6H260.9M257.45 479.77H260.73M257.34 474.36V480.18M259.78 475.09V479.36M256.12 480.85L258.56 477.6M261.25 475.43H265.2M261.27 477.6H265.55M261.89 479.77H265.65M262.32 474.98V479.47M264.76 475.33V479.94M261.1 480.85L263.54 477.6M267.31 475.98H270.41M267.51 479.23H270.01M266.89 474.57V479.75M268.51 474.54V480.59M270.14 474.39V479.39M266.07 480.85L268.51 477.6M272.51 475.98H275.64M271.83 479.23H275.4M272.27 474.77V480.57M274.71 475.49V480.58M276.07 475.16H280.58M277.43 476.79H279.9M277.01 478.41H280.17M276.72 480.04H280.61M277.24 474.63V479.8M279.68 475.48V480.43M281.96 475.98H284.6M281.42 479.23H285.09M282.22 475.51V479.66M284.66 474.53V480.41M281 480.85L283.44 477.6M286.96 475.98H289.76M286.44 479.23H290.67M287.19 475.74V480.05M289.63 475.24V480.58M285.98 480.85L288.41 477.6M291.84 475.98H295.78M292.32 479.23H294.4M292.17 475.53V480.42M294.61 475.72V480.56" stroke="#ffffff" stroke-width="1.25" fill="none"/>
<line x1="244" y1="482.5" x2="286" y2="482.5" stroke="#ffffff" stroke-width="1"/>
<path d="M254.92 484.66H258.71M255.59 486.29H258.8M255.97 487.91H259.27M256.25 489.54H259.78M256.2 485.31V489.8M258.8 483.89V489.8M254.9 490.35L257.5 487.1M262.87 485.48H266.91M262.15 488.73H266.64M263.2 484.3V488.85M265.8 485.32V488.94M269.76 484.93H274.09M268.99 487.1H273.65M269.38 489.27H272.62M269.77 484.92V489.56M271.5 484.83V488.91M273.23 484.47V489.47M268.9 490.35L271.5 487.1M277.37 484.93H280.76M276.32 487.1H279.61M276.7 489.27H280.89M277.2 484.35V490.28M279.8 484V489.64" stroke="#ffffff" stroke-width="1.25" fill="none"/>
<rect x="244.5" y="514.5" width="41" height="33" stroke="#ffffff" stroke-width="1" fill="none"/>
<line x1="244" y1="514.5" x2="285" y2="514.5" stroke="#212830" stroke-width="1.5"/>
<line x1="244" y1="515.5" x2="285" y2="515.5" stroke="#ffffff" stroke-width="1" stroke-dasharray="6,3"/>
<path d="M245 515L245 515M245 520L249.5 515.5M245 525L249.5 520.5M245 530L249.5 525.5M245 535L249.5 530.5M245 540L249.5 535.5M245 545L249.5 540.5M248 547L249.5 545.5" stroke="#ffff00" stroke-width="1.15" fill="none"/>
<path d="M249.5 530L249.5 530M249.5 536L255.5 530M249.5 542L261.5 530M250.5 547L267.5 530M256.5 547L273.5 530M262.5 547L279.5 530M268.5 547L285 530.5M274.5 547L285 536.5M280.5 547L285 542.5" stroke="#ffff00" stroke-width="1.15" fill="none"/>
<polygon points="249.5,522 263,531 249.5,547" stroke="#ffffff" stroke-width="1" fill="#ffffff"/>
<line x1="249.5" y1="522.5" x2="295" y2="522.5" stroke="#00ffff" stroke-width="1"/>
<line x1="262" y1="531.5" x2="296" y2="531.5" stroke="#00ffff" stroke-width="1"/>
<line x1="294.5" y1="515" x2="294.5" y2="548" stroke="#00ffff" stroke-width="1"/>
<line x1="285" y1="547.5" x2="297" y2="547.5" stroke="#00ffff" stroke-width="1"/>
<text transform="translate(290,526) rotate(-90)" y="2.52" font-size="7" fill="#00ff00" stroke="#00ff00" stroke-width="0.3" text-anchor="middle" textLength="2.87" lengthAdjust="spacingAndGlyphs" font-weight="bold">6</text>
<text transform="translate(290,539) rotate(-90)" y="2.52" font-size="7" fill="#00ff00" stroke="#00ff00" stroke-width="0.3" text-anchor="middle" textLength="5.74" lengthAdjust="spacingAndGlyphs" font-weight="bold">12</text>
<line x1="249.5" y1="547" x2="249.5" y2="555" stroke="#00ffff" stroke-width="1"/>
<line x1="254.5" y1="547" x2="254.5" y2="555" stroke="#00ffff" stroke-width="1"/>
<line x1="244" y1="554.5" x2="262" y2="554.5" stroke="#00ffff" stroke-width="1"/>
<text transform="translate(247,552)" y="2.52" font-size="7" fill="#00ff00" stroke="#00ff00" stroke-width="0.3" text-anchor="middle" textLength="2.87" lengthAdjust="spacingAndGlyphs" font-weight="bold">4</text>
<text transform="translate(258,552)" y="2.52" font-size="7" fill="#00ff00" stroke="#00ff00" stroke-width="0.3" text-anchor="middle" textLength="2.87" lengthAdjust="spacingAndGlyphs" font-weight="bold">2</text>
<text transform="translate(376,478.3)" y="3.24" font-size="9" fill="#ffffff" stroke="#ffffff" stroke-width="0.4" text-anchor="middle" textLength="7.29" lengthAdjust="spacingAndGlyphs">III</text>
<line x1="355" y1="483.5" x2="396" y2="483.5" stroke="#ffffff" stroke-width="1"/>
<path d="M363.68 485.63H368.06M364.08 487.8H366.94M364.27 489.97H367.54M363.77 484.89V490.49M365.5 485.74V489.98M367.23 485.21V490.2M362.9 491.05L365.5 487.8M371.41 486.18H374.77M371.38 489.43H374.08M370.77 484.95V490.12M372.5 486.01V490.62M374.23 485.12V490.85M369.9 491.05L372.5 487.8M377.39 485.36H380.84M378.26 486.99H381.63M378.14 488.61H381.88M377.76 490.24H381.22M378.2 486.01V489.91M380.8 484.83V489.96M376.9 491.05L379.5 487.8M385.17 485.36H388.42M384.95 486.99H387.61M384.19 488.61H388.94M384.54 490.24H388.31M384.77 484.79V490.69M386.5 485.96V490.42M388.23 484.79V490.75" stroke="#ffffff" stroke-width="1.25" fill="none"/>
<path d="M347 509.3L347 509.3M347 514.8L352.5 509.3M347 520.3L358 509.3M347 525.8L363.5 509.3M347 531.3L369 509.3M347 536.8L374.5 509.3M347 542.3L380 509.3M347 547.8L385.5 509.3M347 553.3L389 511.3M347 558.8L389 516.8M347 564.3L389 522.3M347 569.8L389 527.8M347.8 574.5L389 533.3M353.3 574.5L389 538.8M358.8 574.5L389 544.3M364.3 574.5L389 549.8M369.8 574.5L389 555.3M375.3 574.5L389 560.8M380.8 574.5L389 566.3M386.3 574.5L389 571.8" stroke="#ffff00" stroke-width="1.15" fill="none"/>
<rect x="347.5" y="509.5" width="42" height="65" stroke="#ffffff" stroke-width="1" fill="none"/>
<rect x="389.5" y="509.5" width="22" height="65" stroke="#ffffff" stroke-width="1" fill="none" stroke-dasharray="5,3"/>
<path d="M389 538.7L389 538.7M389 543.7L394 538.7M389 548.7L399 538.7M392.2 550.5L404 538.7M397.2 550.5L409 538.7M402.2 550.5L411 541.7M407.2 550.5L411 546.7" stroke="#ffff00" stroke-width="1.15" fill="none"/>
<line x1="383" y1="538.5" x2="411" y2="538.5" stroke="#ffffff" stroke-width="1"/>
<line x1="383" y1="550.5" x2="411" y2="550.5" stroke="#ffffff" stroke-width="1"/>
<rect x="383" y="539" width="5.5" height="11.5" fill="#ffffff"/>
<line x1="336" y1="538.5" x2="389" y2="538.5" stroke="#00ffff" stroke-width="1"/>
<line x1="336" y1="550.5" x2="389" y2="550.5" stroke="#00ffff" stroke-width="1"/>
<line x1="338.5" y1="536" x2="338.5" y2="553" stroke="#00ffff" stroke-width="1"/>
<text transform="translate(333.5,544.6) rotate(-90)" y="2.52" font-size="7" fill="#00ff00" stroke="#00ff00" stroke-width="0.3" text-anchor="middle" textLength="5.74" lengthAdjust="spacingAndGlyphs" font-weight="bold">12</text>
<line x1="423.5" y1="532" x2="423.5" y2="557" stroke="#00ffff" stroke-width="1"/>
<line x1="411" y1="538.5" x2="427" y2="538.5" stroke="#00ffff" stroke-width="1"/>
<line x1="411" y1="550.5" x2="427" y2="550.5" stroke="#00ffff" stroke-width="1"/>
<text transform="translate(421,544.6) rotate(-90)" y="2.52" font-size="7" fill="#00ff00" stroke="#00ff00" stroke-width="0.3" text-anchor="middle" textLength="5.74" lengthAdjust="spacingAndGlyphs" font-weight="bold">10</text>
<line x1="376" y1="530.5" x2="402" y2="530.5" stroke="#00ffff" stroke-width="1"/>
<text transform="translate(399,527)" y="2.52" font-size="7" fill="#00ff00" stroke="#00ff00" stroke-width="0.3" text-anchor="middle" textLength="2.87" lengthAdjust="spacingAndGlyphs" font-weight="bold">8</text>
<line x1="383.5" y1="526" x2="383.5" y2="540" stroke="#00ffff" stroke-width="1"/>
<line x1="389.5" y1="526" x2="389.5" y2="540" stroke="#00ffff" stroke-width="1"/>
<line x1="376" y1="565.5" x2="400" y2="565.5" stroke="#00ffff" stroke-width="1"/>
<text transform="translate(397,562)" y="2.52" font-size="7" fill="#00ff00" stroke="#00ff00" stroke-width="0.3" text-anchor="middle" textLength="2.87" lengthAdjust="spacingAndGlyphs" font-weight="bold">3</text>
<line x1="383.5" y1="550" x2="383.5" y2="568" stroke="#00ffff" stroke-width="1"/>
<line x1="389.5" y1="550" x2="389.5" y2="568" stroke="#00ffff" stroke-width="1"/>
<text transform="translate(493.2,478)" y="3.24" font-size="9" fill="#ffffff" stroke="#ffffff" stroke-width="0.4" text-anchor="middle" textLength="6.48" lengthAdjust="spacingAndGlyphs">IV</text>
<line x1="467" y1="482.5" x2="523" y2="482.5" stroke="#ffffff" stroke-width="1"/>
<path d="M480.84 485.88H484.46M480.79 489.12H484.51M481.4 485.61V490.72M484 485.76V490.43M480.1 490.75L482.7 487.5M487.94 485.06H491.96M488.32 486.69H491.82M488.23 488.31H491.94M487.99 489.94H491.29M488.4 484.85V489.97M491 484.36V489.7M494.96 485.88H498.16M494.26 489.12H497.99M494.97 485.66V490.67M496.7 484.65V490.61M498.43 484.66V490.61M494.1 490.75L496.7 487.5M501.57 485.33H505.58M501.68 487.5H505.07M502.23 489.67H506.12M502.4 484.61V490.74M505 484.79V490.57" stroke="#ffffff" stroke-width="1.25" fill="none"/>
<rect x="467.5" y="523.5" width="24" height="19" stroke="#ffffff" stroke-width="1" fill="none" stroke-dasharray="5,3"/>
<rect x="467.5" y="560.5" width="24" height="19.7" stroke="#ffffff" stroke-width="1" fill="none" stroke-dasharray="5,3"/>
<path d="M515 523.5L515 523.5M515 529.5L509 523.5M515 535.5L503 523.5M515 541.5L497 523.5M510.3 542.8L491 523.5M504.3 542.8L491 529.5M498.3 542.8L491 535.5M492.3 542.8L491 541.5" stroke="#ffff00" stroke-width="1.15" fill="none"/>
<path d="M515 560L515 560M515 566L509 560M515 572L503 560M515 578L497 560M510.7 579.7L491 560M504.7 579.7L491 566M498.7 579.7L491 572M492.7 579.7L491 578" stroke="#ffff00" stroke-width="1.15" fill="none"/>
<rect x="491.5" y="523.5" width="24" height="19" stroke="#ffffff" stroke-width="1" fill="none"/>
<rect x="491.5" y="560.5" width="24" height="19.7" stroke="#ffffff" stroke-width="1" fill="none"/>
<line x1="466" y1="542.5" x2="515" y2="542.5" stroke="#ffffff" stroke-width="1.5"/>
<line x1="466" y1="560.5" x2="515" y2="560.5" stroke="#ffffff" stroke-width="1.5"/>
<line x1="515.5" y1="542" x2="515.5" y2="560" stroke="#ffffff" stroke-width="1"/>
<path d="M467 541.5L467 541.5M467.5 544L470 541.5M470.5 544L473 541.5M473.5 544L476 541.5M476.5 544L479 541.5M479.5 544L482 541.5M482.5 544L485 541.5M485.5 544L488 541.5M488.5 544L491 541.5M491.5 544L494 541.5M494.5 544L497 541.5M497.5 544L500 541.5M500.5 544L503 541.5M503.5 544L506 541.5M506.5 544L509 541.5M509.5 544L512 541.5M512.5 544L515 541.5" stroke="#ffff00" stroke-width="1.15" fill="none"/>
<path d="M467 558.7L467 558.7M467.4 561.3L470 558.7M470.4 561.3L473 558.7M473.4 561.3L476 558.7M476.4 561.3L479 558.7M479.4 561.3L482 558.7M482.4 561.3L485 558.7M485.4 561.3L488 558.7M488.4 561.3L491 558.7M491.4 561.3L494 558.7M494.4 561.3L497 558.7M497.4 561.3L500 558.7M500.4 561.3L503 558.7M503.4 561.3L506 558.7M506.4 561.3L509 558.7M509.4 561.3L512 558.7M512.4 561.3L515 558.7" stroke="#ffff00" stroke-width="1.15" fill="none"/>
<line x1="476" y1="505.5" x2="520" y2="505.5" stroke="#00ffff" stroke-width="1"/>
<line x1="490.5" y1="503" x2="490.5" y2="524" stroke="#00ffff" stroke-width="1"/>
<line x1="493.5" y1="503" x2="493.5" y2="524" stroke="#00ffff" stroke-width="1"/>
<line x1="503.5" y1="503" x2="503.5" y2="524" stroke="#00ffff" stroke-width="1"/>
<line x1="510.5" y1="503" x2="510.5" y2="524" stroke="#00ffff" stroke-width="1"/>
<text transform="translate(479,502)" y="2.52" font-size="7" fill="#00ff00" stroke="#00ff00" stroke-width="0.3" text-anchor="middle" textLength="2.87" lengthAdjust="spacingAndGlyphs" font-weight="bold">3</text>
<text transform="translate(497,502)" y="2.52" font-size="7" fill="#00ff00" stroke="#00ff00" stroke-width="0.3" text-anchor="middle" textLength="8.61" lengthAdjust="spacingAndGlyphs" font-weight="bold">Φ56</text>
<text transform="translate(509,502)" y="2.52" font-size="7" fill="#00ff00" stroke="#00ff00" stroke-width="0.3" text-anchor="middle" textLength="5.74" lengthAdjust="spacingAndGlyphs" font-weight="bold">16</text>
<text transform="translate(510,510)" y="2.52" font-size="7" fill="#00ff00" stroke="#00ff00" stroke-width="0.3" text-anchor="middle" textLength="2.87" lengthAdjust="spacingAndGlyphs" font-weight="bold">6</text>
<line x1="515" y1="541" x2="522" y2="530" stroke="#00ffff" stroke-width="1"/>
<line x1="522" y1="529.5" x2="550" y2="529.5" stroke="#00ffff" stroke-width="1"/>
<text transform="translate(532,524)" y="2.52" font-size="7" fill="#00ff00" stroke="#00ff00" stroke-width="0.3" text-anchor="start" textLength="17.22" lengthAdjust="spacingAndGlyphs" font-weight="bold">200×45</text>
<line x1="515" y1="542.5" x2="544" y2="542.5" stroke="#00ffff" stroke-width="1"/>
<line x1="515" y1="560.5" x2="544" y2="560.5" stroke="#00ffff" stroke-width="1"/>
<line x1="541.5" y1="540" x2="541.5" y2="590" stroke="#00ffff" stroke-width="1"/>
<text transform="translate(537,570) rotate(-90)" y="2.52" font-size="7" fill="#00ff00" stroke="#00ff00" stroke-width="0.3" text-anchor="middle" textLength="15.78" lengthAdjust="spacingAndGlyphs" font-weight="bold">Φ203.5</text>
<line x1="508" y1="589.5" x2="534" y2="589.5" stroke="#00ffff" stroke-width="1"/>
<line x1="513.5" y1="578" x2="513.5" y2="592" stroke="#00ffff" stroke-width="1"/>
<line x1="515.5" y1="578" x2="515.5" y2="592" stroke="#00ffff" stroke-width="1"/>
<text transform="translate(526,585)" y="2.52" font-size="7" fill="#00ff00" stroke="#00ff00" stroke-width="0.3" text-anchor="middle" textLength="7.17" lengthAdjust="spacingAndGlyphs" font-weight="bold">1.6</text>
<text transform="translate(150.6,626.3)" y="3.24" font-size="9" fill="#ffffff" stroke="#ffffff" stroke-width="0.4" text-anchor="middle" textLength="2.43" lengthAdjust="spacingAndGlyphs">I</text>
<line x1="131" y1="631.5" x2="173" y2="631.5" stroke="#ffffff" stroke-width="1"/>
<path d="M137.83 634.17H142.64M138.68 637.42H142.06M138.8 634.06V638.41M141.4 633.06V638.93M145.56 633.36H148.79M145.33 634.99H148.52M144.93 636.61H148.41M145.91 638.24H148.42M145.37 632.89V638.97M147.1 632.9V637.5M148.83 634.02V637.43M152.57 634.17H155.3M152.17 637.42H156.69M152.8 632.97V638.26M155.4 632.81V638.74M159.61 633.63H162.56M158.82 635.8H162.7M159.52 637.97H162.67M159.37 632.59V638.33M161.1 633.08V638.08M162.83 633.1V638.84" stroke="#ffffff" stroke-width="1.25" fill="none"/>
<text transform="translate(188.5,636)" y="3.06" font-size="8.5" fill="#00ff00" stroke="#00ff00" stroke-width="0.3" text-anchor="middle" textLength="6.29" lengthAdjust="spacingAndGlyphs" font-weight="bold">48</text>
<line x1="181" y1="642.5" x2="197.6" y2="642.5" stroke="#00ffff" stroke-width="1"/>
<line x1="181" y1="642" x2="155" y2="677.8" stroke="#00ffff" stroke-width="1"/>
<line x1="131" y1="652.5" x2="173" y2="652.5" stroke="#00ffff" stroke-width="1"/>
<line x1="131.5" y1="651" x2="131.5" y2="680" stroke="#00ffff" stroke-width="1"/>
<line x1="173.5" y1="651" x2="173.5" y2="680" stroke="#00ffff" stroke-width="1"/>
<line x1="143.5" y1="653" x2="143.5" y2="682" stroke="#00ffff" stroke-width="2"/>
<line x1="158.5" y1="653" x2="158.5" y2="682" stroke="#00ffff" stroke-width="2"/>
<text transform="translate(137,649.2)" y="2.52" font-size="7" fill="#00ff00" stroke="#00ff00" stroke-width="0.3" text-anchor="middle" textLength="5.74" lengthAdjust="spacingAndGlyphs" font-weight="bold">98</text>
<text transform="translate(144,649.2)" y="2.52" font-size="7" fill="#00ff00" stroke="#00ff00" stroke-width="0.3" text-anchor="middle" textLength="2.87" lengthAdjust="spacingAndGlyphs" font-weight="bold">3</text>
<text transform="translate(151,649.2)" y="2.52" font-size="7" fill="#00ff00" stroke="#00ff00" stroke-width="0.3" text-anchor="middle" textLength="5.74" lengthAdjust="spacingAndGlyphs" font-weight="bold">75</text>
<text transform="translate(158,649.2)" y="2.52" font-size="7" fill="#00ff00" stroke="#00ff00" stroke-width="0.3" text-anchor="middle" textLength="2.87" lengthAdjust="spacingAndGlyphs" font-weight="bold">3</text>
<text transform="translate(166,649.2)" y="2.52" font-size="7" fill="#00ff00" stroke="#00ff00" stroke-width="0.3" text-anchor="middle" textLength="5.74" lengthAdjust="spacingAndGlyphs" font-weight="bold">98</text>
<rect x="131" y="669" width="42" height="4.5" fill="url(#dz)"/>
<rect x="131" y="673" width="42" height="5.5" fill="url(#dz)"/>
<line x1="131" y1="669.5" x2="173" y2="669.5" stroke="#ffffff" stroke-width="1"/>
<line x1="131" y1="673.5" x2="173" y2="673.5" stroke="#ffff00" stroke-width="1"/>
<line x1="130" y1="675.5" x2="175.5" y2="675.5" stroke="#ff0000" stroke-width="1.2"/>
<rect x="148.5" y="669.5" width="7" height="12.5" stroke="#ffffff" stroke-width="1" fill="none"/>
<rect x="149" y="670" width="5" height="11" fill="#212830"/>
<line x1="151.5" y1="670" x2="151.5" y2="681" stroke="#ffffff" stroke-width="1"/>
<polygon points="131,678.5 172.7,678.5 192,683 202.8,683 202.8,688.8 99.8,688.8 99.8,683 111,683" stroke="none" stroke-width="0" fill="url(#dz)"/>
<polygon points="131,678.5 172.7,678.5 192,683 202.8,683 202.8,688.8 99.8,688.8 99.8,683 111,683" stroke="#ffff00" stroke-width="0.6" fill="none"/>
<rect x="142" y="688" width="20" height="46.5" fill="url(#dz)"/>
<line x1="146" y1="690" x2="158" y2="702" stroke="#212830" stroke-width="1.2"/>
<line x1="147" y1="712" x2="160" y2="726" stroke="#212830" stroke-width="1.2"/>
<line x1="142.5" y1="688" x2="142.5" y2="734.5" stroke="#ffff00" stroke-width="1"/>
<line x1="161.5" y1="688" x2="161.5" y2="734.5" stroke="#ffff00" stroke-width="1"/>
<path d="M100.5 689 L100.5 734.5 L142 734.5" stroke="#ffffff" stroke-width="1" fill="none" stroke-dasharray="6,3"/>
<path d="M162 734.5 L194 734.5" stroke="#ffffff" stroke-width="1" fill="none" stroke-dasharray="6,3"/>
<line x1="194.5" y1="688" x2="194.5" y2="734.5" stroke="#ffffff" stroke-width="1"/>
<line x1="202.5" y1="688" x2="202.5" y2="734.5" stroke="#ffffff" stroke-width="1" stroke-dasharray="6,3"/>
<polyline points="100,691 106,686 112,691" stroke="#00ffff" stroke-width="1" fill="none"/>
<line x1="101" y1="691.5" x2="111" y2="691.5" stroke="#00ffff" stroke-width="1"/>
<circle cx="106" cy="686" r="3" stroke="#ffffff" stroke-width="1" fill="#ffffff"/>
<polyline points="191,691 197,686 203,691" stroke="#00ffff" stroke-width="1" fill="none"/>
<line x1="192" y1="691.5" x2="202" y2="691.5" stroke="#00ffff" stroke-width="1"/>
<circle cx="197" cy="686" r="3" stroke="#ffffff" stroke-width="1" fill="#ffffff"/>
<line x1="96" y1="680.5" x2="112" y2="680.5" stroke="#00ffff" stroke-width="1"/>
<text transform="translate(104,677)" y="2.34" font-size="6.5" fill="#00ff00" stroke="#00ff00" stroke-width="0.3" text-anchor="middle" textLength="5.33" lengthAdjust="spacingAndGlyphs" font-weight="bold">30</text>
<text transform="translate(96,686)" y="2.34" font-size="6.5" fill="#00ff00" stroke="#00ff00" stroke-width="0.3" text-anchor="middle" textLength="2.67" lengthAdjust="spacingAndGlyphs" font-weight="bold">6</text>
<text transform="translate(107,697)" y="2.34" font-size="6.5" fill="#00ff00" stroke="#00ff00" stroke-width="0.3" text-anchor="middle" textLength="6.93" lengthAdjust="spacingAndGlyphs" font-weight="bold">60°</text>
<text transform="translate(196,697)" y="2.34" font-size="6.5" fill="#00ff00" stroke="#00ff00" stroke-width="0.3" text-anchor="middle" textLength="6.93" lengthAdjust="spacingAndGlyphs" font-weight="bold">60°</text>
<text transform="translate(312.6,629)" y="3.24" font-size="9" fill="#ffffff" stroke="#ffffff" stroke-width="0.4" text-anchor="middle" textLength="4.86" lengthAdjust="spacingAndGlyphs">II</text>
<line x1="285" y1="633.5" x2="341" y2="633.5" stroke="#ffffff" stroke-width="1"/>
<path d="M300.73 636.33H304.22M300.35 638.5H303.44M299.68 640.67H303.56M300.8 635.36V640.23M303.4 635.29V640.57M299.5 641.75L302.1 638.5M307.49 636.88H310.55M307.9 640.12H311.52M307.37 636V640.96M309.1 635.97V641.58M310.83 636.75V641.13M306.5 641.75L309.1 638.5M314.11 636.33H317.52M313.93 638.5H318.53M313.57 640.67H318M314.37 636.67V641.42M316.1 635.97V640.51M317.83 635.7V641.5M321.96 636.33H324.3M320.87 638.5H324.83M321.15 640.67H325.65M321.8 635.97V640.26M324.4 635.74V640.8" stroke="#ffffff" stroke-width="1.25" fill="none"/>
<rect x="295.5" y="669.5" width="15" height="38.7" stroke="#ffffff" stroke-width="1" fill="none" stroke-dasharray="5,3"/>
<path d="M340 669L340 669M340 675L334 669M340 681L328 669M340 687L322 669M340 693L316 669M340 699L310.4 669.4M340 705L310.4 675.4M336.7 707.7L310.4 681.4M330.7 707.7L310.4 687.4M324.7 707.7L310.4 693.4M318.7 707.7L310.4 699.4M312.7 707.7L310.4 705.4" stroke="#ffff00" stroke-width="1.15" fill="none"/>
<rect x="310.5" y="669.5" width="30" height="38.7" stroke="#ffffff" stroke-width="1" fill="none"/>
<rect x="295.5" y="679.5" width="30" height="17.5" stroke="#ffffff" stroke-width="1" fill="none"/>
<rect x="310.5" y="679.8" width="14" height="16.5" fill="#212830"/>
<line x1="310.4" y1="679.5" x2="325" y2="679.5" stroke="#ffffff" stroke-width="1"/>
<line x1="310.4" y1="696.5" x2="325" y2="696.5" stroke="#ffffff" stroke-width="1"/>
<rect x="322" y="683" width="3" height="10" fill="#ffffff"/>
<line x1="278" y1="688.5" x2="341" y2="688.5" stroke="#ff0000" stroke-width="1" stroke-dasharray="12,3,3,3"/>
<line x1="276.5" y1="649.6" x2="276.5" y2="697" stroke="#00ffff" stroke-width="1"/>
<line x1="274" y1="679.5" x2="295" y2="679.5" stroke="#00ffff" stroke-width="1"/>
<line x1="274" y1="696.5" x2="295" y2="696.5" stroke="#00ffff" stroke-width="1"/>
<text transform="translate(272,667) rotate(-90)" y="2.34" font-size="6.5" fill="#00ff00" stroke="#00ff00" stroke-width="0.3" text-anchor="middle" textLength="17.06" lengthAdjust="spacingAndGlyphs" font-weight="bold">Φ36-0.3</text>
<text transform="translate(286,688) rotate(-90)" y="2.34" font-size="6.5" fill="#00ff00" stroke="#00ff00" stroke-width="0.3" text-anchor="middle" textLength="7.99" lengthAdjust="spacingAndGlyphs" font-weight="bold">Φ36</text>
<line x1="292.5" y1="679" x2="292.5" y2="697" stroke="#00ffff" stroke-width="1"/>
<line x1="310.5" y1="707" x2="310.5" y2="741" stroke="#00ffff" stroke-width="1"/>
<line x1="322.5" y1="707" x2="322.5" y2="741" stroke="#00ffff" stroke-width="1"/>
<line x1="325.5" y1="707" x2="325.5" y2="741" stroke="#00ffff" stroke-width="1"/>
<line x1="310.4" y1="719.5" x2="322.7" y2="719.5" stroke="#00ffff" stroke-width="1"/>
<line x1="310.4" y1="729.5" x2="325.5" y2="729.5" stroke="#00ffff" stroke-width="1"/>
<line x1="310.4" y1="738.5" x2="325.5" y2="738.5" stroke="#00ffff" stroke-width="1"/>
<text transform="translate(316.2,714.6)" y="2.52" font-size="7" fill="#00ff00" stroke="#00ff00" stroke-width="0.3" text-anchor="middle" textLength="5.74" lengthAdjust="spacingAndGlyphs" font-weight="bold">18</text>
<text transform="translate(316.2,724.3)" y="2.52" font-size="7" fill="#00ff00" stroke="#00ff00" stroke-width="0.3" text-anchor="middle" textLength="5.74" lengthAdjust="spacingAndGlyphs" font-weight="bold">20</text>
<text transform="translate(316.2,734)" y="2.52" font-size="7" fill="#00ff00" stroke="#00ff00" stroke-width="0.3" text-anchor="middle" textLength="5.74" lengthAdjust="spacingAndGlyphs" font-weight="bold">22</text>
</svg>
</body></html>
